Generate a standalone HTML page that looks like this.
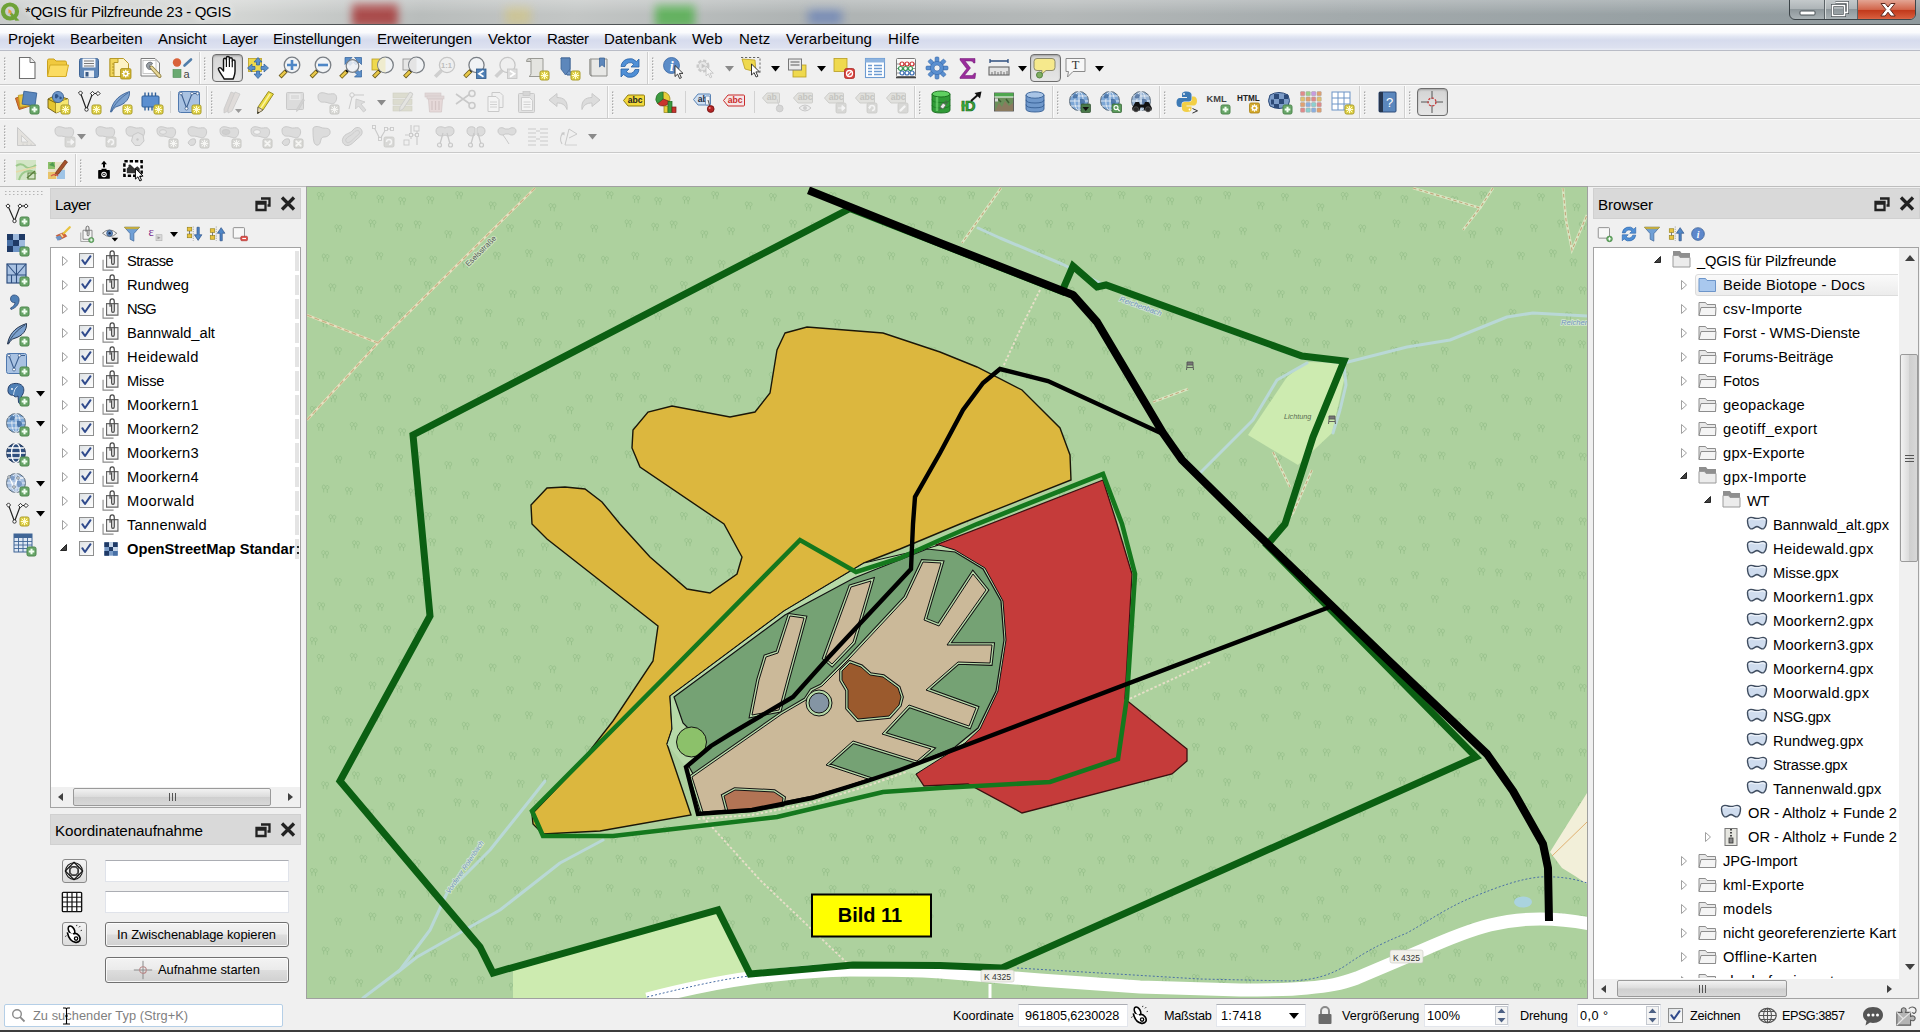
<!DOCTYPE html>
<html lang="de"><head><meta charset="utf-8"><title>*QGIS für Pilzfreunde 23 - QGIS</title>
<style>
html,body{margin:0;padding:0}
body{width:1920px;height:1032px;overflow:hidden;position:relative;background:#f0f0f0;font-family:'Liberation Sans',sans-serif}
svg{display:block}
</style></head><body>

<div id="title" style="position:absolute;left:0;top:0;width:1920px;height:24px;background:linear-gradient(100deg,#c9cccb 0%,#d4d6d4 12%,#b9bdbc 22%,#c3c6c5 30%,#aeb3b3 42%,#b4b8b8 55%,#a3aaac 70%,#98a1a4 85%,#8f999d 100%);overflow:hidden">
 <div style="position:absolute;left:352px;top:3px;width:46px;height:24px;background:#a53030;filter:blur(4px);opacity:.8"></div>
 <div style="position:absolute;left:505px;top:6px;width:26px;height:20px;background:#cfc58f;filter:blur(5px);opacity:.8"></div>
 <div style="position:absolute;left:655px;top:4px;width:40px;height:24px;background:#57b052;filter:blur(4px);opacity:.85"></div>
 <div style="position:absolute;left:808px;top:9px;width:34px;height:16px;background:#6f86b8;filter:blur(5px);opacity:.8"></div>
 <div style="position:absolute;left:0;top:0;width:1920px;height:24px;background:linear-gradient(180deg,rgba(255,255,255,.25),rgba(255,255,255,0) 60%)"></div>
 <svg width="22" height="22" viewBox="0 0 22 22" style="position:absolute;left:0px;top:1px">
  <circle cx="10" cy="10.5" r="7" fill="none" stroke="#6ea237" stroke-width="4.2"/>
  <path d="M11,11 L19.5,19.5 L15.5,19.8 L9.5,13z" fill="#6ea237"/>
  <path d="M8.5,8 l3.5,2.5 -1.6,.4 1.2,2 -1,.6 -1.2,-2 -1,1.2z" fill="#ee9a30"/>
 </svg>
 <div style="position:absolute;left:25px;top:2px;font:15px/20px 'Liberation Sans',sans-serif;color:#000;letter-spacing:-0.32px;text-shadow:0 0 6px rgba(255,255,255,.9),0 0 10px rgba(255,255,255,.7)">*QGIS für Pilzfreunde 23 - QGIS</div>
 <!-- window buttons -->
 <div style="position:absolute;left:1789px;top:-1px;width:127px;height:21px;border:1px solid #3c4448;border-radius:0 0 6px 6px;box-sizing:border-box;background:linear-gradient(180deg,#c4c9cb 0%,#aeb5b8 45%,#8e979b 50%,#a9b1b4 100%);overflow:hidden">
   <div style="position:absolute;left:34px;top:0;width:1px;height:21px;background:#5b6367"></div>
   <div style="position:absolute;left:35px;top:0;width:1px;height:21px;background:#d6dadb"></div>
   <div style="position:absolute;left:67px;top:0;width:1px;height:21px;background:#5b6367"></div>
   <div style="position:absolute;left:68px;top:0;width:58px;height:21px;background:linear-gradient(180deg,#e3a594 0%,#d2664c 45%,#c23a1c 50%,#d65a3a 85%,#e08a6a 100%)"></div>
   <svg width="127" height="21" viewBox="0 0 127 21" style="position:absolute;left:0;top:0">
    <rect x="10" y="11" width="15" height="4" rx="1" fill="#fff" stroke="#4b5357" stroke-width="1"/>
    <path d="M45.5,2.5 h12 v10 h-3 M42.5,5.5 h12 v10 h-12 z" fill="none" stroke="#4b5357" stroke-width="3"/>
    <path d="M45.5,2.5 h12 v10 h-3 M42.5,5.5 h12 v10 h-12 z" fill="none" stroke="#fff" stroke-width="1.6"/>
    <path d="M91,3.5 h4.2 l2.8,3.6 2.8,-3.6 h4.2 l-4.8,6 5,6.5 h-4.4 l-2.8,-3.8 -2.8,3.8 h-4.4 l5,-6.5z" fill="#fff" stroke="#5c2a20" stroke-width="1"/>
   </svg>
 </div>
</div>
<div style="position:absolute;left:0;top:24px;width:1920px;height:1px;background:#4f5456"></div>
<div id="menu" style="position:absolute;left:0;top:25px;width:1920px;height:25px;background:linear-gradient(180deg,#ffffff 0%,#fafbfd 30%,#e4e8f4 45%,#d6dbed 60%,#dde1f0 90%,#e9ecf5 100%);border-bottom:1px solid #b9bcc6;box-sizing:content-box"><span style="position:absolute;left:8px;top:4px;font:normal 15px/20px 'Liberation Sans',sans-serif;color:#000;white-space:nowrap;letter-spacing:-0.027px;">Projekt</span><span style="position:absolute;left:70px;top:4px;font:normal 15px/20px 'Liberation Sans',sans-serif;color:#000;white-space:nowrap;letter-spacing:-0.006px;">Bearbeiten</span><span style="position:absolute;left:158px;top:4px;font:normal 15px/20px 'Liberation Sans',sans-serif;color:#000;white-space:nowrap;letter-spacing:-0.099px;">Ansicht</span><span style="position:absolute;left:222px;top:4px;font:normal 15px/20px 'Liberation Sans',sans-serif;color:#000;white-space:nowrap;letter-spacing:-0.405px;">Layer</span><span style="position:absolute;left:273px;top:4px;font:normal 15px/20px 'Liberation Sans',sans-serif;color:#000;white-space:nowrap;letter-spacing:-0.160px;">Einstellungen</span><span style="position:absolute;left:377px;top:4px;font:normal 15px/20px 'Liberation Sans',sans-serif;color:#000;white-space:nowrap;letter-spacing:-0.133px;">Erweiterungen</span><span style="position:absolute;left:488px;top:4px;font:normal 15px/20px 'Liberation Sans',sans-serif;color:#000;white-space:nowrap;letter-spacing:0.162px;">Vektor</span><span style="position:absolute;left:547px;top:4px;font:normal 15px/20px 'Liberation Sans',sans-serif;color:#000;white-space:nowrap;letter-spacing:-0.447px;">Raster</span><span style="position:absolute;left:604px;top:4px;font:normal 15px/20px 'Liberation Sans',sans-serif;color:#000;white-space:nowrap;letter-spacing:-0.007px;">Datenbank</span><span style="position:absolute;left:692px;top:4px;font:normal 15px/20px 'Liberation Sans',sans-serif;color:#000;white-space:nowrap;letter-spacing:-0.025px;">Web</span><span style="position:absolute;left:739px;top:4px;font:normal 15px/20px 'Liberation Sans',sans-serif;color:#000;white-space:nowrap;letter-spacing:0.164px;">Netz</span><span style="position:absolute;left:786px;top:4px;font:normal 15px/20px 'Liberation Sans',sans-serif;color:#000;white-space:nowrap;letter-spacing:0.077px;">Verarbeitung</span><span style="position:absolute;left:888px;top:4px;font:normal 15px/20px 'Liberation Sans',sans-serif;color:#000;white-space:nowrap;letter-spacing:0.398px;">Hilfe</span></div><div style="position:absolute;left:0;top:84px;width:1920px;height:1px;background:#c9c9c9"></div><div style="position:absolute;left:0;top:85px;width:1920px;height:1px;background:#fafafa"></div><div style="position:absolute;left:0;top:118px;width:1920px;height:1px;background:#c9c9c9"></div><div style="position:absolute;left:0;top:119px;width:1920px;height:1px;background:#fafafa"></div><div style="position:absolute;left:0;top:152px;width:1920px;height:1px;background:#c9c9c9"></div><div style="position:absolute;left:0;top:153px;width:1920px;height:1px;background:#fafafa"></div><svg width="6" height="24" style="position:absolute;left:2px;top:57px"><rect x="2" y="0.5" width="1.5" height="1.5" fill="#a9a9a9"/><rect x="3" y="1.5" width="1.2" height="1.2" fill="#fdfdfd"/><rect x="2" y="3.5" width="1.5" height="1.5" fill="#a9a9a9"/><rect x="3" y="4.5" width="1.2" height="1.2" fill="#fdfdfd"/><rect x="2" y="6.5" width="1.5" height="1.5" fill="#a9a9a9"/><rect x="3" y="7.5" width="1.2" height="1.2" fill="#fdfdfd"/><rect x="2" y="9.5" width="1.5" height="1.5" fill="#a9a9a9"/><rect x="3" y="10.5" width="1.2" height="1.2" fill="#fdfdfd"/><rect x="2" y="12.5" width="1.5" height="1.5" fill="#a9a9a9"/><rect x="3" y="13.5" width="1.2" height="1.2" fill="#fdfdfd"/><rect x="2" y="15.5" width="1.5" height="1.5" fill="#a9a9a9"/><rect x="3" y="16.5" width="1.2" height="1.2" fill="#fdfdfd"/><rect x="2" y="18.5" width="1.5" height="1.5" fill="#a9a9a9"/><rect x="3" y="19.5" width="1.2" height="1.2" fill="#fdfdfd"/><rect x="2" y="21.5" width="1.5" height="1.5" fill="#a9a9a9"/><rect x="3" y="22.5" width="1.2" height="1.2" fill="#fdfdfd"/></svg><svg width="24" height="24" viewBox="0 0 24 24" style="position:absolute;left:15px;top:56px;overflow:visible;"><path d="M4.5,1.5 h10.5 l5,5 v16 h-15.5z" fill="#fff" stroke="#6f6f6f" stroke-width="1.1"/><path d="M15,1.5 v5 h5" fill="#eee" stroke="#6f6f6f" stroke-width="1"/></svg><svg width="24" height="24" viewBox="0 0 24 24" style="position:absolute;left:46px;top:56px;overflow:visible;"><path d="M1.5,4.5 q0,-1.5 1.5,-1.5 h5 l2,2 h9 q1.5,0 1.5,1.5 v13 h-19z" fill="#f0c93f" stroke="#c9a11e" stroke-width="1"/><path d="M4,9 h18.5 l-2.5,11.5 h-18.5z" fill="#fbdc62" stroke="#d3ab27" stroke-width="1"/></svg><svg width="24" height="24" viewBox="0 0 24 24" style="position:absolute;left:77px;top:56px;overflow:visible;"><rect x="2.5" y="2.5" width="19" height="19" rx="2" fill="#5f87b8" stroke="#3f6596" stroke-width="1"/><rect x="5.5" y="2.5" width="13" height="9" fill="#f4f6f9"/><path d="M7,5 h10 M7,7.5 h10 M7,10 h10" stroke="#777" stroke-width="1"/><rect x="7" y="14.5" width="10" height="7" fill="#e9eef5"/><rect x="8.5" y="16" width="3" height="4.5" fill="#3a5a85"/></svg><svg width="24" height="24" viewBox="0 0 24 24" style="position:absolute;left:108px;top:56px;overflow:visible;"><path d="M2,2.5 h13.5 l5,5 v13 h-18.5z" fill="#fdf3c4" stroke="#b79a2b" stroke-width="1"/><path d="M2,2.5 h8 v4 h-4 v14 h-4z" fill="#f1d65a" stroke="#b79a2b" stroke-width="1"/><path d="M4,8 h2 M4,11 h2 M4,14 h2 M4,17 h2" stroke="#a88b1c" stroke-width="0.8"/><rect x="12.5" y="12.5" width="10.5" height="10.5" rx="1.5" fill="#cfb42e" stroke="#a88f1a" stroke-width="0.8"/><circle cx="17.7" cy="17.7" r="2" fill="none" stroke="#fff" stroke-width="1.4"/><path d="M17.7,13.8 v1.6 M17.7,20 v1.6 M13.8,17.7 h1.6 M20,17.7 h1.6 M15,15 l1.1,1.1 M20.4,15 l-1.1,1.1 M15,20.4 l1.1,-1.1 M20.4,20.4 l-1.1,-1.1" stroke="#fff" stroke-width="1.2"/></svg><svg width="24" height="24" viewBox="0 0 24 24" style="position:absolute;left:139px;top:56px;overflow:visible;"><path d="M2,2.5 h14 l4.5,4.5 v13 h-18.5z" fill="#fafafa" stroke="#7c7c7c" stroke-width="1"/><rect x="4" y="4.5" width="13" height="13" fill="#fff" stroke="#bbb" stroke-width="0.8"/><path d="M12.5,11.5 L20.5,20" stroke="#8a7a3a" stroke-width="4" stroke-linecap="round"/><path d="M12.5,11.5 L20.5,20" stroke="#e7d79a" stroke-width="2.4" stroke-linecap="round"/><path d="M13.5,7.2 a3.6,3.6 0 1 0 -1.2,6 l-2,-2 0.5,-2 2,-0.6z" fill="#9aa0a6" stroke="#5f656b" stroke-width="0.8"/></svg><svg width="24" height="24" viewBox="0 0 24 24" style="position:absolute;left:170px;top:56px;overflow:visible;"><circle cx="7" cy="6.5" r="4.2" fill="#d9623a"/><rect x="3" y="13.5" width="8" height="8" fill="#6aaa72" stroke="#4c8a55" stroke-width="0.6"/><path d="M14.5,9.5 L21,3.5" stroke="#4f7daa" stroke-width="2.6" stroke-linecap="round"/><text x="13.5" y="21.5" font-family="Liberation Sans,sans-serif" font-size="11" fill="#444">a</text></svg><div style="position:absolute;left:199px;top:52px;width:1px;height:32px;background:#cfcfcf"></div><div style="position:absolute;left:200px;top:52px;width:1px;height:32px;background:#fbfbfb"></div><svg width="6" height="24" style="position:absolute;left:202px;top:57px"><rect x="2" y="0.5" width="1.5" height="1.5" fill="#a9a9a9"/><rect x="3" y="1.5" width="1.2" height="1.2" fill="#fdfdfd"/><rect x="2" y="3.5" width="1.5" height="1.5" fill="#a9a9a9"/><rect x="3" y="4.5" width="1.2" height="1.2" fill="#fdfdfd"/><rect x="2" y="6.5" width="1.5" height="1.5" fill="#a9a9a9"/><rect x="3" y="7.5" width="1.2" height="1.2" fill="#fdfdfd"/><rect x="2" y="9.5" width="1.5" height="1.5" fill="#a9a9a9"/><rect x="3" y="10.5" width="1.2" height="1.2" fill="#fdfdfd"/><rect x="2" y="12.5" width="1.5" height="1.5" fill="#a9a9a9"/><rect x="3" y="13.5" width="1.2" height="1.2" fill="#fdfdfd"/><rect x="2" y="15.5" width="1.5" height="1.5" fill="#a9a9a9"/><rect x="3" y="16.5" width="1.2" height="1.2" fill="#fdfdfd"/><rect x="2" y="18.5" width="1.5" height="1.5" fill="#a9a9a9"/><rect x="3" y="19.5" width="1.2" height="1.2" fill="#fdfdfd"/><rect x="2" y="21.5" width="1.5" height="1.5" fill="#a9a9a9"/><rect x="3" y="22.5" width="1.2" height="1.2" fill="#fdfdfd"/></svg><div style="position:absolute;left:212px;top:54px;width:31px;height:28px;box-sizing:border-box;border:1px solid #6e6e6e;border-radius:4px;background:linear-gradient(180deg,#d4d4d4,#e6e6e6);box-shadow:inset 0 1px 2px rgba(0,0,0,.25)"></div><svg width="24" height="24" viewBox="0 0 24 24" style="position:absolute;left:215px;top:56px;overflow:visible;"><g transform="translate(12 12) scale(1.2) translate(-10.5 -12.3)"><path d="M8.2,21.5 C6.5,18.5 4.3,16 3.4,13.6 C2.9,12.2 4.6,11.4 5.7,12.6 L7.6,14.8 V5.4 C7.6,3.7 10,3.7 10,5.4 V4 C10,2.2 12.5,2.2 12.5,4 V5 C12.5,3.4 14.9,3.4 14.9,5 V6.6 C14.9,5.2 17.2,5.2 17.2,6.8 V15 C17.2,18 16.2,19.5 15.6,21.5z" fill="#fff" stroke="#111" stroke-width="1.2" stroke-linejoin="round"/><path d="M10,5.4 v6 M12.5,5 v6.4 M14.9,6.6 v5" stroke="#111" stroke-width="1"/></g></svg><svg width="24" height="24" viewBox="0 0 24 24" style="position:absolute;left:246px;top:56px;overflow:visible;"><rect x="2.5" y="2.5" width="13" height="13" fill="#efd94e" stroke="#b99d21" stroke-width="0.8"/><g fill="#5b8fc9" stroke="#2f5f99" stroke-width="0.7"><path d="M12,1.500 l4,4.500 h-2.500 v3 h-3 v-3 h-2.500z"/><path d="M12,22.500 l4,-4.500 h-2.500 v-3 h-3 v3 h-2.500z"/><path d="M1.500,12 l4.500,-4 v2.500 h3 v3 h-3 v2.500z"/><path d="M22.500,12 l-4.500,-4 v2.500 h-3 v3 h3 v2.500z"/></g></svg><svg width="24" height="24" viewBox="0 0 24 24" style="position:absolute;left:277px;top:56px;overflow:visible;"><path d="M9.384,14.616 L3.0840000000000005,20.916" stroke="#6b5a1a" stroke-width="4.2" stroke-linecap="butt"/><path d="M8.584,15.416 L3.5840000000000005,20.416" stroke="#e9c94a" stroke-width="2.6" stroke-linecap="butt"/><circle cx="9.684000000000001" cy="14.315999999999999" r="1.5" fill="#111"/><circle cx="15" cy="9" r="7.8" fill="#f1f3f5" stroke="#7a7f85" stroke-width="1.3"/><path d="M15,4 v10 M10,9 h10" stroke="#4d86c6" stroke-width="2.6"/></svg><svg width="24" height="24" viewBox="0 0 24 24" style="position:absolute;left:308px;top:56px;overflow:visible;"><path d="M9.384,14.616 L3.0840000000000005,20.916" stroke="#6b5a1a" stroke-width="4.2" stroke-linecap="butt"/><path d="M8.584,15.416 L3.5840000000000005,20.416" stroke="#e9c94a" stroke-width="2.6" stroke-linecap="butt"/><circle cx="9.684000000000001" cy="14.315999999999999" r="1.5" fill="#111"/><circle cx="15" cy="9" r="7.8" fill="#f1f3f5" stroke="#7a7f85" stroke-width="1.3"/><path d="M10,9 h10" stroke="#4d86c6" stroke-width="2.6"/></svg><svg width="24" height="24" viewBox="0 0 24 24" style="position:absolute;left:339px;top:56px;overflow:visible;"><g fill="#5b8fc9" stroke="#2f5f99" stroke-width="0.7"><path d="M6,1.500 h7 l-2.500,2.500 3,3 -2.500,2.500 -3,-3 -2,2z"/><path d="M22.500,1.500 v7 l-2.500,-2.500 -3,3 -2.500,-2.500 3,-3 -2,-2z"/><path d="M22.500,21 h-7 l2.500,-2.500 -3,-3 2.500,-2.500 3,3 2,-2z"/></g><path d="M8,15 L1.700,21.300" stroke="#6b5a1a" stroke-width="4.2"/><path d="M7.200,15.800 L2.200,20.800" stroke="#e9c94a" stroke-width="2.600"/><circle cx="8.300" cy="14.700" r="1.500" fill="#111"/><circle cx="13.500" cy="10" r="6.300" fill="#eef1f4" fill-opacity="0.85" stroke="#7a7f85" stroke-width="1.200"/></svg><svg width="24" height="24" viewBox="0 0 24 24" style="position:absolute;left:370px;top:56px;overflow:visible;"><rect x="2" y="3" width="9" height="11" fill="#efd94e" stroke="#b99d21" stroke-width="0.8"/><path d="M9.884,14.616 L3.5840000000000005,20.916" stroke="#6b5a1a" stroke-width="4.2" stroke-linecap="butt"/><path d="M9.084,15.416 L4.0840000000000005,20.416" stroke="#e9c94a" stroke-width="2.6" stroke-linecap="butt"/><circle cx="10.184000000000001" cy="14.315999999999999" r="1.5" fill="#111"/><circle cx="15.5" cy="9" r="7.8" fill="#f1f3f5" stroke="#7a7f85" stroke-width="1.3"/><path d="M15.5,1.5 a7.5,7.5 0 0 0 0,15z" fill="#efeccf"/></svg><svg width="24" height="24" viewBox="0 0 24 24" style="position:absolute;left:401px;top:56px;overflow:visible;"><rect x="2" y="3" width="9" height="11" fill="#e6e6e6" stroke="#8d8d8d" stroke-width="0.8"/><path d="M9.884,14.616 L3.5840000000000005,20.916" stroke="#6b5a1a" stroke-width="4.2" stroke-linecap="butt"/><path d="M9.084,15.416 L4.0840000000000005,20.416" stroke="#e9c94a" stroke-width="2.6" stroke-linecap="butt"/><circle cx="10.184000000000001" cy="14.315999999999999" r="1.5" fill="#111"/><circle cx="15.5" cy="9" r="7.8" fill="#f1f3f5" stroke="#7a7f85" stroke-width="1.3"/><path d="M15.5,1.5 a7.5,7.5 0 0 0 0,15z" fill="#e4e4e4"/></svg><svg width="24" height="24" viewBox="0 0 24 24" style="position:absolute;left:432px;top:56px;overflow:visible;"><path d="M9.528,14.472 L3.2280000000000006,20.772" stroke="#cfcfcf" stroke-width="3.8" stroke-linecap="butt"/><circle cx="15" cy="9" r="7.6" fill="#efefef" stroke="#c6c6c6" stroke-width="1.3"/><text x="14.5" y="12" text-anchor="middle" font-family="Liberation Sans,sans-serif" font-size="7.5" font-weight="bold" fill="#bdbdbd">1:1</text></svg><svg width="24" height="24" viewBox="0 0 24 24" style="position:absolute;left:463px;top:56px;overflow:visible;"><path d="M8.028,14.472 L1.7280000000000006,20.772" stroke="#6b5a1a" stroke-width="4.2" stroke-linecap="butt"/><path d="M7.228000000000001,15.272 L2.2280000000000006,20.272" stroke="#e9c94a" stroke-width="2.6" stroke-linecap="butt"/><circle cx="8.328000000000001" cy="14.171999999999999" r="1.5" fill="#111"/><circle cx="13.5" cy="9" r="7.6" fill="#f1f3f5" stroke="#7a7f85" stroke-width="1.3"/><rect x="13.5" y="13" width="9.5" height="9.5" fill="#4f7fb5" stroke="#2e5887" stroke-width="0.8"/><path d="M20.5,14.8 l-4.5,3 4.5,3" fill="none" stroke="#fff" stroke-width="1.8"/></svg><svg width="24" height="24" viewBox="0 0 24 24" style="position:absolute;left:494px;top:56px;overflow:visible;"><path d="M8.028,14.472 L1.7280000000000006,20.772" stroke="#cfcfcf" stroke-width="3.8" stroke-linecap="butt"/><circle cx="13.5" cy="9" r="7.6" fill="#efefef" stroke="#c6c6c6" stroke-width="1.3"/><rect x="13.5" y="13" width="9.5" height="9.5" fill="#dcdcdc" stroke="#c4c4c4" stroke-width="0.8"/><path d="M16,14.8 l4.5,3 -4.5,3" fill="none" stroke="#fff" stroke-width="1.8"/></svg><svg width="24" height="24" viewBox="0 0 24 24" style="position:absolute;left:525px;top:56px;overflow:visible;"><path d="M4,2.5 h14 v15 q0,3 -3,3 h-11 q2,-1 2,-3 v-13 q0,-2 -2,-2z" fill="#e4e4e0" stroke="#9a9a94" stroke-width="1"/><path d="M4,2.5 q-2.5,0 -2.5,3 h4.5" fill="#d0d0cc" stroke="#9a9a94" stroke-width="1"/><rect x="15" y="15" width="9" height="9" rx="1.6" fill="#e0d247" stroke="#a99b2a" stroke-width="1"/><path d="M19.5,16.2 v6.6 M16.2,19.5 h6.6 M17.1,17.1 l4.8,4.8 M21.9,17.1 l-4.8,4.8" stroke="#fffcd2" stroke-width="1" stroke-linecap="round"/></svg><svg width="24" height="24" viewBox="0 0 24 24" style="position:absolute;left:556px;top:56px;overflow:visible;"><path d="M5,2 h9 v14 h6 v3 h-9z" fill="#6f96c6" stroke="#3f6596" stroke-width="1"/><path d="M5,2 h9 v11 l-4.5,6 -4.5,-6z" fill="#5d87bb" stroke="#3f6596" stroke-width="0.8"/><rect x="15" y="15" width="9" height="9" rx="1.6" fill="#e0d247" stroke="#a99b2a" stroke-width="1"/><path d="M19.5,16.2 v6.6 M16.2,19.5 h6.6 M17.1,17.1 l4.8,4.8 M21.9,17.1 l-4.8,4.8" stroke="#fffcd2" stroke-width="1" stroke-linecap="round"/></svg><svg width="24" height="24" viewBox="0 0 24 24" style="position:absolute;left:587px;top:56px;overflow:visible;"><path d="M3,3 h17 v17 h-15 q-2,0 -2,-2z" fill="#e8e8e6" stroke="#8d8d89" stroke-width="1"/><path d="M3,3 v15 q0,2 2,2 q-1,-1 -1,-2 v-15" fill="#cfcfcc" stroke="#8d8d89" stroke-width="0.8"/><path d="M12.5,2 h5 v9 l-2.5,-2.2 -2.5,2.2z" fill="#5d87bb" stroke="#3f6596" stroke-width="0.8"/></svg><svg width="24" height="24" viewBox="0 0 24 24" style="position:absolute;left:618px;top:56px;overflow:visible;"><path d="M3,10.5 A9,9 0 0 1 18.5,5.5 L21,3 V11 H13 L15.8,8.2 A5.2,5.2 0 0 0 7,10.5z" fill="#4f8fd6" stroke="#2a62a6" stroke-width="0.8"/><path d="M21,13.5 A9,9 0 0 1 5.5,18.5 L3,21 V13 H11 L8.2,15.8 A5.2,5.2 0 0 0 17,13.5z" fill="#4f8fd6" stroke="#2a62a6" stroke-width="0.8"/></svg><div style="position:absolute;left:647px;top:52px;width:1px;height:32px;background:#cfcfcf"></div><div style="position:absolute;left:648px;top:52px;width:1px;height:32px;background:#fbfbfb"></div><svg width="6" height="24" style="position:absolute;left:650px;top:57px"><rect x="2" y="0.5" width="1.5" height="1.5" fill="#a9a9a9"/><rect x="3" y="1.5" width="1.2" height="1.2" fill="#fdfdfd"/><rect x="2" y="3.5" width="1.5" height="1.5" fill="#a9a9a9"/><rect x="3" y="4.5" width="1.2" height="1.2" fill="#fdfdfd"/><rect x="2" y="6.5" width="1.5" height="1.5" fill="#a9a9a9"/><rect x="3" y="7.5" width="1.2" height="1.2" fill="#fdfdfd"/><rect x="2" y="9.5" width="1.5" height="1.5" fill="#a9a9a9"/><rect x="3" y="10.5" width="1.2" height="1.2" fill="#fdfdfd"/><rect x="2" y="12.5" width="1.5" height="1.5" fill="#a9a9a9"/><rect x="3" y="13.5" width="1.2" height="1.2" fill="#fdfdfd"/><rect x="2" y="15.5" width="1.5" height="1.5" fill="#a9a9a9"/><rect x="3" y="16.5" width="1.2" height="1.2" fill="#fdfdfd"/><rect x="2" y="18.5" width="1.5" height="1.5" fill="#a9a9a9"/><rect x="3" y="19.5" width="1.2" height="1.2" fill="#fdfdfd"/><rect x="2" y="21.5" width="1.5" height="1.5" fill="#a9a9a9"/><rect x="3" y="22.5" width="1.2" height="1.2" fill="#fdfdfd"/></svg><svg width="24" height="24" viewBox="0 0 24 24" style="position:absolute;left:662px;top:56px;overflow:visible;"><circle cx="9.5" cy="9.5" r="8" fill="#5b8cc8" stroke="#3a67a3" stroke-width="0.8"/><text x="9.7" y="14.5" text-anchor="middle" font-family="Liberation Serif,serif" font-style="italic" font-weight="bold" font-size="14" fill="#fff">i</text><path d="M13,9.5 l0,11 2.6,-2.4 2,4.4 1.8,-.8 -2,-4.3 3.6,0z" fill="#fff" stroke="#222" stroke-width="0.9" stroke-linejoin="round"/></svg><svg width="24" height="24" viewBox="0 0 24 24" style="position:absolute;left:693px;top:56px;overflow:visible;"><circle cx="10" cy="10" r="5" fill="none" stroke="#c9c9c9" stroke-width="3" stroke-dasharray="3 1.6"/><circle cx="10" cy="10" r="4.5" fill="#e8e8e8" stroke="#c6c6c6" stroke-width="0.8"/><path d="M8.6,7.6 l4,2.4 -4,2.4z" fill="#c4c4c4"/><path d="M13,10 l0,10 2.4,-2.2 1.8,4 1.6,-.7 -1.8,-3.9 3.3,0z" fill="#f4f4f4" stroke="#c4c4c4" stroke-width="0.9"/></svg><svg width="24" height="24" viewBox="0 0 24 24" style="position:absolute;left:740px;top:56px;overflow:visible;"><path d="M2,3 l13,1 1,12 -11,-3z" fill="#efd94e" stroke="#b99d21" stroke-width="0.8"/><path d="M1,1.5 h19 v17" fill="none" stroke="#666" stroke-width="1" stroke-dasharray="2.2 1.8"/><path d="M11.5,8 l0,11 2.6,-2.4 2,4.4 1.8,-.8 -2,-4.3 3.6,0z" fill="#fff" stroke="#222" stroke-width="0.9" stroke-linejoin="round"/></svg><svg width="24" height="24" viewBox="0 0 24 24" style="position:absolute;left:786px;top:56px;overflow:visible;"><rect x="7" y="9" width="13" height="12" fill="#efd94e" stroke="#b99d21" stroke-width="0.8"/><rect x="2.5" y="3" width="13" height="11" fill="#eaeaea" stroke="#777" stroke-width="1"/><path d="M4.5,6 h9 M4.5,9 h9" stroke="#8a8a8a" stroke-width="1.6"/></svg><svg width="24" height="24" viewBox="0 0 24 24" style="position:absolute;left:832px;top:56px;overflow:visible;"><rect x="2" y="2.5" width="13" height="13" fill="#efd94e" stroke="#b99d21" stroke-width="0.8"/><rect x="12.5" y="12.5" width="10" height="10" rx="2" fill="#d8413d" stroke="#a82825" stroke-width="0.8"/><circle cx="17.5" cy="17.5" r="3" fill="none" stroke="#fff" stroke-width="1.3"/><path d="M15.4,19.6 l4.2,-4.2" stroke="#fff" stroke-width="1.3"/></svg><svg width="24" height="24" viewBox="0 0 24 24" style="position:absolute;left:863px;top:56px;overflow:visible;"><rect x="2.5" y="2.5" width="19" height="19" fill="#fff" stroke="#6d9bd1" stroke-width="1.1"/><rect x="2.5" y="2.5" width="19" height="4" fill="#8db3df"/><path d="M5,9.5 h4 M11,9.5 h8 M5,12.5 h4 M11,12.5 h8 M5,15.5 h4 M11,15.5 h8 M5,18.5 h4 M11,18.5 h8" stroke="#6d9bd1" stroke-width="1.3"/></svg><svg width="24" height="24" viewBox="0 0 24 24" style="position:absolute;left:894px;top:56px;overflow:visible;"><rect x="2.5" y="2.5" width="19" height="18" rx="1" fill="#fafafa" stroke="#7a7a7a" stroke-width="1"/><path d="M2,21.500 h20" stroke="#444" stroke-width="1.600"/><path d="M3,8 h18 M3,12.5 h18 M3,17 h18" stroke="#777" stroke-width="0.8"/><g stroke-width="1.2" fill="#fff"><circle cx="8" cy="8" r="2" stroke="#c33"/><circle cx="13" cy="8" r="2" stroke="#c33"/><circle cx="18" cy="8" r="2" stroke="#c33"/><circle cx="6.5" cy="12.5" r="2" stroke="#3a9a55"/><circle cx="11.5" cy="12.5" r="2" stroke="#3a9a55"/><circle cx="16.5" cy="12.5" r="2" stroke="#3a9a55"/><circle cx="8" cy="17" r="2" stroke="#3c6fb5"/><circle cx="13" cy="17" r="2" stroke="#3c6fb5"/><circle cx="18" cy="17" r="2" stroke="#3c6fb5"/></g></svg><svg width="24" height="24" viewBox="0 0 24 24" style="position:absolute;left:925px;top:56px;overflow:visible;"><g transform="translate(12 12)"><g fill="#5a8fd0" stroke="#3567a8" stroke-width="0.6"><rect x="-1.9" y="-11" width="3.8" height="6" rx="1" transform="rotate(0)"/><rect x="-1.9" y="-11" width="3.8" height="6" rx="1" transform="rotate(45)"/><rect x="-1.9" y="-11" width="3.8" height="6" rx="1" transform="rotate(90)"/><rect x="-1.9" y="-11" width="3.8" height="6" rx="1" transform="rotate(135)"/><rect x="-1.9" y="-11" width="3.8" height="6" rx="1" transform="rotate(180)"/><rect x="-1.9" y="-11" width="3.8" height="6" rx="1" transform="rotate(225)"/><rect x="-1.9" y="-11" width="3.8" height="6" rx="1" transform="rotate(270)"/><rect x="-1.9" y="-11" width="3.8" height="6" rx="1" transform="rotate(315)"/></g><circle r="6.6" fill="#5a8fd0" stroke="#3567a8" stroke-width="0.6"/><circle r="3" fill="#f0f0f0" stroke="#3567a8" stroke-width="0.6"/></g></svg><svg width="24" height="24" viewBox="0 0 24 24" style="position:absolute;left:956px;top:56px;overflow:visible;"><path d="M4,2.5 h15 v4.5 h-1.5 q-0.3,-2 -2.5,-2 h-6 l5.5,7 -6,7.5 h7 q2.2,0 2.7,-2.3 h1.5 l-0.7,5.3 h-15 v-1.2 l6.7,-8.6 -6.7,-8.7z" fill="#992c9b" stroke="#6d1470" stroke-width="0.5"/></svg><svg width="24" height="24" viewBox="0 0 24 24" style="position:absolute;left:987px;top:56px;overflow:visible;"><path d="M3,3 v4 M21,3 v4 M3,5 h18" stroke="#2f4f7f" stroke-width="1.3" fill="none"/><rect x="2" y="11" width="20" height="8" fill="#e3e3e3" stroke="#666" stroke-width="1.1"/><path d="M5,19 v-3 M8,19 v-4 M11,19 v-3 M14,19 v-4 M17,19 v-3 M20,19 v-4" stroke="#666" stroke-width="0.9"/></svg><svg width="9" height="6" style="position:absolute;left:724.5px;top:65.5px"><path d="M0,0 h9 l-4.5,5.5z" fill="#8a8a8a"/></svg><svg width="9" height="6" style="position:absolute;left:770.5px;top:65.5px"><path d="M0,0 h9 l-4.5,5.5z" fill="#000"/></svg><svg width="9" height="6" style="position:absolute;left:816.5px;top:65.5px"><path d="M0,0 h9 l-4.5,5.5z" fill="#000"/></svg><svg width="9" height="6" style="position:absolute;left:1017.5px;top:65.5px"><path d="M0,0 h9 l-4.5,5.5z" fill="#000"/></svg><div style="position:absolute;left:1030px;top:54px;width:31px;height:28px;box-sizing:border-box;border:1px solid #6e6e6e;border-radius:4px;background:linear-gradient(180deg,#d4d4d4,#e6e6e6);box-shadow:inset 0 1px 2px rgba(0,0,0,.25)"></div><svg width="24" height="24" viewBox="0 0 24 24" style="position:absolute;left:1033px;top:56px;overflow:visible;"><path d="M4,2.5 h15 q3,0 3,3 v6 q0,3 -3,3 h-6 l-4.5,4 0.5,-4 h-5 q-3,0 -3,-3 v-6 q0,-3 3,-3z" fill="#f6e98c" stroke="#8c8a6a" stroke-width="1"/><circle cx="6.5" cy="19" r="3" fill="#7fae62" stroke="#4f7f3a" stroke-width="0.9"/></svg><svg width="24" height="24" viewBox="0 0 24 24" style="position:absolute;left:1064px;top:56px;overflow:visible;"><path d="M2,2.5 h19 v13 h-12 l-5.5,5.5 1,-5.5 h-2.5z" fill="#f7f7f7" stroke="#8a8a8a" stroke-width="1"/><text x="11.5" y="13" text-anchor="middle" font-family="Liberation Serif,serif" font-size="12.5" fill="#333">T</text></svg><svg width="9" height="6" style="position:absolute;left:1094.5px;top:65.5px"><path d="M0,0 h9 l-4.5,5.5z" fill="#000"/></svg><svg width="6" height="24" style="position:absolute;left:2px;top:91px"><rect x="2" y="0.5" width="1.5" height="1.5" fill="#a9a9a9"/><rect x="3" y="1.5" width="1.2" height="1.2" fill="#fdfdfd"/><rect x="2" y="3.5" width="1.5" height="1.5" fill="#a9a9a9"/><rect x="3" y="4.5" width="1.2" height="1.2" fill="#fdfdfd"/><rect x="2" y="6.5" width="1.5" height="1.5" fill="#a9a9a9"/><rect x="3" y="7.5" width="1.2" height="1.2" fill="#fdfdfd"/><rect x="2" y="9.5" width="1.5" height="1.5" fill="#a9a9a9"/><rect x="3" y="10.5" width="1.2" height="1.2" fill="#fdfdfd"/><rect x="2" y="12.5" width="1.5" height="1.5" fill="#a9a9a9"/><rect x="3" y="13.5" width="1.2" height="1.2" fill="#fdfdfd"/><rect x="2" y="15.5" width="1.5" height="1.5" fill="#a9a9a9"/><rect x="3" y="16.5" width="1.2" height="1.2" fill="#fdfdfd"/><rect x="2" y="18.5" width="1.5" height="1.5" fill="#a9a9a9"/><rect x="3" y="19.5" width="1.2" height="1.2" fill="#fdfdfd"/><rect x="2" y="21.5" width="1.5" height="1.5" fill="#a9a9a9"/><rect x="3" y="22.5" width="1.2" height="1.2" fill="#fdfdfd"/></svg><svg width="24" height="24" viewBox="0 0 24 24" style="position:absolute;left:15px;top:90px;overflow:visible;"><rect x="2" y="6" width="12" height="12" transform="rotate(-18 8 12)" fill="#d9772e" stroke="#a9561a" stroke-width="0.8"/><rect x="4" y="4.5" width="12" height="12" transform="rotate(-8 10 10)" fill="#e8c33f" stroke="#b89b1d" stroke-width="0.8"/><rect x="8" y="2" width="13" height="13" transform="rotate(8 14 8)" fill="#5b87bd" stroke="#345f93" stroke-width="0.8"/><rect x="15" y="15" width="9" height="9" rx="1.6" fill="#69a669" stroke="#4d864d" stroke-width="1"/><path d="M19.5,16.7 v5.6 M16.7,19.5 h5.6" stroke="#f2fff2" stroke-width="2"/></svg><svg width="24" height="24" viewBox="0 0 24 24" style="position:absolute;left:46px;top:90px;overflow:visible;"><path d="M2,9 l8,-4 12,4 v9 l-12,5 -8,-5z" fill="#e3c531" stroke="#6b5a12" stroke-width="0.9"/><path d="M2,9 l8,4 12,-4 M10,13 v10" stroke="#6b5a12" stroke-width="0.9" fill="none"/><path d="M10,13 l12,-4 v9 l-12,5z" fill="#f6e670"/><circle cx="12" cy="7" r="5.6" fill="#6b95c9" stroke="#34598c" stroke-width="0.8"/><path d="M9,4.5 q2,-1 3,0.5 q1.5,1.5 -0.5,2.5 q-1,1.5 -2.5,0.5z M13.5,6.5 q2,-0.5 2.5,1.5 q-1,2 -2.5,1z" fill="#2f5488"/><rect x="15" y="15" width="9" height="9" rx="1.6" fill="#e0d247" stroke="#a99b2a" stroke-width="1"/><path d="M19.5,16.2 v6.6 M16.2,19.5 h6.6 M17.1,17.1 l4.8,4.8 M21.9,17.1 l-4.8,4.8" stroke="#fffcd2" stroke-width="1" stroke-linecap="round"/></svg><svg width="24" height="24" viewBox="0 0 24 24" style="position:absolute;left:77px;top:90px;overflow:visible;"><path d="M3.5,3 L9.5,19.5 L15.5,3.5 L21,3.5" fill="none" stroke="#222" stroke-width="1.2"/><rect x="2" y="1.5" width="3" height="3" transform="rotate(45 3.5 3)" fill="#fff" stroke="#222" stroke-width="0.9"/><rect x="14" y="2" width="3" height="3" transform="rotate(45 15.5 3.5)" fill="#fff" stroke="#222" stroke-width="0.9"/><rect x="19.5" y="2" width="3" height="3" transform="rotate(45 21 3.5)" fill="#fff" stroke="#222" stroke-width="0.9"/><circle cx="9.5" cy="19.5" r="1.7" fill="#fff" stroke="#222" stroke-width="0.9"/><rect x="15" y="15" width="9" height="9" rx="1.6" fill="#e0d247" stroke="#a99b2a" stroke-width="1"/><path d="M19.5,16.2 v6.6 M16.2,19.5 h6.6 M17.1,17.1 l4.8,4.8 M21.9,17.1 l-4.8,4.8" stroke="#fffcd2" stroke-width="1" stroke-linecap="round"/></svg><svg width="24" height="24" viewBox="0 0 24 24" style="position:absolute;left:108px;top:90px;overflow:visible;"><path d="M2.5,22 C4,14 8,6 21.5,1.5 C22,8 18,14 9,16.5 C7,17 5,19 3.5,22z" fill="#7da2cf" stroke="#3c6296" stroke-width="0.9"/><path d="M3,21.5 C7,14 12,8 20,3" fill="none" stroke="#3c6296" stroke-width="0.8"/><rect x="15" y="15" width="9" height="9" rx="1.6" fill="#e0d247" stroke="#a99b2a" stroke-width="1"/><path d="M19.5,16.2 v6.6 M16.2,19.5 h6.6 M17.1,17.1 l4.8,4.8 M21.9,17.1 l-4.8,4.8" stroke="#fffcd2" stroke-width="1" stroke-linecap="round"/></svg><svg width="24" height="24" viewBox="0 0 24 24" style="position:absolute;left:139px;top:90px;overflow:visible;"><rect x="3" y="6" width="17" height="11" rx="1" fill="#5b8fd0" stroke="#2f5f99" stroke-width="1"/><path d="M6,6 v-3.5 M9.5,6 v-3.5 M13,6 v-3.5 M16.5,6 v-3.5 M6,17 v3.5 M9.5,17 v3.5 M13,17 v3.5" stroke="#2f5f99" stroke-width="1.4"/><rect x="15" y="15" width="9" height="9" rx="1.6" fill="#e0d247" stroke="#a99b2a" stroke-width="1"/><path d="M19.5,16.2 v6.6 M16.2,19.5 h6.6 M17.1,17.1 l4.8,4.8 M21.9,17.1 l-4.8,4.8" stroke="#fffcd2" stroke-width="1" stroke-linecap="round"/></svg><div style="position:absolute;left:170px;top:91px;width:1px;height:22px;background:#d2d2d2"></div><svg width="24" height="24" viewBox="0 0 24 24" style="position:absolute;left:177px;top:90px;overflow:visible;"><rect x="1.5" y="1.5" width="21" height="21" rx="2" fill="#a9c2e2" stroke="#4f78ae" stroke-width="1"/><path d="M4,3 L9.5,18 L15,3.5 L21,3.5" fill="none" stroke="#3d5f8f" stroke-width="1.1"/><circle cx="4" cy="3.5" r="1.4" fill="#fff" stroke="#3d5f8f" stroke-width="0.8"/><circle cx="15" cy="3.5" r="1.4" fill="#fff" stroke="#3d5f8f" stroke-width="0.8"/><circle cx="20.5" cy="3.5" r="1.4" fill="#fff" stroke="#3d5f8f" stroke-width="0.8"/><circle cx="9.5" cy="18.5" r="1.5" fill="#fff" stroke="#3d5f8f" stroke-width="0.8"/><rect x="15" y="15" width="9" height="9" rx="1.6" fill="#e0d247" stroke="#a99b2a" stroke-width="1"/><path d="M19.5,16.2 v6.6 M16.2,19.5 h6.6 M17.1,17.1 l4.8,4.8 M21.9,17.1 l-4.8,4.8" stroke="#fffcd2" stroke-width="1" stroke-linecap="round"/></svg><div style="position:absolute;left:206px;top:86px;width:1px;height:32px;background:#cfcfcf"></div><div style="position:absolute;left:207px;top:86px;width:1px;height:32px;background:#fbfbfb"></div><svg width="6" height="24" style="position:absolute;left:209px;top:91px"><rect x="2" y="0.5" width="1.5" height="1.5" fill="#a9a9a9"/><rect x="3" y="1.5" width="1.2" height="1.2" fill="#fdfdfd"/><rect x="2" y="3.5" width="1.5" height="1.5" fill="#a9a9a9"/><rect x="3" y="4.5" width="1.2" height="1.2" fill="#fdfdfd"/><rect x="2" y="6.5" width="1.5" height="1.5" fill="#a9a9a9"/><rect x="3" y="7.5" width="1.2" height="1.2" fill="#fdfdfd"/><rect x="2" y="9.5" width="1.5" height="1.5" fill="#a9a9a9"/><rect x="3" y="10.5" width="1.2" height="1.2" fill="#fdfdfd"/><rect x="2" y="12.5" width="1.5" height="1.5" fill="#a9a9a9"/><rect x="3" y="13.5" width="1.2" height="1.2" fill="#fdfdfd"/><rect x="2" y="15.5" width="1.5" height="1.5" fill="#a9a9a9"/><rect x="3" y="16.5" width="1.2" height="1.2" fill="#fdfdfd"/><rect x="2" y="18.5" width="1.5" height="1.5" fill="#a9a9a9"/><rect x="3" y="19.5" width="1.2" height="1.2" fill="#fdfdfd"/><rect x="2" y="21.5" width="1.5" height="1.5" fill="#a9a9a9"/><rect x="3" y="22.5" width="1.2" height="1.2" fill="#fdfdfd"/></svg><svg width="24" height="24" viewBox="0 0 24 24" style="position:absolute;left:220px;top:90px;overflow:visible;"><path d="M11,2 l5,2 -8,17 -4,2 0,-4z" fill="#dad6d4" stroke="#c9c9c9" stroke-width="0.8"/><path d="M15,2 l5,2 -8,17 -4,2 0,-4z" fill="#e0dcda" stroke="#c9c9c9" stroke-width="0.8"/><path d="M15,19 h7 l-3.5,4z" fill="#9a9a9a"/></svg><svg width="24" height="24" viewBox="0 0 24 24" style="position:absolute;left:253px;top:90px;overflow:visible;"><path d="M15.5,1.5 l5,2.5 -10.5,16 -5.5,3.5 0.5,-6.5z" fill="#eada3e" stroke="#8f8420" stroke-width="0.9"/><path d="M17,4 l-10,15.5" stroke="#fbf3a0" stroke-width="1.4"/><path d="M5,17 l5,3 -5.5,3.5z" fill="#e9d7b5" stroke="#555" stroke-width="0.7"/><path d="M4.6,21.5 l1.8,1 -1.9,1.2z" fill="#222"/></svg><svg width="24" height="24" viewBox="0 0 24 24" style="position:absolute;left:284px;top:90px;overflow:visible;"><rect x="2.5" y="2.5" width="17" height="17" rx="1" fill="#dcdcdc" stroke="#c9c9c9" stroke-width="1"/><rect x="5.5" y="4" width="11" height="6" fill="#eaeaea"/><path d="M7,6 h8 M7,8 h8" stroke="#c9c9c9" stroke-width="0.8"/><path d="M20.5,10 l-6,10 -2,1.5 0.3,-2.5 6,-10z" fill="#d2d2d2" stroke="#c9c9c9" stroke-width="0.7"/></svg><svg width="24" height="24" viewBox="0 0 24 24" style="position:absolute;left:315px;top:90px;overflow:visible;"><path d="M3,6 C3,2.5 8,2 11,3.5 C14,5 17,3 19.5,4 C22.5,5.5 22,10 20,12.5 C18,14.5 15,13.5 12,12.5 C9,11.5 6,13 4.5,11 C3.2,9.5 3,8 3,6z" fill="#dcdcdc" stroke="#c9c9c9" stroke-width="1"/><rect x="15" y="15" width="9" height="9" rx="1.6" fill="#d9d9d6" stroke="#c6c6c3" stroke-width="1"/><path d="M19.5,16.2 v6.6 M16.2,19.5 h6.6 M17.1,17.1 l4.8,4.8 M21.9,17.1 l-4.8,4.8" stroke="#f6f6f4" stroke-width="1" stroke-linecap="round"/></svg><svg width="24" height="24" viewBox="0 0 24 24" style="position:absolute;left:346px;top:90px;overflow:visible;"><circle cx="6" cy="5" r="2.2" fill="#f2f2f2" stroke="#c9c9c9" stroke-width="1"/><path d="M6,7 L3,19 M8,5 h10" stroke="#c9c9c9" stroke-width="1"/><path d="M10,9 l9,3 -4,2 5,6 -2.5,2 -5,-6 -3,3z" fill="#dcdcdc" stroke="#c9c9c9" stroke-width="0.8"/></svg><svg width="24" height="24" viewBox="0 0 24 24" style="position:absolute;left:391px;top:90px;overflow:visible;"><rect x="2" y="3" width="19" height="5" fill="#dcdccf" stroke="#cfcfc4" stroke-width="0.6"/><rect x="2" y="9.5" width="19" height="5" fill="#dcdccf" stroke="#cfcfc4" stroke-width="0.6"/><rect x="2" y="16" width="19" height="5" fill="#dcdccf" stroke="#cfcfc4" stroke-width="0.6"/><path d="M19,2 l3,2 -10,15 -3.5,2 0.5,-4z" fill="#e4e4e0" stroke="#c9c9c9" stroke-width="0.8"/></svg><svg width="24" height="24" viewBox="0 0 24 24" style="position:absolute;left:422px;top:90px;overflow:visible;"><rect x="3" y="3" width="16" height="4" fill="#e0d6d6" stroke="#d3c8c8" stroke-width="0.6"/><rect x="5" y="6" width="17" height="3" fill="#e0d6d6" stroke="#d3c8c8" stroke-width="0.6"/><path d="M6.5,9 h14 l-1,13 h-12z" fill="#e6d9d9" stroke="#d3c8c8" stroke-width="0.8"/><path d="M10,11 v9 M13.5,11 v9 M17,11 v9" stroke="#d3c4c4" stroke-width="1.2"/></svg><svg width="24" height="24" viewBox="0 0 24 24" style="position:absolute;left:453px;top:90px;overflow:visible;"><path d="M3,4 L17,14 M3,14 L17,4" stroke="#c9c9c9" stroke-width="1.6"/><circle cx="19" cy="15.5" r="3" fill="none" stroke="#c9c9c9" stroke-width="1.6"/><circle cx="19" cy="5" r="3" fill="none" stroke="#c9c9c9" stroke-width="1.6" transform="translate(0 -1.5)"/></svg><svg width="24" height="24" viewBox="0 0 24 24" style="position:absolute;left:484px;top:90px;overflow:visible;"><path d="M8,2.5 h8 l3,3 v12 h-11z" fill="#f0f0f0" stroke="#c9c9c9" stroke-width="1"/><path d="M4,6.5 h8 l3,3 v12 h-11z" fill="#f4f4f4" stroke="#c9c9c9" stroke-width="1"/><path d="M6,12 h7 M6,14.5 h7 M6,17 h7" stroke="#c9c9c9" stroke-width="0.8"/></svg><svg width="24" height="24" viewBox="0 0 24 24" style="position:absolute;left:515px;top:90px;overflow:visible;"><rect x="3.5" y="3.5" width="16" height="19" rx="1" fill="#e2e2e2" stroke="#c9c9c9" stroke-width="1"/><rect x="8" y="1.5" width="7" height="4" fill="#d6d6d6" stroke="#c9c9c9" stroke-width="0.8"/><path d="M6.5,7.5 h8 l3,3 v10 h-11z" fill="#f4f4f4" stroke="#c9c9c9" stroke-width="0.9"/><path d="M8.5,12 h7 M8.5,14.5 h7 M8.5,17 h7" stroke="#c9c9c9" stroke-width="0.8"/></svg><svg width="24" height="24" viewBox="0 0 24 24" style="position:absolute;left:547px;top:90px;overflow:visible;"><path d="M2,10 L10,3.5 V7.5 C17,7.5 21,11 20,19.5 C18,14.5 15,13 10,13 V16.5z" fill="#dcdcdc" stroke="#c9c9c9" stroke-width="1"/></svg><svg width="24" height="24" viewBox="0 0 24 24" style="position:absolute;left:578px;top:90px;overflow:visible;"><path d="M22,10 L14,3.5 V7.5 C7,7.5 3,11 4,19.5 C6,14.5 9,13 14,13 V16.5z" fill="#dcdcdc" stroke="#c9c9c9" stroke-width="1"/></svg><svg width="9" height="6" style="position:absolute;left:376.5px;top:99.5px"><path d="M0,0 h9 l-4.5,5.5z" fill="#8a8a8a"/></svg><div style="position:absolute;left:607px;top:86px;width:1px;height:32px;background:#cfcfcf"></div><div style="position:absolute;left:608px;top:86px;width:1px;height:32px;background:#fbfbfb"></div><svg width="6" height="24" style="position:absolute;left:610px;top:91px"><rect x="2" y="0.5" width="1.5" height="1.5" fill="#a9a9a9"/><rect x="3" y="1.5" width="1.2" height="1.2" fill="#fdfdfd"/><rect x="2" y="3.5" width="1.5" height="1.5" fill="#a9a9a9"/><rect x="3" y="4.5" width="1.2" height="1.2" fill="#fdfdfd"/><rect x="2" y="6.5" width="1.5" height="1.5" fill="#a9a9a9"/><rect x="3" y="7.5" width="1.2" height="1.2" fill="#fdfdfd"/><rect x="2" y="9.5" width="1.5" height="1.5" fill="#a9a9a9"/><rect x="3" y="10.5" width="1.2" height="1.2" fill="#fdfdfd"/><rect x="2" y="12.5" width="1.5" height="1.5" fill="#a9a9a9"/><rect x="3" y="13.5" width="1.2" height="1.2" fill="#fdfdfd"/><rect x="2" y="15.5" width="1.5" height="1.5" fill="#a9a9a9"/><rect x="3" y="16.5" width="1.2" height="1.2" fill="#fdfdfd"/><rect x="2" y="18.5" width="1.5" height="1.5" fill="#a9a9a9"/><rect x="3" y="19.5" width="1.2" height="1.2" fill="#fdfdfd"/><rect x="2" y="21.5" width="1.5" height="1.5" fill="#a9a9a9"/><rect x="3" y="22.5" width="1.2" height="1.2" fill="#fdfdfd"/></svg><svg width="24" height="24" viewBox="0 0 24 24" style="position:absolute;left:622px;top:90px;overflow:visible;"><path d="M1.5,10.5 l4.5,-5.5 h15.5 q1,0 1,1 v9 q0,1 -1,1 h-15.5z" fill="#f2d93b" stroke="#8f7d14" stroke-width="1"/><text x="5.7" y="13.4" font-family="Liberation Sans,sans-serif" font-weight="bold" font-size="8.6" fill="#222">abc</text></svg><svg width="24" height="24" viewBox="0 0 24 24" style="position:absolute;left:654px;top:90px;overflow:visible;"><path d="M9,9 L9,2 A7,7 0 0 1 15.5,11.5z" fill="#e8cf3a" stroke="#8f7d14" stroke-width="0.7"/><path d="M9,9 L15.5,11.5 A7,7 0 0 1 3.5,13.5z" fill="#c8352d" stroke="#7a1d18" stroke-width="0.7"/><path d="M9,9 L3.5,13.5 A7,7 0 0 1 9,2z" fill="#3c9a3f" stroke="#1f6a22" stroke-width="0.7"/><rect x="10" y="16" width="4" height="6.5" fill="#e8cf3a" stroke="#8f7d14" stroke-width="0.7"/><rect x="14" y="11.5" width="4" height="11" fill="#3c9a3f" stroke="#1f6a22" stroke-width="0.7"/><rect x="18" y="17" width="4" height="5.5" fill="#c8352d" stroke="#7a1d18" stroke-width="0.7"/></svg><div style="position:absolute;left:685px;top:91px;width:1px;height:22px;background:#d2d2d2"></div><svg width="24" height="24" viewBox="0 0 24 24" style="position:absolute;left:692px;top:90px;overflow:visible;"><path d="M1.5,9.5 l4.5,-5.5 h11.5 q1,0 1,1 v9 q0,1 -1,1 h-11.5z" fill="#cfe0f3" stroke="#5b84b5" stroke-width="1"/><text x="5.7" y="12.4" font-family="Liberation Sans,sans-serif" font-weight="bold" font-size="8.6" fill="#1d2d44">ab</text><rect x="13.5" y="6" width="4.5" height="9" rx="1" fill="#f4f4f4" stroke="#5b84b5" stroke-width="0.8"/><path d="M16,10 L18,17" stroke="#555" stroke-width="1"/><circle cx="18.7" cy="19" r="3.4" fill="#b42525" stroke="#6d0f0f" stroke-width="0.8"/><circle cx="17.7" cy="18" r="1" fill="#e88"/></svg><svg width="24" height="24" viewBox="0 0 24 24" style="position:absolute;left:722px;top:90px;overflow:visible;"><path d="M1.5,10.5 l4.5,-5.5 h15.5 q1,0 1,1 v9 q0,1 -1,1 h-15.5z" fill="#f5e6e6" stroke="#c92b2b" stroke-width="1"/><text x="5.7" y="13.4" font-family="Liberation Sans,sans-serif" font-weight="bold" font-size="8.6" fill="#c92b2b">abc</text></svg><div style="position:absolute;left:754px;top:91px;width:1px;height:22px;background:#d2d2d2"></div><svg width="24" height="24" viewBox="0 0 24 24" style="position:absolute;left:761px;top:90px;overflow:visible;"><path d="M1.5,8.0 l4.5,-5.0 h11.5 q1,0 1,1 v8 q0,1 -1,1 h-11.5z" fill="#e1e1de" stroke="#cdcdca" stroke-width="1"/><text x="5.7" y="10.4" font-family="Liberation Sans,sans-serif" font-weight="bold" font-size="8.6" fill="#c4c4c0">ab</text><path d="M16,9 L18,16" stroke="#cfcfcf" stroke-width="1"/><circle cx="18.7" cy="18.5" r="3.4" fill="#d6d6d6" stroke="#c7c7c7" stroke-width="0.8"/></svg><svg width="24" height="24" viewBox="0 0 24 24" style="position:absolute;left:792px;top:90px;overflow:visible;"><path d="M1.5,8.0 l4.5,-5.0 h13.5 q1,0 1,1 v8 q0,1 -1,1 h-13.5z" fill="#e1e1de" stroke="#cdcdca" stroke-width="1"/><text x="5.7" y="10.4" font-family="Liberation Sans,sans-serif" font-weight="bold" font-size="8.6" fill="#c4c4c0">abc</text><path d="M7,18 q6,-6 12,0 q-6,6 -12,0z" fill="#ededed" stroke="#c8c8c8" stroke-width="1"/><circle cx="13" cy="18" r="2" fill="#cfcfcf"/></svg><svg width="24" height="24" viewBox="0 0 24 24" style="position:absolute;left:823px;top:90px;overflow:visible;"><path d="M1.5,8.0 l4.5,-5.0 h13.5 q1,0 1,1 v8 q0,1 -1,1 h-13.5z" fill="#e1e1de" stroke="#cdcdca" stroke-width="1"/><text x="5.7" y="10.4" font-family="Liberation Sans,sans-serif" font-weight="bold" font-size="8.6" fill="#c4c4c0">abc</text><rect x="13" y="13" width="10" height="10" rx="1.5" fill="#d8d8d6" stroke="#c9c9c7" stroke-width="0.8"/><path d="M15,18 h4 v-2.5 l3.2,2.5 -3.2,2.5 v-2.5" fill="#f4f4f4" stroke="#f4f4f4" stroke-width="1"/></svg><svg width="24" height="24" viewBox="0 0 24 24" style="position:absolute;left:854px;top:90px;overflow:visible;"><path d="M1.5,8.0 l4.5,-5.0 h13.5 q1,0 1,1 v8 q0,1 -1,1 h-13.5z" fill="#e1e1de" stroke="#cdcdca" stroke-width="1"/><text x="5.7" y="10.4" font-family="Liberation Sans,sans-serif" font-weight="bold" font-size="8.6" fill="#c4c4c0">abc</text><rect x="13" y="13" width="10" height="10" rx="1.5" fill="#d8d8d6" stroke="#c9c9c7" stroke-width="0.8"/><path d="M15.5,18 a2.5,2.5 0 1 1 2.5,2.5" fill="none" stroke="#f4f4f4" stroke-width="1.5"/><path d="M14,17 l1.5,2.2 1.8,-2z" fill="#f4f4f4"/></svg><svg width="24" height="24" viewBox="0 0 24 24" style="position:absolute;left:885px;top:90px;overflow:visible;"><path d="M1.5,8.0 l4.5,-5.0 h13.5 q1,0 1,1 v8 q0,1 -1,1 h-13.5z" fill="#e1e1de" stroke="#cdcdca" stroke-width="1"/><text x="5.7" y="10.4" font-family="Liberation Sans,sans-serif" font-weight="bold" font-size="8.6" fill="#c4c4c0">abc</text><rect x="13" y="13" width="10" height="10" rx="1.5" fill="#d8d8d6" stroke="#c9c9c7" stroke-width="0.8"/><path d="M15.5,20.5 l4,-4" stroke="#f4f4f4" stroke-width="2.4" stroke-linecap="round"/></svg><div style="position:absolute;left:914px;top:86px;width:1px;height:32px;background:#cfcfcf"></div><div style="position:absolute;left:915px;top:86px;width:1px;height:32px;background:#fbfbfb"></div><svg width="6" height="24" style="position:absolute;left:917px;top:91px"><rect x="2" y="0.5" width="1.5" height="1.5" fill="#a9a9a9"/><rect x="3" y="1.5" width="1.2" height="1.2" fill="#fdfdfd"/><rect x="2" y="3.5" width="1.5" height="1.5" fill="#a9a9a9"/><rect x="3" y="4.5" width="1.2" height="1.2" fill="#fdfdfd"/><rect x="2" y="6.5" width="1.5" height="1.5" fill="#a9a9a9"/><rect x="3" y="7.5" width="1.2" height="1.2" fill="#fdfdfd"/><rect x="2" y="9.5" width="1.5" height="1.5" fill="#a9a9a9"/><rect x="3" y="10.5" width="1.2" height="1.2" fill="#fdfdfd"/><rect x="2" y="12.5" width="1.5" height="1.5" fill="#a9a9a9"/><rect x="3" y="13.5" width="1.2" height="1.2" fill="#fdfdfd"/><rect x="2" y="15.5" width="1.5" height="1.5" fill="#a9a9a9"/><rect x="3" y="16.5" width="1.2" height="1.2" fill="#fdfdfd"/><rect x="2" y="18.5" width="1.5" height="1.5" fill="#a9a9a9"/><rect x="3" y="19.5" width="1.2" height="1.2" fill="#fdfdfd"/><rect x="2" y="21.5" width="1.5" height="1.5" fill="#a9a9a9"/><rect x="3" y="22.5" width="1.2" height="1.2" fill="#fdfdfd"/></svg><svg width="24" height="24" viewBox="0 0 24 24" style="position:absolute;left:929px;top:90px;overflow:visible;"><path d="M3,4 v16 q0,3 9,3 q9,0 9,-3 v-16z" fill="#2f9a36" stroke="#176b1d" stroke-width="0.9"/><ellipse cx="12" cy="4" rx="9" ry="3" fill="#5fd061" stroke="#176b1d" stroke-width="0.9"/><path d="M3,9.5 q0,3 9,3 q9,0 9,-3 M3,15 q0,3 9,3 q9,0 9,-3" fill="none" stroke="#1c7a22" stroke-width="0.8"/><path d="M8,7 v14" stroke="#7fe07f" stroke-width="2.5" opacity=".6"/><path d="M11,17 l3,-4 3,2 -3,4z" fill="#e9e9e9" stroke="#555" stroke-width="0.7"/><path d="M15.5,13 l2,-2.5 M17,14.2 l2,-2.5 M12,18.5 l-2,2" stroke="#555" stroke-width="1"/></svg><svg width="24" height="24" viewBox="0 0 24 24" style="position:absolute;left:960px;top:90px;overflow:visible;"><text x="1" y="21" font-family="Liberation Sans,sans-serif" font-weight="bold" font-size="14.5" fill="#3aa53a" stroke="#1b6e1f" stroke-width="0.7">ID</text><path d="M1.5,15.5 h6" stroke="#3aa53a" stroke-width="2.2"/><path d="M11,11 L20,3" stroke="#111" stroke-width="2"/><path d="M21.5,1.5 l-1.5,7 -5.5,-5.5z" fill="#111"/></svg><svg width="24" height="24" viewBox="0 0 24 24" style="position:absolute;left:992px;top:90px;overflow:visible;"><rect x="2.5" y="3" width="19" height="18" fill="#6b8f5a" stroke="#555" stroke-width="0.9"/><rect x="2.5" y="3" width="19" height="4" fill="#4ea64e"/><path d="M2.5,7 h19" stroke="#fff" stroke-width="1"/><path d="M3,21 l4,-8 3,4 3,-6 4,5 4,-3 v8z" fill="#8a7a5f"/><path d="M6,9 l3,3 M14,9 l3,4" stroke="#3f5f35" stroke-width="1.5"/><rect x="3" y="8.5" width="3" height="3" fill="#d9d9d9"/></svg><svg width="24" height="24" viewBox="0 0 24 24" style="position:absolute;left:1023px;top:90px;overflow:visible;"><path d="M3,5 v14 q0,3 9,3 q9,0 9,-3 v-14z" fill="#6f98cb" stroke="#355f94" stroke-width="0.9"/><ellipse cx="12" cy="5" rx="9" ry="3.2" fill="#a8c4e6" stroke="#355f94" stroke-width="0.9"/><path d="M3,9.8 q0,3.2 9,3.2 q9,0 9,-3.2 M3,14.6 q0,3.2 9,3.2 q9,0 9,-3.2" fill="none" stroke="#355f94" stroke-width="0.9"/></svg><div style="position:absolute;left:1052px;top:86px;width:1px;height:32px;background:#cfcfcf"></div><div style="position:absolute;left:1053px;top:86px;width:1px;height:32px;background:#fbfbfb"></div><svg width="6" height="24" style="position:absolute;left:1055px;top:91px"><rect x="2" y="0.5" width="1.5" height="1.5" fill="#a9a9a9"/><rect x="3" y="1.5" width="1.2" height="1.2" fill="#fdfdfd"/><rect x="2" y="3.5" width="1.5" height="1.5" fill="#a9a9a9"/><rect x="3" y="4.5" width="1.2" height="1.2" fill="#fdfdfd"/><rect x="2" y="6.5" width="1.5" height="1.5" fill="#a9a9a9"/><rect x="3" y="7.5" width="1.2" height="1.2" fill="#fdfdfd"/><rect x="2" y="9.5" width="1.5" height="1.5" fill="#a9a9a9"/><rect x="3" y="10.5" width="1.2" height="1.2" fill="#fdfdfd"/><rect x="2" y="12.5" width="1.5" height="1.5" fill="#a9a9a9"/><rect x="3" y="13.5" width="1.2" height="1.2" fill="#fdfdfd"/><rect x="2" y="15.5" width="1.5" height="1.5" fill="#a9a9a9"/><rect x="3" y="16.5" width="1.2" height="1.2" fill="#fdfdfd"/><rect x="2" y="18.5" width="1.5" height="1.5" fill="#a9a9a9"/><rect x="3" y="19.5" width="1.2" height="1.2" fill="#fdfdfd"/><rect x="2" y="21.5" width="1.5" height="1.5" fill="#a9a9a9"/><rect x="3" y="22.5" width="1.2" height="1.2" fill="#fdfdfd"/></svg><svg width="24" height="24" viewBox="0 0 24 24" style="position:absolute;left:1068px;top:90px;overflow:visible;"><circle cx="11" cy="11" r="9.5" fill="#7da7d6" stroke="#4a5a6a" stroke-width="0.9"/><ellipse cx="11" cy="11" rx="4.2" ry="9.5" fill="none" stroke="#e8eef5" stroke-width="0.9"/><path d="M1.5,11 h19 M3,6 h16 M3,16 h16 M11,1.5 v19" stroke="#e8eef5" stroke-width="0.9" fill="none"/><path d="M6,4.5 q3,-1.5 4,1 q-0.5,2.5 -3,3 q-2,0.5 -2.5,-2z M12,9 q4,-1 5,2 q0,3 -3,4.5 q-2,-1 -2,-3.5z" fill="#3d6aa0" opacity=".85"/><rect x="13" y="14" width="9.5" height="8.5" rx="1" fill="#4a7a4a" stroke="#2c4c2c" stroke-width="0.7"/><path d="M14.5,17 h6.5 l-3.2,4z" fill="#111"/></svg><svg width="24" height="24" viewBox="0 0 24 24" style="position:absolute;left:1099px;top:90px;overflow:visible;"><circle cx="11" cy="11" r="9.5" fill="#7da7d6" stroke="#4a5a6a" stroke-width="0.9"/><ellipse cx="11" cy="11" rx="4.2" ry="9.5" fill="none" stroke="#e8eef5" stroke-width="0.9"/><path d="M1.5,11 h19 M3,6 h16 M3,16 h16 M11,1.5 v19" stroke="#e8eef5" stroke-width="0.9" fill="none"/><path d="M6,4.5 q3,-1.5 4,1 q-0.5,2.5 -3,3 q-2,0.5 -2.5,-2z M12,9 q4,-1 5,2 q0,3 -3,4.5 q-2,-1 -2,-3.5z" fill="#3d6aa0" opacity=".85"/><rect x="13" y="14" width="9.5" height="8.5" rx="1" fill="#5a9a5a" stroke="#2c5c2c" stroke-width="0.7"/><circle cx="17" cy="17.6" r="2" fill="none" stroke="#fff" stroke-width="1.1"/><path d="M18.5,19 l2.2,2.2" stroke="#fff" stroke-width="1.2"/></svg><svg width="24" height="24" viewBox="0 0 24 24" style="position:absolute;left:1130px;top:90px;overflow:visible;"><circle cx="11" cy="11" r="9.5" fill="#9ab6d6" stroke="#4a5a6a" stroke-width="0.9"/><ellipse cx="11" cy="11" rx="4.2" ry="9.5" fill="none" stroke="#e8eef5" stroke-width="0.9"/><path d="M1.5,11 h19 M3,6 h16 M3,16 h16 M11,1.5 v19" stroke="#e8eef5" stroke-width="0.9" fill="none"/><path d="M6,4.5 q3,-1.5 4,1 q-0.5,2.5 -3,3 q-2,0.5 -2.5,-2z M12,9 q4,-1 5,2 q0,3 -3,4.5 q-2,-1 -2,-3.5z" fill="#4d6f9c" opacity=".85"/><path d="M4,14.5 q-2.5,3 -1.5,6 h7 l1,-3 h3 l1,3 h7 q1,-3 -1.5,-6 l-1.5,-2.5 h-3.5 l-1,2.5 h-4 l-1,-2.5 h-3.5z" fill="#111"/><circle cx="6" cy="19.3" r="2.6" fill="#2a2a2a" stroke="#666" stroke-width="0.6"/><circle cx="18" cy="19.3" r="2.6" fill="#2a2a2a" stroke="#666" stroke-width="0.6"/></svg><div style="position:absolute;left:1159px;top:86px;width:1px;height:32px;background:#cfcfcf"></div><div style="position:absolute;left:1160px;top:86px;width:1px;height:32px;background:#fbfbfb"></div><svg width="6" height="24" style="position:absolute;left:1162px;top:91px"><rect x="2" y="0.5" width="1.5" height="1.5" fill="#a9a9a9"/><rect x="3" y="1.5" width="1.2" height="1.2" fill="#fdfdfd"/><rect x="2" y="3.5" width="1.5" height="1.5" fill="#a9a9a9"/><rect x="3" y="4.5" width="1.2" height="1.2" fill="#fdfdfd"/><rect x="2" y="6.5" width="1.5" height="1.5" fill="#a9a9a9"/><rect x="3" y="7.5" width="1.2" height="1.2" fill="#fdfdfd"/><rect x="2" y="9.5" width="1.5" height="1.5" fill="#a9a9a9"/><rect x="3" y="10.5" width="1.2" height="1.2" fill="#fdfdfd"/><rect x="2" y="12.5" width="1.5" height="1.5" fill="#a9a9a9"/><rect x="3" y="13.5" width="1.2" height="1.2" fill="#fdfdfd"/><rect x="2" y="15.5" width="1.5" height="1.5" fill="#a9a9a9"/><rect x="3" y="16.5" width="1.2" height="1.2" fill="#fdfdfd"/><rect x="2" y="18.5" width="1.5" height="1.5" fill="#a9a9a9"/><rect x="3" y="19.5" width="1.2" height="1.2" fill="#fdfdfd"/><rect x="2" y="21.5" width="1.5" height="1.5" fill="#a9a9a9"/><rect x="3" y="22.5" width="1.2" height="1.2" fill="#fdfdfd"/></svg><svg width="24" height="24" viewBox="0 0 24 24" style="position:absolute;left:1175px;top:90px;overflow:visible;"><path d="M11.5,1.5 c-4,0 -4.5,1.8 -4.5,3.2 v2.3 h5 v1 h-7.2 c-2,0 -3.3,1.6 -3.3,4.5 c0,3 1.3,4.5 3.3,4.5 h1.7 v-2.5 c0,-1.8 1.5,-3 3,-3 h4.500 c1.500,0 2.500,-1.200 2.500,-2.500 v-4.300 c0,-1.700 -1.500,-3.200 -5,-3.200z" fill="#3d7ab5"/><circle cx="9" cy="4" r="0.9" fill="#fff"/><path d="M12,22 c4,0 4.500,-1.800 4.500,-3.200 v-2.300 h-5 v-1 h7.200 c2,0 3.300,-1.600 3.300,-4.500 c0,-3 -1.300,-4.500 -3.300,-4.500 h-1.700 v2.500 c0,1.800 -1.500,3 -3,3 h-4.500 c-1.500,0 -2.500,1.200 -2.500,2.500 v4.300 c0,1.700 1.500,3.200 5,3.200z" fill="#f2cf45"/><circle cx="14.500" cy="19.500" r="0.900" fill="#fff"/><path d="M17.500,18.500 l5,2.300 -5,2.300" fill="none" stroke="#333" stroke-width="1"/></svg><svg width="24" height="24" viewBox="0 0 24 24" style="position:absolute;left:1206px;top:90px;overflow:visible;"><text x="0.5" y="11.5" font-family="Liberation Sans,sans-serif" font-weight="bold" font-size="9.3" fill="#444">KML</text><rect x="15" y="15" width="9" height="9" rx="1.6" fill="#69a669" stroke="#4d864d" stroke-width="1"/><path d="M19.5,16.7 v5.6 M16.7,19.5 h5.6" stroke="#f2fff2" stroke-width="2"/></svg><svg width="24" height="24" viewBox="0 0 24 24" style="position:absolute;left:1237px;top:90px;overflow:visible;"><text x="0" y="10.5" font-family="Liberation Sans,sans-serif" font-weight="bold" font-size="8.2" fill="#222">HTML</text><rect x="12.5" y="13" width="10" height="10" rx="1.5" fill="#d4a92c" stroke="#a67f12" stroke-width="0.8"/><circle cx="17.5" cy="18" r="2" fill="none" stroke="#fff" stroke-width="1.3"/><path d="M17.5,14.3 v1.5 M17.5,20.2 v1.500 M13.800,18 h1.500 M19.700,18 h1.500 M15,15.500 l1,1 M20,15.500 l-1,1 M15,20.500 l1,-1 M20,20.500 l-1,-1" stroke="#fff" stroke-width="1.100"/></svg><svg width="24" height="24" viewBox="0 0 24 24" style="position:absolute;left:1268px;top:90px;overflow:visible;"><path d="M2,5 q9,-5 18,0 q3,6 0,11 q-9,5 -18,0 q-3,-5 0,-11z" fill="#7c9cc8" stroke="#2c4a78" stroke-width="1"/><path d="M6,4 h5 v5 h-5z M11,9 h5 v5 h-5z M3,9.500 h3 v5 h-3z M16,4.500 h4 v4.500 h-4z M6,14 h5 v4 h-5z" fill="#2c4a78"/><rect x="15" y="15" width="9" height="9" rx="1.6" fill="#69a669" stroke="#4d864d" stroke-width="1"/><path d="M19.5,16.7 v5.6 M16.7,19.5 h5.6" stroke="#f2fff2" stroke-width="2"/></svg><svg width="24" height="24" viewBox="0 0 24 24" style="position:absolute;left:1299px;top:90px;overflow:visible;"><rect x="1.5" y="1.5" width="4.3" height="4.3" rx="0.7" fill="#e08a8a" stroke="#999" stroke-width="0.4"/><rect x="7.0" y="1.5" width="4.3" height="4.3" rx="0.7" fill="#9ad08a" stroke="#999" stroke-width="0.4"/><rect x="12.5" y="1.5" width="4.3" height="4.3" rx="0.7" fill="#c79ae0" stroke="#999" stroke-width="0.4"/><rect x="18.0" y="1.5" width="4.3" height="4.3" rx="0.7" fill="#e0a070" stroke="#999" stroke-width="0.4"/><rect x="1.5" y="7.0" width="4.3" height="4.3" rx="0.7" fill="#e0c070" stroke="#999" stroke-width="0.4"/><rect x="7.0" y="7.0" width="4.3" height="4.3" rx="0.7" fill="#e0a070" stroke="#999" stroke-width="0.4"/><rect x="12.5" y="7.0" width="4.3" height="4.3" rx="0.7" fill="#e08a8a" stroke="#999" stroke-width="0.4"/><rect x="18.0" y="7.0" width="4.3" height="4.3" rx="0.7" fill="#e0c070" stroke="#999" stroke-width="0.4"/><rect x="1.5" y="12.5" width="4.3" height="4.3" rx="0.7" fill="#e0a070" stroke="#999" stroke-width="0.4"/><rect x="7.0" y="12.5" width="4.3" height="4.3" rx="0.7" fill="#8ab0e0" stroke="#999" stroke-width="0.4"/><rect x="12.5" y="12.5" width="4.3" height="4.3" rx="0.7" fill="#8ad0d0" stroke="#999" stroke-width="0.4"/><rect x="18.0" y="12.5" width="4.3" height="4.3" rx="0.7" fill="#e08a8a" stroke="#999" stroke-width="0.4"/><rect x="1.5" y="18.0" width="4.3" height="4.3" rx="0.7" fill="#e08a8a" stroke="#999" stroke-width="0.4"/><rect x="7.0" y="18.0" width="4.3" height="4.3" rx="0.7" fill="#8ad0d0" stroke="#999" stroke-width="0.4"/><rect x="12.5" y="18.0" width="4.3" height="4.3" rx="0.7" fill="#8ab0e0" stroke="#999" stroke-width="0.4"/><rect x="18.0" y="18.0" width="4.3" height="4.3" rx="0.7" fill="#e0a070" stroke="#999" stroke-width="0.4"/></svg><svg width="24" height="24" viewBox="0 0 24 24" style="position:absolute;left:1330px;top:90px;overflow:visible;"><rect x="2" y="2" width="18" height="18" fill="#fff" stroke="#6d94c6" stroke-width="1"/><path d="M8,2 v18 M14,2 v18 M2,8 h18 M2,14 h18" stroke="#6d94c6" stroke-width="1"/><rect x="15" y="15" width="9" height="9" rx="1.6" fill="#e0d247" stroke="#a99b2a" stroke-width="1"/><path d="M19.5,16.2 v6.6 M16.2,19.5 h6.6 M17.1,17.1 l4.8,4.8 M21.9,17.1 l-4.8,4.8" stroke="#fffcd2" stroke-width="1" stroke-linecap="round"/></svg><div style="position:absolute;left:1359px;top:86px;width:1px;height:32px;background:#cfcfcf"></div><div style="position:absolute;left:1360px;top:86px;width:1px;height:32px;background:#fbfbfb"></div><svg width="6" height="24" style="position:absolute;left:1362px;top:91px"><rect x="2" y="0.5" width="1.5" height="1.5" fill="#a9a9a9"/><rect x="3" y="1.5" width="1.2" height="1.2" fill="#fdfdfd"/><rect x="2" y="3.5" width="1.5" height="1.5" fill="#a9a9a9"/><rect x="3" y="4.5" width="1.2" height="1.2" fill="#fdfdfd"/><rect x="2" y="6.5" width="1.5" height="1.5" fill="#a9a9a9"/><rect x="3" y="7.5" width="1.2" height="1.2" fill="#fdfdfd"/><rect x="2" y="9.5" width="1.5" height="1.5" fill="#a9a9a9"/><rect x="3" y="10.5" width="1.2" height="1.2" fill="#fdfdfd"/><rect x="2" y="12.5" width="1.5" height="1.5" fill="#a9a9a9"/><rect x="3" y="13.5" width="1.2" height="1.2" fill="#fdfdfd"/><rect x="2" y="15.5" width="1.5" height="1.5" fill="#a9a9a9"/><rect x="3" y="16.5" width="1.2" height="1.2" fill="#fdfdfd"/><rect x="2" y="18.5" width="1.5" height="1.5" fill="#a9a9a9"/><rect x="3" y="19.5" width="1.2" height="1.2" fill="#fdfdfd"/><rect x="2" y="21.5" width="1.5" height="1.5" fill="#a9a9a9"/><rect x="3" y="22.5" width="1.2" height="1.2" fill="#fdfdfd"/></svg><svg width="24" height="24" viewBox="0 0 24 24" style="position:absolute;left:1375px;top:90px;overflow:visible;"><rect x="4" y="2" width="17" height="20" rx="1" fill="#5b87bd" stroke="#2c4a78" stroke-width="1"/><rect x="4" y="2" width="4" height="20" fill="#26364f"/><text x="14.500" y="17" text-anchor="middle" font-family="Liberation Sans,sans-serif" font-size="13" fill="#fff">?</text></svg><div style="position:absolute;left:1404px;top:86px;width:1px;height:32px;background:#cfcfcf"></div><div style="position:absolute;left:1405px;top:86px;width:1px;height:32px;background:#fbfbfb"></div><svg width="6" height="24" style="position:absolute;left:1407px;top:91px"><rect x="2" y="0.5" width="1.5" height="1.5" fill="#a9a9a9"/><rect x="3" y="1.5" width="1.2" height="1.2" fill="#fdfdfd"/><rect x="2" y="3.5" width="1.5" height="1.5" fill="#a9a9a9"/><rect x="3" y="4.5" width="1.2" height="1.2" fill="#fdfdfd"/><rect x="2" y="6.5" width="1.5" height="1.5" fill="#a9a9a9"/><rect x="3" y="7.5" width="1.2" height="1.2" fill="#fdfdfd"/><rect x="2" y="9.5" width="1.5" height="1.5" fill="#a9a9a9"/><rect x="3" y="10.5" width="1.2" height="1.2" fill="#fdfdfd"/><rect x="2" y="12.5" width="1.5" height="1.5" fill="#a9a9a9"/><rect x="3" y="13.5" width="1.2" height="1.2" fill="#fdfdfd"/><rect x="2" y="15.5" width="1.5" height="1.5" fill="#a9a9a9"/><rect x="3" y="16.5" width="1.2" height="1.2" fill="#fdfdfd"/><rect x="2" y="18.5" width="1.5" height="1.5" fill="#a9a9a9"/><rect x="3" y="19.5" width="1.2" height="1.2" fill="#fdfdfd"/><rect x="2" y="21.5" width="1.5" height="1.5" fill="#a9a9a9"/><rect x="3" y="22.5" width="1.2" height="1.2" fill="#fdfdfd"/></svg><div style="position:absolute;left:1417px;top:88px;width:31px;height:28px;box-sizing:border-box;border:1px solid #6e6e6e;border-radius:4px;background:linear-gradient(180deg,#d4d4d4,#e6e6e6);box-shadow:inset 0 1px 2px rgba(0,0,0,.25)"></div><svg width="24" height="24" viewBox="0 0 24 24" style="position:absolute;left:1420px;top:90px;overflow:visible;"><path d="M12,1 v8 M12,15 v8 M1,12 h8 M15,12 h8" stroke="#555" stroke-width="1"/><circle cx="12" cy="12" r="4" fill="none" stroke="#c33" stroke-width="1.200" stroke-dasharray="2.200 1.400"/></svg><svg width="6" height="24" style="position:absolute;left:2px;top:125px"><rect x="2" y="0.5" width="1.5" height="1.5" fill="#a9a9a9"/><rect x="3" y="1.5" width="1.2" height="1.2" fill="#fdfdfd"/><rect x="2" y="3.5" width="1.5" height="1.5" fill="#a9a9a9"/><rect x="3" y="4.5" width="1.2" height="1.2" fill="#fdfdfd"/><rect x="2" y="6.5" width="1.5" height="1.5" fill="#a9a9a9"/><rect x="3" y="7.5" width="1.2" height="1.2" fill="#fdfdfd"/><rect x="2" y="9.5" width="1.5" height="1.5" fill="#a9a9a9"/><rect x="3" y="10.5" width="1.2" height="1.2" fill="#fdfdfd"/><rect x="2" y="12.5" width="1.5" height="1.5" fill="#a9a9a9"/><rect x="3" y="13.5" width="1.2" height="1.2" fill="#fdfdfd"/><rect x="2" y="15.5" width="1.5" height="1.5" fill="#a9a9a9"/><rect x="3" y="16.5" width="1.2" height="1.2" fill="#fdfdfd"/><rect x="2" y="18.5" width="1.5" height="1.5" fill="#a9a9a9"/><rect x="3" y="19.5" width="1.2" height="1.2" fill="#fdfdfd"/><rect x="2" y="21.5" width="1.5" height="1.5" fill="#a9a9a9"/><rect x="3" y="22.5" width="1.2" height="1.2" fill="#fdfdfd"/></svg><svg width="24" height="24" viewBox="0 0 24 24" style="position:absolute;left:15px;top:124px;overflow:visible;"><path d="M2.5,21.500 V3.500 L21,21.500z" fill="#e3e1dd" stroke="#c9c9c9" stroke-width="1"/><path d="M6.500,18 V11.500 L13,18z" fill="#f0f0f0" stroke="#c9c9c9" stroke-width="0.8"/><path d="M16,21.500 v-2 M12,21.500 v-2 M8,21.500 v-2" stroke="#c9c9c9" stroke-width="0.8"/></svg><svg width="24" height="24" viewBox="0 0 24 24" style="position:absolute;left:52px;top:124px;overflow:visible;"><path d="M3,6 C3,2.5 8,2 11,3.5 C14,5 17,3 19.5,4 C22.5,5.5 22,10 20,12.5 C18,14.5 15,13.5 12,12.5 C9,11.5 6,13 4.5,11 C3.2,9.5 3,8 3,6z" fill="#dcdcdc" stroke="#c9c9c9" stroke-width="1"/><rect x="13" y="13" width="10" height="10" rx="1.500" fill="#d8d8d6" stroke="#c9c9c7" stroke-width="0.8"/><path d="M15,18 h4 v-2.500 l3.200,2.500 -3.200,2.500 v-2.500" fill="#f4f4f4" stroke="#f4f4f4" stroke-width="1"/></svg><svg width="24" height="24" viewBox="0 0 24 24" style="position:absolute;left:93px;top:124px;overflow:visible;"><path d="M3,6 C3,2.5 8,2 11,3.5 C14,5 17,3 19.5,4 C22.5,5.5 22,10 20,12.5 C18,14.5 15,13.5 12,12.5 C9,11.5 6,13 4.5,11 C3.2,9.5 3,8 3,6z" fill="#dcdcdc" stroke="#c9c9c9" stroke-width="1"/><rect x="13" y="13" width="10" height="10" rx="1.500" fill="#d8d8d6" stroke="#c9c9c7" stroke-width="0.8"/><path d="M15.500,18 a2.500,2.500 0 1 1 2.500,2.500" fill="none" stroke="#f4f4f4" stroke-width="1.500"/><path d="M14,17 l1.500,2.200 1.800,-2z" fill="#f4f4f4"/></svg><svg width="24" height="24" viewBox="0 0 24 24" style="position:absolute;left:123px;top:124px;overflow:visible;"><path d="M3,6 C3,2.5 8,2 11,3.5 C14,5 17,3 19.5,4 C22.5,5.5 22,10 20,12.5 C18,14.5 15,13.5 12,12.5 C9,11.5 6,13 4.5,11 C3.2,9.5 3,8 3,6z" fill="#dcdcdc" stroke="#c9c9c9" stroke-width="1"/><path d="M10,11 l5,-2.500 5,2.500 1,6 -4,4.500 h-5 l-3.500,-4.500z" fill="#e2e2e2" stroke="#c9c9c9" stroke-width="1"/><circle cx="14.500" cy="15.500" r="1.200" fill="#c9c9c9"/></svg><svg width="24" height="24" viewBox="0 0 24 24" style="position:absolute;left:154px;top:124px;overflow:visible;"><path d="M3,6 C3,2.5 8,2 11,3.5 C14,5 17,3 19.5,4 C22.5,5.5 22,10 20,12.5 C18,14.5 15,13.5 12,12.5 C9,11.5 6,13 4.5,11 C3.2,9.5 3,8 3,6z" fill="#dcdcdc" stroke="#c9c9c9" stroke-width="1"/><ellipse cx="9" cy="8" rx="3.500" ry="2.300" fill="#e6e6e6" stroke="#c9c9c9" stroke-width="0.9"/><rect x="15" y="15" width="9" height="9" rx="1.6" fill="#d9d9d6" stroke="#c6c6c3" stroke-width="1"/><path d="M19.5,16.2 v6.6 M16.2,19.5 h6.6 M17.1,17.1 l4.8,4.8 M21.9,17.1 l-4.8,4.8" stroke="#f6f6f4" stroke-width="1" stroke-linecap="round"/></svg><svg width="24" height="24" viewBox="0 0 24 24" style="position:absolute;left:185px;top:124px;overflow:visible;"><path d="M3,6 C3,2.5 8,2 11,3.5 C14,5 17,3 19.5,4 C22.5,5.5 22,10 20,12.5 C18,14.5 15,13.5 12,12.5 C9,11.5 6,13 4.5,11 C3.2,9.5 3,8 3,6z" fill="#dcdcdc" stroke="#c9c9c9" stroke-width="1"/><path d="M3,19 q2,-5 7,-4 q2,3 -1,6 q-4,2 -6,-2z" fill="#dcdcdc" stroke="#c9c9c9" stroke-width="1"/><rect x="15" y="15" width="9" height="9" rx="1.6" fill="#d9d9d6" stroke="#c6c6c3" stroke-width="1"/><path d="M19.5,16.2 v6.6 M16.2,19.5 h6.6 M17.1,17.1 l4.8,4.8 M21.9,17.1 l-4.8,4.8" stroke="#f6f6f4" stroke-width="1" stroke-linecap="round"/></svg><svg width="24" height="24" viewBox="0 0 24 24" style="position:absolute;left:217px;top:124px;overflow:visible;"><path d="M3,6 C3,2.5 8,2 11,3.5 C14,5 17,3 19.5,4 C22.5,5.5 22,10 20,12.5 C18,14.5 15,13.5 12,12.5 C9,11.5 6,13 4.5,11 C3.2,9.5 3,8 3,6z" fill="#dcdcdc" stroke="#c9c9c9" stroke-width="1"/><ellipse cx="9" cy="8" rx="4" ry="2.500" fill="#d0d0d0" stroke="#c9c9c9" stroke-width="0.9"/><rect x="15" y="15" width="9" height="9" rx="1.6" fill="#d9d9d6" stroke="#c6c6c3" stroke-width="1"/><path d="M19.5,16.2 v6.6 M16.2,19.5 h6.6 M17.1,17.1 l4.8,4.8 M21.9,17.1 l-4.8,4.8" stroke="#f6f6f4" stroke-width="1" stroke-linecap="round"/></svg><svg width="24" height="24" viewBox="0 0 24 24" style="position:absolute;left:248px;top:124px;overflow:visible;"><path d="M3,6 C3,2.5 8,2 11,3.5 C14,5 17,3 19.5,4 C22.5,5.5 22,10 20,12.5 C18,14.5 15,13.5 12,12.5 C9,11.5 6,13 4.5,11 C3.2,9.5 3,8 3,6z" fill="#dcdcdc" stroke="#c9c9c9" stroke-width="1"/><ellipse cx="9" cy="8" rx="3.500" ry="2.300" fill="#f2f2f2" stroke="#c9c9c9" stroke-width="0.9"/><rect x="15" y="15" width="9" height="9" rx="1.6" fill="#d9d9d6" stroke="#c6c6c3" stroke-width="1"/><path d="M17.3,17.3 l4.4,4.4 M21.7,17.3 l-4.4,4.4" stroke="#f6f6f4" stroke-width="1.8" stroke-linecap="round"/></svg><svg width="24" height="24" viewBox="0 0 24 24" style="position:absolute;left:279px;top:124px;overflow:visible;"><path d="M3,6 C3,2.5 8,2 11,3.5 C14,5 17,3 19.5,4 C22.5,5.5 22,10 20,12.5 C18,14.5 15,13.5 12,12.5 C9,11.5 6,13 4.5,11 C3.2,9.5 3,8 3,6z" fill="#dcdcdc" stroke="#c9c9c9" stroke-width="1"/><path d="M3,19 q2,-5 7,-4 q2,3 -1,6 q-4,2 -6,-2z" fill="#dcdcdc" stroke="#c9c9c9" stroke-width="1"/><rect x="15" y="15" width="9" height="9" rx="1.6" fill="#d9d9d6" stroke="#c6c6c3" stroke-width="1"/><path d="M17.3,17.3 l4.4,4.4 M21.7,17.3 l-4.4,4.4" stroke="#f6f6f4" stroke-width="1.8" stroke-linecap="round"/></svg><svg width="24" height="24" viewBox="0 0 24 24" style="position:absolute;left:309px;top:124px;overflow:visible;"><path d="M4,5 C4,2 9,2 12,3.500 C16,5 20,3 21,7 C22,11 18,13 15,13 C12,13 12,16 11,19 C10,22 6,22 5,18 C4,14 4,9 4,5z" fill="#dcdcdc" stroke="#c9c9c9" stroke-width="1"/></svg><svg width="24" height="24" viewBox="0 0 24 24" style="position:absolute;left:340px;top:124px;overflow:visible;"><path d="M3,14 C5,9 10,10 13,6 C16,2 21,3 22,7 C23,11 19,13 16,16 C13,19 9,23 5,21 C2,19 2,16 3,14z" fill="#dcdcdc" stroke="#c9c9c9" stroke-width="1"/><path d="M6,15 C8,12 11,12 14,8.500 C16,6 19,6 19.500,8 C20,10 17,11.500 14.500,14 C12,16.500 9,19.500 7,18.500 C5.500,17.800 5.500,16 6,15z" fill="none" stroke="#c9c9c9" stroke-width="0.8"/></svg><svg width="24" height="24" viewBox="0 0 24 24" style="position:absolute;left:371px;top:124px;overflow:visible;"><path d="M3,3 L9,15 L15,5 L21,5" fill="none" stroke="#c9c9c9" stroke-width="1.100"/><rect x="1.500" y="1.500" width="3" height="3" fill="#f2f2f2" stroke="#c9c9c9" stroke-width="0.9"/><rect x="13.500" y="3.500" width="3" height="3" fill="#f2f2f2" stroke="#c9c9c9" stroke-width="0.9"/><rect x="19.500" y="3.500" width="3" height="3" fill="#f2f2f2" stroke="#c9c9c9" stroke-width="0.9"/><rect x="7.500" y="13.500" width="3" height="3" fill="#f2f2f2" stroke="#c9c9c9" stroke-width="0.9"/><rect x="13" y="13" width="10" height="10" rx="1.500" fill="#d8d8d6" stroke="#c9c9c7" stroke-width="0.8"/><path d="M15.500,18 a2.500,2.500 0 1 1 2.500,2.500" fill="none" stroke="#f4f4f4" stroke-width="1.500"/></svg><svg width="24" height="24" viewBox="0 0 24 24" style="position:absolute;left:402px;top:124px;overflow:visible;"><path d="M9,1 v14 M3,11 h14 M15,7 v14" stroke="#c9c9c9" stroke-width="1.100"/><rect x="12" y="2" width="5" height="5" fill="#f0f0f0" stroke="#c9c9c9" stroke-width="0.9"/><rect x="7.500" y="9.500" width="3" height="3" fill="#f0f0f0" stroke="#c9c9c9" stroke-width="0.9"/><rect x="13.500" y="9.500" width="3" height="3" fill="#f0f0f0" stroke="#c9c9c9" stroke-width="0.9"/><rect x="2" y="16" width="5" height="5" fill="#f0f0f0" stroke="#c9c9c9" stroke-width="0.9"/></svg><svg width="24" height="24" viewBox="0 0 24 24" style="position:absolute;left:433px;top:124px;overflow:visible;"><path d="M3,7 C3,2 9,2 12,4 C15,2 21,2 21,7 C21,12 15,13 12,11 C9,13 3,12 3,7z" fill="#dcdcdc" stroke="#c9c9c9" stroke-width="1"/><path d="M10,9 L7,20 M14,9 L17,20" stroke="#c9c9c9" stroke-width="1.300"/><circle cx="6.500" cy="21" r="2" fill="none" stroke="#c9c9c9" stroke-width="1.200"/><circle cx="17.500" cy="21" r="2" fill="none" stroke="#c9c9c9" stroke-width="1.200"/></svg><svg width="24" height="24" viewBox="0 0 24 24" style="position:absolute;left:464px;top:124px;overflow:visible;"><path d="M3,7 C3,2 9,2 11,4 V11 C9,13 3,12 3,7z M21,7 C21,2 15,2 13,4 V11 C15,13 21,12 21,7z" fill="#dcdcdc" stroke="#c9c9c9" stroke-width="1"/><path d="M10,9 L7,20 M14,9 L17,20" stroke="#c9c9c9" stroke-width="1.300"/><circle cx="6.500" cy="21" r="2" fill="none" stroke="#c9c9c9" stroke-width="1.200"/><circle cx="17.500" cy="21" r="2" fill="none" stroke="#c9c9c9" stroke-width="1.200"/></svg><svg width="24" height="24" viewBox="0 0 24 24" style="position:absolute;left:495px;top:124px;overflow:visible;"><path d="M3,7 C3,3 8,3 10,5 H14 C16,3 21,3 21,7 C21,11 16,12 14,10 H10 C8,12 3,11 3,7z" fill="#dcdcdc" stroke="#c9c9c9" stroke-width="1"/><path d="M8,11 q3,4 6,9" stroke="#c9c9c9" stroke-width="1" fill="none"/></svg><svg width="24" height="24" viewBox="0 0 24 24" style="position:absolute;left:526px;top:124px;overflow:visible;"><path d="M2,5 h8 M2,9 h8 M2,13 h8 M2,17 h8 M2,21 h8 M14,5 h8 M14,9 h8 M14,13 h8 M14,17 h8 M14,21 h8 M10,7 h4 M10,15 h4" stroke="#c9c9c9" stroke-width="1.100"/></svg><svg width="24" height="24" viewBox="0 0 24 24" style="position:absolute;left:557px;top:124px;overflow:visible;"><path d="M8,21 l4,-16 8,5 -8,4" fill="#f0f0f0" stroke="#c9c9c9" stroke-width="1"/><path d="M5,20 a9,9 0 0 1 1,-11" fill="none" stroke="#c9c9c9" stroke-width="1.200"/><path d="M4,9 l3.500,-1 0,3.500z" fill="#c9c9c9"/><path d="M8,21 h12" stroke="#c9c9c9" stroke-width="0.8"/></svg><svg width="9" height="6" style="position:absolute;left:76.5px;top:133.5px"><path d="M0,0 h9 l-4.5,5.5z" fill="#8a8a8a"/></svg><svg width="9" height="6" style="position:absolute;left:587.5px;top:133.5px"><path d="M0,0 h9 l-4.5,5.5z" fill="#8a8a8a"/></svg><svg width="6" height="24" style="position:absolute;left:2px;top:159px"><rect x="2" y="0.5" width="1.5" height="1.5" fill="#a9a9a9"/><rect x="3" y="1.5" width="1.2" height="1.2" fill="#fdfdfd"/><rect x="2" y="3.5" width="1.5" height="1.5" fill="#a9a9a9"/><rect x="3" y="4.5" width="1.2" height="1.2" fill="#fdfdfd"/><rect x="2" y="6.5" width="1.5" height="1.5" fill="#a9a9a9"/><rect x="3" y="7.5" width="1.2" height="1.2" fill="#fdfdfd"/><rect x="2" y="9.5" width="1.5" height="1.5" fill="#a9a9a9"/><rect x="3" y="10.5" width="1.2" height="1.2" fill="#fdfdfd"/><rect x="2" y="12.5" width="1.5" height="1.5" fill="#a9a9a9"/><rect x="3" y="13.5" width="1.2" height="1.2" fill="#fdfdfd"/><rect x="2" y="15.5" width="1.5" height="1.5" fill="#a9a9a9"/><rect x="3" y="16.5" width="1.2" height="1.2" fill="#fdfdfd"/><rect x="2" y="18.5" width="1.5" height="1.5" fill="#a9a9a9"/><rect x="3" y="19.5" width="1.2" height="1.2" fill="#fdfdfd"/><rect x="2" y="21.5" width="1.5" height="1.5" fill="#a9a9a9"/><rect x="3" y="22.5" width="1.2" height="1.2" fill="#fdfdfd"/></svg><svg width="24" height="24" viewBox="0 0 24 24" style="position:absolute;left:14px;top:158px;overflow:visible;"><rect x="2" y="2" width="20" height="20" fill="#cfe3c1" opacity=".9"/><path d="M2,8 q5,-4 10,1 q4,3 10,-2 M5,22 q2,-8 9,-9 q5,-1 8,3" stroke="#9cc98c" stroke-width="2" fill="none"/><path d="M2,14 l20,-5" stroke="#e6d9a8" stroke-width="1.500"/><path d="M13,20 l8,-7" stroke="#5a7f3c" stroke-width="1.500"/><rect x="14" y="15" width="7" height="6" fill="none" stroke="#5a7f3c" stroke-width="1"/></svg><svg width="24" height="24" viewBox="0 0 24 24" style="position:absolute;left:45px;top:158px;overflow:visible;"><rect x="3" y="4" width="17" height="17" fill="#e8e2c6"/><path d="M3,4 h7 v7 h-7z" fill="#8cc06a"/><path d="M12,12 h8 v9 h-8z" fill="#9fc4e6"/><path d="M3,14 h8 v7 h-8z" fill="#e9c46a"/><path d="M4,7 l4,-3 2,5z" fill="#4f9a4f"/><path d="M20,2 l2.500,2 -9,12 -3.500,1.500 1,-3.500z" fill="#a5522b" stroke="#6b2f12" stroke-width="0.7"/><path d="M6,18 q4,-3 7,0" stroke="#d6604d" stroke-width="1.500" fill="none"/></svg><div style="position:absolute;left:75px;top:154px;width:1px;height:32px;background:#cfcfcf"></div><div style="position:absolute;left:76px;top:154px;width:1px;height:32px;background:#fbfbfb"></div><svg width="6" height="24" style="position:absolute;left:78px;top:159px"><rect x="2" y="0.5" width="1.5" height="1.5" fill="#a9a9a9"/><rect x="3" y="1.5" width="1.2" height="1.2" fill="#fdfdfd"/><rect x="2" y="3.5" width="1.5" height="1.5" fill="#a9a9a9"/><rect x="3" y="4.5" width="1.2" height="1.2" fill="#fdfdfd"/><rect x="2" y="6.5" width="1.5" height="1.5" fill="#a9a9a9"/><rect x="3" y="7.5" width="1.2" height="1.2" fill="#fdfdfd"/><rect x="2" y="9.5" width="1.5" height="1.5" fill="#a9a9a9"/><rect x="3" y="10.5" width="1.2" height="1.2" fill="#fdfdfd"/><rect x="2" y="12.5" width="1.5" height="1.5" fill="#a9a9a9"/><rect x="3" y="13.5" width="1.2" height="1.2" fill="#fdfdfd"/><rect x="2" y="15.5" width="1.5" height="1.5" fill="#a9a9a9"/><rect x="3" y="16.5" width="1.2" height="1.2" fill="#fdfdfd"/><rect x="2" y="18.5" width="1.5" height="1.5" fill="#a9a9a9"/><rect x="3" y="19.5" width="1.2" height="1.2" fill="#fdfdfd"/><rect x="2" y="21.5" width="1.5" height="1.5" fill="#a9a9a9"/><rect x="3" y="22.5" width="1.2" height="1.2" fill="#fdfdfd"/></svg><svg width="20" height="20" viewBox="0 0 24 24" style="position:absolute;left:94px;top:160px;overflow:visible;"><path d="M12,1 l3.500,4 h-2.300 v4 h-2.400 v-4 h-2.300z" fill="#000"/><rect x="5" y="12" width="14" height="10.500" rx="1" fill="#000"/><rect x="9" y="10.500" width="6" height="2" fill="#000"/><circle cx="12" cy="17.300" r="3.300" fill="#fff"/><circle cx="12" cy="17.300" r="2" fill="#000"/><circle cx="12" cy="17.300" r="1" fill="#fff"/></svg><svg width="23" height="23" viewBox="0 0 24 24" style="position:absolute;left:122px;top:158px;overflow:visible;"><rect x="2.500" y="3.500" width="18" height="15" fill="#fff" stroke="#000" stroke-width="2.600" stroke-dasharray="3.500 2"/><path d="M5,16 v-5 l4,-4 4,4 3,-2.500 2.500,2.500 v5z" fill="#333"/><circle cx="8" cy="8" r="1.300" fill="#333"/><path d="M14,11 l0,11 2.600,-2.400 2,4.400 1.800,-.8 -2,-4.300 3.600,0z" fill="#fff" stroke="#000" stroke-width="1" stroke-linejoin="round"/></svg><div style="position:absolute;left:0;top:186px;width:1920px;height:1px;background:#bdbdbd"></div><svg width="40" height="6" style="position:absolute;left:5px;top:190px"><path d="M0,1.5 h38 M0,4.5 h38" stroke="#b5b5b5" stroke-width="1" stroke-dasharray="1.5 2.5"/></svg><svg width="24" height="24" viewBox="0 0 24 24" style="position:absolute;left:5px;top:202px;overflow:visible;"><path d="M3,4 L9.500,19 L15,4 L21,4" fill="none" stroke="#222" stroke-width="1.200"/><rect x="1.500" y="2.500" width="3" height="3" transform="rotate(45 3 4)" fill="#fff" stroke="#222" stroke-width="0.9"/><rect x="13.500" y="2.500" width="3" height="3" transform="rotate(45 15 4)" fill="#fff" stroke="#222" stroke-width="0.9"/><rect x="19.500" y="2.500" width="3" height="3" transform="rotate(45 21 4)" fill="#fff" stroke="#222" stroke-width="0.9"/><circle cx="9.500" cy="19" r="1.700" fill="#fff" stroke="#222" stroke-width="0.9"/><rect x="15" y="15" width="9" height="9" rx="1.6" fill="#69a669" stroke="#4d864d" stroke-width="1"/><path d="M19.5,16.7 v5.6 M16.7,19.5 h5.6" stroke="#f2fff2" stroke-width="2"/></svg><svg width="24" height="24" viewBox="0 0 24 24" style="position:absolute;left:5px;top:232px;overflow:visible;"><rect x="2" y="2" width="18" height="18" fill="#6d94c6"/><path d="M2,2 h6 v6 h-6z M14,2 h6 v6 h-6z M8,8 h6 v6 h-6z M2,14 h6 v6 h-6z" fill="#1f3a66"/><path d="M8,2 h6 v6 h-6z M14,8 h6 v6 h-6z" fill="#9db9dc"/><path d="M2,8 h6 v6 h-6z" fill="#4870a6"/><rect x="15" y="15" width="9" height="9" rx="1.6" fill="#69a669" stroke="#4d864d" stroke-width="1"/><path d="M19.5,16.7 v5.6 M16.7,19.5 h5.6" stroke="#f2fff2" stroke-width="2"/></svg><svg width="24" height="24" viewBox="0 0 24 24" style="position:absolute;left:5px;top:262px;overflow:visible;"><rect x="2" y="2" width="19" height="19" fill="#a9c2e2" stroke="#2f4f7f" stroke-width="1.200"/><path d="M2,13 h19 M11.500,2 v19 M2,2 l9.500,11 M11.500,13 l9.500,-11 M6.500,13 v8" stroke="#2f4f7f" stroke-width="1.100" fill="none"/><rect x="15" y="15" width="9" height="9" rx="1.6" fill="#69a669" stroke="#4d864d" stroke-width="1"/><path d="M19.5,16.7 v5.6 M16.7,19.5 h5.6" stroke="#f2fff2" stroke-width="2"/></svg><svg width="24" height="24" viewBox="0 0 24 24" style="position:absolute;left:5px;top:292px;overflow:visible;"><path d="M9,3 c4,0 5.500,3 5,6 c-0.500,4 -3.500,7 -8,8.500 l-0.500,-1.500 c3,-1.500 4.500,-3.500 4.500,-5.500 c-2.500,0.500 -4.500,-1 -4.500,-3.500 c0,-2.500 1.500,-4 3.500,-4z" fill="#4f7fb5" stroke="#2c4a78" stroke-width="0.8"/><rect x="15" y="15" width="9" height="9" rx="1.6" fill="#69a669" stroke="#4d864d" stroke-width="1"/><path d="M19.5,16.7 v5.6 M16.7,19.5 h5.6" stroke="#f2fff2" stroke-width="2"/></svg><svg width="24" height="24" viewBox="0 0 24 24" style="position:absolute;left:5px;top:322px;overflow:visible;"><path d="M2.500,22 C4,14 8,6 21.500,1.500 C22,8 18,14 9,16.500 C7,17 5,19 3.500,22z" fill="#7da2cf" stroke="#26364f" stroke-width="1"/><path d="M3,21.500 C7,14 12,8 20,3" fill="none" stroke="#26364f" stroke-width="0.8"/><rect x="15" y="15" width="9" height="9" rx="1.6" fill="#69a669" stroke="#4d864d" stroke-width="1"/><path d="M19.5,16.7 v5.6 M16.7,19.5 h5.6" stroke="#f2fff2" stroke-width="2"/></svg><svg width="24" height="24" viewBox="0 0 24 24" style="position:absolute;left:5px;top:352px;overflow:visible;"><rect x="1.500" y="1.500" width="20" height="20" rx="2" fill="#a9c2e2" stroke="#4f78ae" stroke-width="1"/><path d="M4,3.500 L9,17 L14.500,3.500 L20,3.500" fill="none" stroke="#3d5f8f" stroke-width="1.100"/><circle cx="4" cy="3.500" r="1.400" fill="#fff" stroke="#3d5f8f" stroke-width="0.8"/><circle cx="14.500" cy="3.500" r="1.400" fill="#fff" stroke="#3d5f8f" stroke-width="0.8"/><circle cx="9" cy="17.500" r="1.500" fill="#fff" stroke="#3d5f8f" stroke-width="0.8"/><rect x="15" y="15" width="9" height="9" rx="1.6" fill="#69a669" stroke="#4d864d" stroke-width="1"/><path d="M19.5,16.7 v5.6 M16.7,19.5 h5.6" stroke="#f2fff2" stroke-width="2"/></svg><svg width="24" height="24" viewBox="0 0 24 24" style="position:absolute;left:5px;top:382px;overflow:visible;"><path d="M5,3 C9,0.500 15,1 17.500,4 C20,7 18.500,12 16.500,14 L16.500,20 C16.500,22 13.500,22 13.500,20 L13,14 C11,15.500 9,15 8.500,13 C5,14 2.500,11 3,7.500 C3.200,5.500 3.800,4 5,3z" fill="#4f7fb5" stroke="#26406b" stroke-width="1"/><path d="M8.500,13 C9,9 10,6 12.500,4.500" fill="none" stroke="#cfe0f3" stroke-width="1"/><circle cx="7" cy="7" r="0.900" fill="#fff"/><rect x="15" y="15" width="9" height="9" rx="1.6" fill="#69a669" stroke="#4d864d" stroke-width="1"/><path d="M19.5,16.7 v5.6 M16.7,19.5 h5.6" stroke="#f2fff2" stroke-width="2"/></svg><svg width="24" height="24" viewBox="0 0 24 24" style="position:absolute;left:5px;top:412px;overflow:visible;"><circle cx="11" cy="11" r="9.5" fill="#7da7d6" stroke="#4a5a6a" stroke-width="0.9"/><ellipse cx="11" cy="11" rx="4.2" ry="9.5" fill="none" stroke="#e8eef5" stroke-width="0.9"/><path d="M1.5,11 h19 M3,6 h16 M3,16 h16 M11,1.5 v19" stroke="#e8eef5" stroke-width="0.9" fill="none"/><path d="M6,4.5 q3,-1.5 4,1 q-0.5,2.5 -3,3 q-2,0.5 -2.5,-2z M12,9 q4,-1 5,2 q0,3 -3,4.5 q-2,-1 -2,-3.5z" fill="#3d6aa0" opacity=".85"/><rect x="15" y="15" width="9" height="9" rx="1.6" fill="#69a669" stroke="#4d864d" stroke-width="1"/><path d="M19.5,16.7 v5.6 M16.7,19.5 h5.6" stroke="#f2fff2" stroke-width="2"/></svg><svg width="24" height="24" viewBox="0 0 24 24" style="position:absolute;left:5px;top:442px;overflow:visible;"><circle cx="11" cy="11" r="9.500" fill="#2f4f7f" stroke="#1c2f4f" stroke-width="0.9"/><ellipse cx="11" cy="11" rx="4.500" ry="9.500" fill="none" stroke="#fff" stroke-width="1.300"/><path d="M1.500,11 h19 M3,6 h16 M3,16 h16" stroke="#fff" stroke-width="1.300" fill="none"/><rect x="15" y="15" width="9" height="9" rx="1.6" fill="#69a669" stroke="#4d864d" stroke-width="1"/><path d="M19.5,16.7 v5.6 M16.7,19.5 h5.6" stroke="#f2fff2" stroke-width="2"/></svg><svg width="24" height="24" viewBox="0 0 24 24" style="position:absolute;left:5px;top:472px;overflow:visible;"><circle cx="11" cy="11" r="9.5" fill="#a8c0e0" stroke="#4a5a6a" stroke-width="0.9"/><ellipse cx="11" cy="11" rx="4.2" ry="9.5" fill="none" stroke="#e8eef5" stroke-width="0.9"/><path d="M1.5,11 h19 M3,6 h16 M3,16 h16 M11,1.5 v19" stroke="#e8eef5" stroke-width="0.9" fill="none"/><path d="M6,4.5 q3,-1.5 4,1 q-0.5,2.5 -3,3 q-2,0.5 -2.5,-2z M12,9 q4,-1 5,2 q0,3 -3,4.5 q-2,-1 -2,-3.5z" fill="#6d8fbd" opacity=".85"/><path d="M4,5 L9,15 L13,6 L18,6" fill="none" stroke="#fff" stroke-width="1.100"/><circle cx="4" cy="5" r="1.300" fill="#fff" stroke="#345" stroke-width="0.600"/><circle cx="13" cy="6" r="1.300" fill="#fff" stroke="#345" stroke-width="0.600"/><circle cx="9" cy="15" r="1.300" fill="#fff" stroke="#345" stroke-width="0.600"/><rect x="15" y="15" width="9" height="9" rx="1.6" fill="#69a669" stroke="#4d864d" stroke-width="1"/><path d="M19.5,16.7 v5.6 M16.7,19.5 h5.6" stroke="#f2fff2" stroke-width="2"/></svg><svg width="24" height="24" viewBox="0 0 24 24" style="position:absolute;left:5px;top:502px;overflow:visible;"><path d="M3.5,3 L9.5,19.5 L15.5,3.5 L21,3.5" fill="none" stroke="#222" stroke-width="1.2"/><rect x="2" y="1.5" width="3" height="3" transform="rotate(45 3.5 3)" fill="#fff" stroke="#222" stroke-width="0.9"/><rect x="14" y="2" width="3" height="3" transform="rotate(45 15.5 3.5)" fill="#fff" stroke="#222" stroke-width="0.9"/><rect x="19.5" y="2" width="3" height="3" transform="rotate(45 21 3.5)" fill="#fff" stroke="#222" stroke-width="0.9"/><circle cx="9.5" cy="19.5" r="1.7" fill="#fff" stroke="#222" stroke-width="0.9"/><rect x="15" y="15" width="9" height="9" rx="1.6" fill="#e0d247" stroke="#a99b2a" stroke-width="1"/><path d="M19.5,16.2 v6.6 M16.2,19.5 h6.6 M17.1,17.1 l4.8,4.8 M21.9,17.1 l-4.8,4.8" stroke="#fffcd2" stroke-width="1" stroke-linecap="round"/></svg><svg width="24" height="24" viewBox="0 0 24 24" style="position:absolute;left:12px;top:532px;overflow:visible;"><rect x="2" y="2" width="18" height="18" fill="#dfe8f4" stroke="#3f6596" stroke-width="1"/><rect x="2" y="2" width="18" height="4" fill="#3f6596"/><path d="M6.500,2 v18 M11,2 v18 M15.500,2 v18 M2,9.500 h18 M2,13 h18 M2,16.500 h18" stroke="#3f6596" stroke-width="0.9"/><rect x="15" y="15" width="9" height="9" rx="1.6" fill="#69a669" stroke="#4d864d" stroke-width="1"/><path d="M19.5,16.7 v5.6 M16.7,19.5 h5.6" stroke="#f2fff2" stroke-width="2"/></svg><svg width="9" height="6" style="position:absolute;left:36px;top:391px"><path d="M0,0 h9 l-4.5,5.5z" fill="#000"/></svg><svg width="9" height="6" style="position:absolute;left:36px;top:421px"><path d="M0,0 h9 l-4.5,5.5z" fill="#000"/></svg><svg width="9" height="6" style="position:absolute;left:36px;top:481px"><path d="M0,0 h9 l-4.5,5.5z" fill="#000"/></svg><svg width="9" height="6" style="position:absolute;left:36px;top:511px"><path d="M0,0 h9 l-4.5,5.5z" fill="#000"/></svg><div style="position:absolute;left:50px;top:188px;width:251px;height:31px;background:#d9d9d9;border:1px solid #d0d0d0;box-sizing:border-box"></div><span style="position:absolute;left:55px;top:195px;font:normal 15.2px/20px 'Liberation Sans',sans-serif;color:#000;white-space:nowrap;letter-spacing:-0.505px;">Layer</span><svg width="48" height="31" viewBox="0 0 48 31" style="position:absolute;left:253px;top:188px"><path d="M8,10.5 h8.5 v7 h-2 M3.5,14.0 h9 v8 h-9 z M3.5,15.7 h9" fill="none" stroke="#222" stroke-width="2.3"/><path d="M29,9.5 l12,12 M41,9.5 l-12,12" stroke="#222" stroke-width="3.3" fill="none"/></svg><svg width="18" height="18" viewBox="0 0 24 24" style="position:absolute;left:54px;top:225px;overflow:visible;"><path d="M3,14 l10,-4 4,5 -10,5z" fill="#d9623a" stroke="#9a3a1a" stroke-width="0.700"/><path d="M2,16 l6,-2 3,4 -6,3z" fill="#6f96c6"/><path d="M13,11 L21,3" stroke="#e8c33f" stroke-width="3" stroke-linecap="round"/><path d="M9,12 l3,4" stroke="#f0e0a0" stroke-width="2"/></svg><svg width="18" height="18" viewBox="0 0 24 24" style="position:absolute;left:77px;top:225px;overflow:visible;"><path d="M8,7 h12 v12 h-12z" fill="#f4f4f4" stroke="#777" stroke-width="1.100"/><path d="M5,10 v12 h12" fill="none" stroke="#999" stroke-width="1.100"/><path d="M12,9 v-5 q0,-2.500 2,-2.500 q2,0 2,2.500 v9 q0,1.500 -1.200,1.500 q-1.200,0 -1.200,-1.500 v-6" fill="none" stroke="#555" stroke-width="1.100"/><circle cx="19" cy="20" r="3.500" fill="#6ab06a" stroke="#3c7a3a" stroke-width="0.700"/><path d="M19,18 v4 M17,20 h4" stroke="#fff" stroke-width="1.200"/></svg><svg width="18" height="18" viewBox="0 0 24 24" style="position:absolute;left:101px;top:225px;overflow:visible;"><path d="M2,11 q9,-9 19,0 q-9,9 -19,0z" fill="#f4f4f4" stroke="#777" stroke-width="1.200"/><circle cx="11.500" cy="11" r="4" fill="#5d87bb" stroke="#2c4a78" stroke-width="0.800"/><circle cx="11.500" cy="11" r="1.600" fill="#1c2f4f"/><path d="M14,17 h9 l-4.500,5z" fill="#000"/></svg><svg width="18" height="18" viewBox="0 0 24 24" style="position:absolute;left:123px;top:225px;overflow:visible;"><path d="M2,3 h20 l-7.500,8.500 v10 l-5,-2.500 v-7.500z" fill="#6f9fd6" stroke="#3f6596" stroke-width="0.900"/><path d="M2,3 h20 l-1.800,2 h-16.400z" fill="#e8c33f" stroke="#b89b1d" stroke-width="0.800"/></svg><svg width="18" height="18" viewBox="0 0 24 24" style="position:absolute;left:147px;top:225px;overflow:visible;"><text x="2" y="15" font-family="Liberation Serif,serif" font-size="17" fill="#7b2d8e">ε</text><rect x="12" y="13" width="8" height="8" fill="#d9d9d9" stroke="#aaa" stroke-width="0.700"/><path d="M14,15 l4,2 -4,2z" fill="#999"/></svg><svg width="18" height="18" viewBox="0 0 24 24" style="position:absolute;left:185px;top:225px;overflow:visible;"><rect x="3" y="3" width="6" height="5" fill="#e8c33f" stroke="#8f7d14" stroke-width="0.800"/><rect x="3" y="12" width="6" height="5" fill="#e8c33f" stroke="#8f7d14" stroke-width="0.800"/><path d="M6,8 v4" stroke="#555" stroke-width="1"/><path d="M16,3 v10 h-3.500 l5,7.500 5,-7.500 h-3.500 v-10z" fill="#4f86c6" stroke="#2a4f86" stroke-width="0.900"/><path d="M11,2 v19" stroke="#777" stroke-width="0.800" stroke-dasharray="1.500 1.500"/></svg><svg width="18" height="18" viewBox="0 0 24 24" style="position:absolute;left:208px;top:225px;overflow:visible;"><rect x="3" y="5" width="6" height="5" fill="#e8c33f" stroke="#8f7d14" stroke-width="0.800"/><rect x="3" y="14" width="6" height="5" fill="#e8c33f" stroke="#8f7d14" stroke-width="0.800"/><path d="M6,10 v4" stroke="#555" stroke-width="1"/><path d="M16,21 v-10 h-3.500 l5,-7.500 5,7.500 h-3.500 v10z" fill="#4f86c6" stroke="#2a4f86" stroke-width="0.900"/><path d="M11,2 v19" stroke="#777" stroke-width="0.800" stroke-dasharray="1.500 1.500"/></svg><svg width="18" height="18" viewBox="0 0 24 24" style="position:absolute;left:231px;top:225px;overflow:visible;"><rect x="3" y="3.500" width="15" height="14" rx="1" fill="#f7f7f7" stroke="#888" stroke-width="1.200"/><rect x="13" y="15" width="9" height="6" rx="1.500" fill="#e0524d" stroke="#a82825" stroke-width="0.800"/><path d="M15,18 h5" stroke="#fff" stroke-width="1.500"/></svg><svg width="8" height="5" style="position:absolute;left:170px;top:232px"><path d="M0,0 h8 l-4,5z" fill="#000"/></svg><div style="position:absolute;left:50px;top:247px;width:251px;height:561px;background:#fff;border:1px solid #a3a3a3;box-sizing:border-box"></div><svg width="10" height="12" viewBox="0 0 10 12" style="position:absolute;left:60px;top:254.5px"><path d="M2.5,1.5 L7.5,6 L2.5,10.5z" fill="#fff" stroke="#a0a0a0" stroke-width="1"/></svg><div style="position:absolute;left:79px;top:252.5px;width:15px;height:15px;box-sizing:border-box;border:1px solid #8e8f8f;background:linear-gradient(135deg,#dfe3e6,#fdfdfd)"></div><svg width="15" height="15" viewBox="0 0 15 15" style="position:absolute;left:79px;top:252.5px"><path d="M3.3,7.2 L6,11 L11.5,3.2" fill="none" stroke="#2f4a8c" stroke-width="2" stroke-linecap="round" stroke-linejoin="round"/></svg><svg width="21" height="21" viewBox="0 0 24 24" style="position:absolute;left:100px;top:249.5px;overflow:visible;"><path d="M7.5,6.5 h13 v13 h-13z" fill="#f4f4f4" stroke="#666" stroke-width="1.300"/><path d="M3.500,11 v12 h12" fill="none" stroke="#8c8c8c" stroke-width="1.300"/><path d="M11.500,10 v-6 q0,-3 2.400,-3 q2.400,0 2.400,3 v10.500 q0,1.800 -1.500,1.800 q-1.500,0 -1.500,-1.800 v-7.500" fill="none" stroke="#4a4a4a" stroke-width="1.400"/></svg><span style="position:absolute;left:127px;top:251.0px;font:normal 14.7px/20px 'Liberation Sans',sans-serif;color:#000;white-space:nowrap;letter-spacing:-0.519px;">Strasse</span><svg width="10" height="12" viewBox="0 0 10 12" style="position:absolute;left:60px;top:278.5px"><path d="M2.5,1.5 L7.5,6 L2.5,10.5z" fill="#fff" stroke="#a0a0a0" stroke-width="1"/></svg><div style="position:absolute;left:79px;top:276.5px;width:15px;height:15px;box-sizing:border-box;border:1px solid #8e8f8f;background:linear-gradient(135deg,#dfe3e6,#fdfdfd)"></div><svg width="15" height="15" viewBox="0 0 15 15" style="position:absolute;left:79px;top:276.5px"><path d="M3.3,7.2 L6,11 L11.5,3.2" fill="none" stroke="#2f4a8c" stroke-width="2" stroke-linecap="round" stroke-linejoin="round"/></svg><svg width="21" height="21" viewBox="0 0 24 24" style="position:absolute;left:100px;top:273.5px;overflow:visible;"><path d="M7.5,6.5 h13 v13 h-13z" fill="#f4f4f4" stroke="#666" stroke-width="1.300"/><path d="M3.500,11 v12 h12" fill="none" stroke="#8c8c8c" stroke-width="1.300"/><path d="M11.500,10 v-6 q0,-3 2.400,-3 q2.400,0 2.400,3 v10.500 q0,1.800 -1.500,1.800 q-1.500,0 -1.500,-1.800 v-7.500" fill="none" stroke="#4a4a4a" stroke-width="1.400"/></svg><span style="position:absolute;left:127px;top:275.0px;font:normal 14.7px/20px 'Liberation Sans',sans-serif;color:#000;white-space:nowrap;letter-spacing:-0.016px;">Rundweg</span><svg width="10" height="12" viewBox="0 0 10 12" style="position:absolute;left:60px;top:302.5px"><path d="M2.5,1.5 L7.5,6 L2.5,10.5z" fill="#fff" stroke="#a0a0a0" stroke-width="1"/></svg><div style="position:absolute;left:79px;top:300.5px;width:15px;height:15px;box-sizing:border-box;border:1px solid #8e8f8f;background:linear-gradient(135deg,#dfe3e6,#fdfdfd)"></div><svg width="15" height="15" viewBox="0 0 15 15" style="position:absolute;left:79px;top:300.5px"><path d="M3.3,7.2 L6,11 L11.5,3.2" fill="none" stroke="#2f4a8c" stroke-width="2" stroke-linecap="round" stroke-linejoin="round"/></svg><svg width="21" height="21" viewBox="0 0 24 24" style="position:absolute;left:100px;top:297.5px;overflow:visible;"><path d="M7.5,6.5 h13 v13 h-13z" fill="#f4f4f4" stroke="#666" stroke-width="1.300"/><path d="M3.500,11 v12 h12" fill="none" stroke="#8c8c8c" stroke-width="1.300"/><path d="M11.500,10 v-6 q0,-3 2.400,-3 q2.400,0 2.400,3 v10.500 q0,1.800 -1.500,1.800 q-1.500,0 -1.500,-1.800 v-7.500" fill="none" stroke="#4a4a4a" stroke-width="1.400"/></svg><span style="position:absolute;left:127px;top:299.0px;font:normal 14.7px/20px 'Liberation Sans',sans-serif;color:#000;white-space:nowrap;letter-spacing:-1.052px;">NSG</span><svg width="10" height="12" viewBox="0 0 10 12" style="position:absolute;left:60px;top:326.5px"><path d="M2.5,1.5 L7.5,6 L2.5,10.5z" fill="#fff" stroke="#a0a0a0" stroke-width="1"/></svg><div style="position:absolute;left:79px;top:324.5px;width:15px;height:15px;box-sizing:border-box;border:1px solid #8e8f8f;background:linear-gradient(135deg,#dfe3e6,#fdfdfd)"></div><svg width="15" height="15" viewBox="0 0 15 15" style="position:absolute;left:79px;top:324.5px"><path d="M3.3,7.2 L6,11 L11.5,3.2" fill="none" stroke="#2f4a8c" stroke-width="2" stroke-linecap="round" stroke-linejoin="round"/></svg><svg width="21" height="21" viewBox="0 0 24 24" style="position:absolute;left:100px;top:321.5px;overflow:visible;"><path d="M7.5,6.5 h13 v13 h-13z" fill="#f4f4f4" stroke="#666" stroke-width="1.300"/><path d="M3.500,11 v12 h12" fill="none" stroke="#8c8c8c" stroke-width="1.300"/><path d="M11.500,10 v-6 q0,-3 2.400,-3 q2.400,0 2.400,3 v10.500 q0,1.800 -1.500,1.800 q-1.500,0 -1.500,-1.800 v-7.500" fill="none" stroke="#4a4a4a" stroke-width="1.400"/></svg><span style="position:absolute;left:127px;top:323.0px;font:normal 14.7px/20px 'Liberation Sans',sans-serif;color:#000;white-space:nowrap;letter-spacing:-0.022px;">Bannwald_alt</span><svg width="10" height="12" viewBox="0 0 10 12" style="position:absolute;left:60px;top:350.5px"><path d="M2.5,1.5 L7.5,6 L2.5,10.5z" fill="#fff" stroke="#a0a0a0" stroke-width="1"/></svg><div style="position:absolute;left:79px;top:348.5px;width:15px;height:15px;box-sizing:border-box;border:1px solid #8e8f8f;background:linear-gradient(135deg,#dfe3e6,#fdfdfd)"></div><svg width="15" height="15" viewBox="0 0 15 15" style="position:absolute;left:79px;top:348.5px"><path d="M3.3,7.2 L6,11 L11.5,3.2" fill="none" stroke="#2f4a8c" stroke-width="2" stroke-linecap="round" stroke-linejoin="round"/></svg><svg width="21" height="21" viewBox="0 0 24 24" style="position:absolute;left:100px;top:345.5px;overflow:visible;"><path d="M7.5,6.5 h13 v13 h-13z" fill="#f4f4f4" stroke="#666" stroke-width="1.300"/><path d="M3.500,11 v12 h12" fill="none" stroke="#8c8c8c" stroke-width="1.300"/><path d="M11.500,10 v-6 q0,-3 2.400,-3 q2.400,0 2.400,3 v10.500 q0,1.800 -1.500,1.800 q-1.500,0 -1.500,-1.800 v-7.500" fill="none" stroke="#4a4a4a" stroke-width="1.400"/></svg><span style="position:absolute;left:127px;top:347.0px;font:normal 14.7px/20px 'Liberation Sans',sans-serif;color:#000;white-space:nowrap;letter-spacing:0.351px;">Heidewald</span><svg width="10" height="12" viewBox="0 0 10 12" style="position:absolute;left:60px;top:374.5px"><path d="M2.5,1.5 L7.5,6 L2.5,10.5z" fill="#fff" stroke="#a0a0a0" stroke-width="1"/></svg><div style="position:absolute;left:79px;top:372.5px;width:15px;height:15px;box-sizing:border-box;border:1px solid #8e8f8f;background:linear-gradient(135deg,#dfe3e6,#fdfdfd)"></div><svg width="15" height="15" viewBox="0 0 15 15" style="position:absolute;left:79px;top:372.5px"><path d="M3.3,7.2 L6,11 L11.5,3.2" fill="none" stroke="#2f4a8c" stroke-width="2" stroke-linecap="round" stroke-linejoin="round"/></svg><svg width="21" height="21" viewBox="0 0 24 24" style="position:absolute;left:100px;top:369.5px;overflow:visible;"><path d="M7.5,6.5 h13 v13 h-13z" fill="#f4f4f4" stroke="#666" stroke-width="1.300"/><path d="M3.500,11 v12 h12" fill="none" stroke="#8c8c8c" stroke-width="1.300"/><path d="M11.500,10 v-6 q0,-3 2.400,-3 q2.400,0 2.400,3 v10.500 q0,1.800 -1.500,1.800 q-1.500,0 -1.500,-1.800 v-7.500" fill="none" stroke="#4a4a4a" stroke-width="1.400"/></svg><span style="position:absolute;left:127px;top:371.0px;font:normal 14.7px/20px 'Liberation Sans',sans-serif;color:#000;white-space:nowrap;letter-spacing:-0.238px;">Misse</span><svg width="10" height="12" viewBox="0 0 10 12" style="position:absolute;left:60px;top:398.5px"><path d="M2.5,1.5 L7.5,6 L2.5,10.5z" fill="#fff" stroke="#a0a0a0" stroke-width="1"/></svg><div style="position:absolute;left:79px;top:396.5px;width:15px;height:15px;box-sizing:border-box;border:1px solid #8e8f8f;background:linear-gradient(135deg,#dfe3e6,#fdfdfd)"></div><svg width="15" height="15" viewBox="0 0 15 15" style="position:absolute;left:79px;top:396.5px"><path d="M3.3,7.2 L6,11 L11.5,3.2" fill="none" stroke="#2f4a8c" stroke-width="2" stroke-linecap="round" stroke-linejoin="round"/></svg><svg width="21" height="21" viewBox="0 0 24 24" style="position:absolute;left:100px;top:393.5px;overflow:visible;"><path d="M7.5,6.5 h13 v13 h-13z" fill="#f4f4f4" stroke="#666" stroke-width="1.300"/><path d="M3.500,11 v12 h12" fill="none" stroke="#8c8c8c" stroke-width="1.300"/><path d="M11.500,10 v-6 q0,-3 2.400,-3 q2.400,0 2.400,3 v10.500 q0,1.800 -1.500,1.800 q-1.500,0 -1.500,-1.800 v-7.500" fill="none" stroke="#4a4a4a" stroke-width="1.400"/></svg><span style="position:absolute;left:127px;top:395.0px;font:normal 14.7px/20px 'Liberation Sans',sans-serif;color:#000;white-space:nowrap;letter-spacing:0.170px;">Moorkern1</span><svg width="10" height="12" viewBox="0 0 10 12" style="position:absolute;left:60px;top:422.5px"><path d="M2.5,1.5 L7.5,6 L2.5,10.5z" fill="#fff" stroke="#a0a0a0" stroke-width="1"/></svg><div style="position:absolute;left:79px;top:420.5px;width:15px;height:15px;box-sizing:border-box;border:1px solid #8e8f8f;background:linear-gradient(135deg,#dfe3e6,#fdfdfd)"></div><svg width="15" height="15" viewBox="0 0 15 15" style="position:absolute;left:79px;top:420.5px"><path d="M3.3,7.2 L6,11 L11.5,3.2" fill="none" stroke="#2f4a8c" stroke-width="2" stroke-linecap="round" stroke-linejoin="round"/></svg><svg width="21" height="21" viewBox="0 0 24 24" style="position:absolute;left:100px;top:417.5px;overflow:visible;"><path d="M7.5,6.5 h13 v13 h-13z" fill="#f4f4f4" stroke="#666" stroke-width="1.300"/><path d="M3.500,11 v12 h12" fill="none" stroke="#8c8c8c" stroke-width="1.300"/><path d="M11.500,10 v-6 q0,-3 2.400,-3 q2.400,0 2.400,3 v10.500 q0,1.800 -1.500,1.800 q-1.500,0 -1.500,-1.800 v-7.500" fill="none" stroke="#4a4a4a" stroke-width="1.400"/></svg><span style="position:absolute;left:127px;top:419.0px;font:normal 14.7px/20px 'Liberation Sans',sans-serif;color:#000;white-space:nowrap;letter-spacing:0.170px;">Moorkern2</span><svg width="10" height="12" viewBox="0 0 10 12" style="position:absolute;left:60px;top:446.5px"><path d="M2.5,1.5 L7.5,6 L2.5,10.5z" fill="#fff" stroke="#a0a0a0" stroke-width="1"/></svg><div style="position:absolute;left:79px;top:444.5px;width:15px;height:15px;box-sizing:border-box;border:1px solid #8e8f8f;background:linear-gradient(135deg,#dfe3e6,#fdfdfd)"></div><svg width="15" height="15" viewBox="0 0 15 15" style="position:absolute;left:79px;top:444.5px"><path d="M3.3,7.2 L6,11 L11.5,3.2" fill="none" stroke="#2f4a8c" stroke-width="2" stroke-linecap="round" stroke-linejoin="round"/></svg><svg width="21" height="21" viewBox="0 0 24 24" style="position:absolute;left:100px;top:441.5px;overflow:visible;"><path d="M7.5,6.5 h13 v13 h-13z" fill="#f4f4f4" stroke="#666" stroke-width="1.300"/><path d="M3.500,11 v12 h12" fill="none" stroke="#8c8c8c" stroke-width="1.300"/><path d="M11.500,10 v-6 q0,-3 2.400,-3 q2.400,0 2.400,3 v10.500 q0,1.800 -1.500,1.800 q-1.500,0 -1.500,-1.800 v-7.500" fill="none" stroke="#4a4a4a" stroke-width="1.400"/></svg><span style="position:absolute;left:127px;top:443.0px;font:normal 14.7px/20px 'Liberation Sans',sans-serif;color:#000;white-space:nowrap;letter-spacing:0.170px;">Moorkern3</span><svg width="10" height="12" viewBox="0 0 10 12" style="position:absolute;left:60px;top:470.5px"><path d="M2.5,1.5 L7.5,6 L2.5,10.5z" fill="#fff" stroke="#a0a0a0" stroke-width="1"/></svg><div style="position:absolute;left:79px;top:468.5px;width:15px;height:15px;box-sizing:border-box;border:1px solid #8e8f8f;background:linear-gradient(135deg,#dfe3e6,#fdfdfd)"></div><svg width="15" height="15" viewBox="0 0 15 15" style="position:absolute;left:79px;top:468.5px"><path d="M3.3,7.2 L6,11 L11.5,3.2" fill="none" stroke="#2f4a8c" stroke-width="2" stroke-linecap="round" stroke-linejoin="round"/></svg><svg width="21" height="21" viewBox="0 0 24 24" style="position:absolute;left:100px;top:465.5px;overflow:visible;"><path d="M7.5,6.5 h13 v13 h-13z" fill="#f4f4f4" stroke="#666" stroke-width="1.300"/><path d="M3.500,11 v12 h12" fill="none" stroke="#8c8c8c" stroke-width="1.300"/><path d="M11.500,10 v-6 q0,-3 2.400,-3 q2.400,0 2.400,3 v10.500 q0,1.800 -1.500,1.800 q-1.500,0 -1.500,-1.800 v-7.500" fill="none" stroke="#4a4a4a" stroke-width="1.400"/></svg><span style="position:absolute;left:127px;top:467.0px;font:normal 14.7px/20px 'Liberation Sans',sans-serif;color:#000;white-space:nowrap;letter-spacing:0.170px;">Moorkern4</span><svg width="10" height="12" viewBox="0 0 10 12" style="position:absolute;left:60px;top:494.5px"><path d="M2.5,1.5 L7.5,6 L2.5,10.5z" fill="#fff" stroke="#a0a0a0" stroke-width="1"/></svg><div style="position:absolute;left:79px;top:492.5px;width:15px;height:15px;box-sizing:border-box;border:1px solid #8e8f8f;background:linear-gradient(135deg,#dfe3e6,#fdfdfd)"></div><svg width="15" height="15" viewBox="0 0 15 15" style="position:absolute;left:79px;top:492.5px"><path d="M3.3,7.2 L6,11 L11.5,3.2" fill="none" stroke="#2f4a8c" stroke-width="2" stroke-linecap="round" stroke-linejoin="round"/></svg><svg width="21" height="21" viewBox="0 0 24 24" style="position:absolute;left:100px;top:489.5px;overflow:visible;"><path d="M7.5,6.5 h13 v13 h-13z" fill="#f4f4f4" stroke="#666" stroke-width="1.300"/><path d="M3.500,11 v12 h12" fill="none" stroke="#8c8c8c" stroke-width="1.300"/><path d="M11.500,10 v-6 q0,-3 2.400,-3 q2.400,0 2.400,3 v10.500 q0,1.800 -1.500,1.800 q-1.500,0 -1.500,-1.800 v-7.500" fill="none" stroke="#4a4a4a" stroke-width="1.400"/></svg><span style="position:absolute;left:127px;top:491.0px;font:normal 14.7px/20px 'Liberation Sans',sans-serif;color:#000;white-space:nowrap;letter-spacing:0.497px;">Moorwald</span><svg width="10" height="12" viewBox="0 0 10 12" style="position:absolute;left:60px;top:518.5px"><path d="M2.5,1.5 L7.5,6 L2.5,10.5z" fill="#fff" stroke="#a0a0a0" stroke-width="1"/></svg><div style="position:absolute;left:79px;top:516.5px;width:15px;height:15px;box-sizing:border-box;border:1px solid #8e8f8f;background:linear-gradient(135deg,#dfe3e6,#fdfdfd)"></div><svg width="15" height="15" viewBox="0 0 15 15" style="position:absolute;left:79px;top:516.5px"><path d="M3.3,7.2 L6,11 L11.5,3.2" fill="none" stroke="#2f4a8c" stroke-width="2" stroke-linecap="round" stroke-linejoin="round"/></svg><svg width="21" height="21" viewBox="0 0 24 24" style="position:absolute;left:100px;top:513.5px;overflow:visible;"><path d="M7.5,6.5 h13 v13 h-13z" fill="#f4f4f4" stroke="#666" stroke-width="1.300"/><path d="M3.500,11 v12 h12" fill="none" stroke="#8c8c8c" stroke-width="1.300"/><path d="M11.500,10 v-6 q0,-3 2.400,-3 q2.400,0 2.400,3 v10.500 q0,1.800 -1.500,1.800 q-1.500,0 -1.500,-1.800 v-7.500" fill="none" stroke="#4a4a4a" stroke-width="1.400"/></svg><span style="position:absolute;left:127px;top:515.0px;font:normal 14.7px/20px 'Liberation Sans',sans-serif;color:#000;white-space:nowrap;letter-spacing:0.144px;">Tannenwald</span><svg width="10" height="10" viewBox="0 0 10 10" style="position:absolute;left:58px;top:541.5px"><path d="M8.5,2.5 L8.5,8.500 L2.500,8.500z" fill="#404040" stroke="#262626" stroke-width="1"/></svg><div style="position:absolute;left:79px;top:540.5px;width:15px;height:15px;box-sizing:border-box;border:1px solid #8e8f8f;background:linear-gradient(135deg,#dfe3e6,#fdfdfd)"></div><svg width="15" height="15" viewBox="0 0 15 15" style="position:absolute;left:79px;top:540.5px"><path d="M3.3,7.2 L6,11 L11.5,3.2" fill="none" stroke="#2f4a8c" stroke-width="2" stroke-linecap="round" stroke-linejoin="round"/></svg><svg width="16" height="16" viewBox="0 0 24 24" style="position:absolute;left:103px;top:540.5px;overflow:visible;"><rect x="2" y="2" width="20" height="20" fill="#7a9cc8"/><path d="M2,2 h7 v7 h-7z M15,2 h7 v7 h-7z M9,9 h6 v6 h-6z M2,15 h7 v7 h-7z" fill="#1f3a66"/><path d="M9,2 h6 v7 h-6z M15,9 h7 v6 h-7z" fill="#c6d6ea"/><path d="M15,15 h7 v7 h-7z" fill="#4870a6"/></svg><span style="position:absolute;left:127px;top:539.0px;font:bold 14.7px/20px 'Liberation Sans',sans-serif;color:#000;white-space:nowrap;letter-spacing:0.002px;">OpenStreetMap Standar</span><div style="position:absolute;left:294.5px;top:250.5px;width:4px;height:20px;background:#e4e4e4"></div><div style="position:absolute;left:294.5px;top:274.5px;width:4px;height:20px;background:#e4e4e4"></div><div style="position:absolute;left:294.5px;top:298.5px;width:4px;height:20px;background:#e4e4e4"></div><div style="position:absolute;left:294.5px;top:322.5px;width:4px;height:20px;background:#e4e4e4"></div><div style="position:absolute;left:294.5px;top:346.5px;width:4px;height:20px;background:#e4e4e4"></div><div style="position:absolute;left:294.5px;top:370.5px;width:4px;height:20px;background:#e4e4e4"></div><div style="position:absolute;left:294.5px;top:394.5px;width:4px;height:20px;background:#e4e4e4"></div><div style="position:absolute;left:294.5px;top:418.5px;width:4px;height:20px;background:#e4e4e4"></div><div style="position:absolute;left:294.5px;top:442.5px;width:4px;height:20px;background:#e4e4e4"></div><div style="position:absolute;left:294.5px;top:466.5px;width:4px;height:20px;background:#e4e4e4"></div><div style="position:absolute;left:294.5px;top:490.5px;width:4px;height:20px;background:#e4e4e4"></div><div style="position:absolute;left:294.5px;top:514.5px;width:4px;height:20px;background:#e4e4e4"></div><div style="position:absolute;left:294.5px;top:538.5px;width:4px;height:20px;background:#e4e4e4"></div><svg width="4" height="12" style="position:absolute;left:296px;top:544px"><circle cx="2" cy="3" r="1.1" fill="#000"/><circle cx="2" cy="9" r="1.1" fill="#000"/></svg><div style="position:absolute;left:51px;top:787px;width:249px;height:20px;background:#f0f0f0"></div><div style="position:absolute;left:73px;top:788px;width:198px;height:18px;box-sizing:border-box;border:1px solid #9a9a9a;border-radius:2px;background:linear-gradient(180deg,#f2f2f2 0%,#dcdcdc 48%,#cfcfcf 52%,#d8d8d8 100%)"></div><svg width="10" height="10" style="position:absolute;left:168.0px;top:793.0px"><path d="M1.5,0 v8 M4.5,0 v8 M7.5,0 v8" stroke="#555" stroke-width="1"/></svg><svg width="8" height="10" style="position:absolute;left:57px;top:792.0px"><path d="M6,1 L1,5 L6,9z" fill="#404040"/></svg><svg width="8" height="10" style="position:absolute;left:287px;top:792.0px"><path d="M1,1 L6,5 L1,9z" fill="#404040"/></svg><div style="position:absolute;left:50px;top:814px;width:251px;height:31px;background:#d9d9d9;border:1px solid #d0d0d0;box-sizing:border-box"></div><span style="position:absolute;left:55px;top:821px;font:normal 15.2px/20px 'Liberation Sans',sans-serif;color:#000;white-space:nowrap;letter-spacing:-0.083px;">Koordinatenaufnahme</span><svg width="48" height="31" viewBox="0 0 48 31" style="position:absolute;left:253px;top:814px"><path d="M8,10.5 h8.5 v7 h-2 M3.5,14.0 h9 v8 h-9 z M3.5,15.7 h9" fill="none" stroke="#222" stroke-width="2.3"/><path d="M29,9.5 l12,12 M41,9.5 l-12,12" stroke="#222" stroke-width="3.3" fill="none"/></svg><div style="position:absolute;left:62px;top:859px;width:25px;height:24px;box-sizing:border-box;border:1px solid #8a8a8a;border-radius:3px;background:linear-gradient(180deg,#f4f4f4,#dcdcdc)"></div><svg width="20" height="20" viewBox="0 0 24 24" style="position:absolute;left:64px;top:861px;overflow:visible;"><circle cx="12" cy="12" r="10" fill="none" stroke="#111" stroke-width="1.300"/><path d="M12,1.500 l10.500,10.500 -10.500,10.500 -10.500,-10.500z" fill="none" stroke="#111" stroke-width="1.300"/><circle cx="12" cy="12" r="5" fill="none" stroke="#111" stroke-width="1.200"/><rect x="7" y="7" width="10" height="10" fill="none" stroke="#111" stroke-width="1"/></svg><div style="position:absolute;left:105px;top:860px;width:184px;height:22px;box-sizing:border-box;border:1px solid #e0e3ea;border-top-color:#abadb3;background:#fff"></div><svg width="22" height="22" viewBox="0 0 24 24" style="position:absolute;left:61px;top:891px;overflow:visible;"><rect x="1.500" y="1.500" width="21" height="21" rx="1" fill="#fff" stroke="#111" stroke-width="1.500"/><path d="M6.800,1.500 v21 M12,1.500 v21 M17.200,1.500 v21 M1.500,6.800 h21 M1.500,12 h21 M1.500,17.200 h21" stroke="#111" stroke-width="1.300"/></svg><div style="position:absolute;left:105px;top:891px;width:184px;height:22px;box-sizing:border-box;border:1px solid #e0e3ea;border-top-color:#abadb3;background:#fff"></div><div style="position:absolute;left:62px;top:922px;width:25px;height:24px;box-sizing:border-box;border:1px solid #8a8a8a;border-radius:3px;background:linear-gradient(180deg,#f4f4f4,#dcdcdc)"></div><svg width="20" height="20" viewBox="0 0 24 24" style="position:absolute;left:64px;top:924px;overflow:visible;"><ellipse cx="9" cy="7.500" rx="3.300" ry="5.500" transform="rotate(-28 9 7.500)" fill="#fff" stroke="#000" stroke-width="2"/><path d="M4,10 C5,15 8,21 14,22 C19,22.500 21,18 18,14 C16,11.500 13,11 11,12" fill="#fff" stroke="#000" stroke-width="2"/><circle cx="14.500" cy="17.500" r="2" fill="#fff" stroke="#000" stroke-width="1.600"/><path d="M3,14 l-1.500,1 M18,4 l1.500,-1.500 M20,8 l1.500,-0.500 M15,2.500 l0.500,-1.500" stroke="#000" stroke-width="1"/></svg><div style="position:absolute;left:105px;top:922px;width:184px;height:25px;box-sizing:border-box;border:1px solid #707070;border-radius:3px;background:linear-gradient(180deg,#f3f3f3 0%,#ebebeb 48%,#dddddd 52%,#d0d0d0 100%);box-shadow:inset 0 0 0 1px rgba(255,255,255,.8)"></div><span style="position:absolute;left:117px;top:924.5px;font:normal 12.9px/20px 'Liberation Sans',sans-serif;color:#000;white-space:nowrap;letter-spacing:-0.061px;">In Zwischenablage kopieren</span><div style="position:absolute;left:105px;top:957px;width:184px;height:26px;box-sizing:border-box;border:1px solid #707070;border-radius:3px;background:linear-gradient(180deg,#f3f3f3 0%,#ebebeb 48%,#dddddd 52%,#d0d0d0 100%);box-shadow:inset 0 0 0 1px rgba(255,255,255,.8)"></div><svg width="20" height="20" viewBox="0 0 24 24" style="position:absolute;left:133px;top:960px;overflow:visible;"><path d="M12,1 v22 M1,12 h22" stroke="#8a8a8a" stroke-width="1.200"/><circle cx="12" cy="12" r="4" fill="none" stroke="#b98a8a" stroke-width="1.300"/></svg><span style="position:absolute;left:158px;top:960px;font:normal 12.9px/20px 'Liberation Sans',sans-serif;color:#000;white-space:nowrap;letter-spacing:0.006px;">Aufnahme starten</span><div style="position:absolute;left:306px;top:186px;width:1282px;height:813px;box-sizing:border-box;border:1px solid #a0a0a0;background:#fff"></div><svg id="map" width="1280" height="811" viewBox="307 187 1280 811" style="position:absolute;left:307px;top:187px">
<defs><pattern id="trees" width="256" height="231" patternUnits="userSpaceOnUse" patternTransform="translate(307 187)"><path d="M11.8,9.5 a1.6,2.1 0 1 1 0.1,0 M11.8,9.5 v2.8 M15.4,10.0 a1.6,2.1 0 1 1 0.1,0 M15.4,10.0 v2.8 M44.8,8.5 a1.6,2.1 0 1 1 0.1,0 M44.8,8.5 v2.8 M48.4,9.0 a1.6,2.1 0 1 1 0.1,0 M48.4,9.0 v2.8 M71.6,12.6 a1.6,2.1 0 1 1 0.1,0 M71.6,12.6 v2.8 M75.19999999999999,13.1 a1.6,2.1 0 1 1 0.1,0 M75.19999999999999,13.1 v2.8 M93.4,14.5 a1.6,2.1 0 1 1 0.1,0 M93.4,14.5 v2.8 M97.0,15.0 a1.6,2.1 0 1 1 0.1,0 M97.0,15.0 v2.8 M121.5,13.5 a1.6,2.1 0 1 1 0.1,0 M121.5,13.5 v2.8 M125.1,14.0 a1.6,2.1 0 1 1 0.1,0 M125.1,14.0 v2.8 M150.4,8.7 a1.6,2.1 0 1 1 0.1,0 M150.4,8.7 v2.8 M154.0,9.2 a1.6,2.1 0 1 1 0.1,0 M154.0,9.2 v2.8 M183.8,19.0 a1.6,2.1 0 1 1 0.1,0 M183.8,19.0 v2.8 M187.4,19.5 a1.6,2.1 0 1 1 0.1,0 M187.4,19.5 v2.8 M208.1,10.6 a1.6,2.1 0 1 1 0.1,0 M208.1,10.6 v2.8 M211.7,11.1 a1.6,2.1 0 1 1 0.1,0 M211.7,11.1 v2.8 M243.6,20.7 a1.6,2.1 0 1 1 0.1,0 M243.6,20.7 v2.8 M247.2,21.2 a1.6,2.1 0 1 1 0.1,0 M247.2,21.2 v2.8 M29.5,41.9 a1.6,2.1 0 1 1 0.1,0 M29.5,41.9 v2.8 M33.1,42.4 a1.6,2.1 0 1 1 0.1,0 M33.1,42.4 v2.8 M63.6,37.0 a1.6,2.1 0 1 1 0.1,0 M63.6,37.0 v2.8 M67.2,37.5 a1.6,2.1 0 1 1 0.1,0 M67.2,37.5 v2.8 M90.4,40.4 a1.6,2.1 0 1 1 0.1,0 M90.4,40.4 v2.8 M94.0,40.9 a1.6,2.1 0 1 1 0.1,0 M94.0,40.9 v2.8 M108.8,38.0 a1.6,2.1 0 1 1 0.1,0 M108.8,38.0 v2.8 M112.39999999999999,38.5 a1.6,2.1 0 1 1 0.1,0 M112.39999999999999,38.5 v2.8 M139.5,47.7 a1.6,2.1 0 1 1 0.1,0 M139.5,47.7 v2.8 M143.1,48.2 a1.6,2.1 0 1 1 0.1,0 M143.1,48.2 v2.8 M166.2,44.5 a1.6,2.1 0 1 1 0.1,0 M166.2,44.5 v2.8 M169.79999999999998,45.0 a1.6,2.1 0 1 1 0.1,0 M169.79999999999998,45.0 v2.8 M201.1,41.5 a1.6,2.1 0 1 1 0.1,0 M201.1,41.5 v2.8 M204.7,42.0 a1.6,2.1 0 1 1 0.1,0 M204.7,42.0 v2.8 M228.2,37.2 a1.6,2.1 0 1 1 0.1,0 M228.2,37.2 v2.8 M231.79999999999998,37.7 a1.6,2.1 0 1 1 0.1,0 M231.79999999999998,37.7 v2.8 M249.8,39.2 a1.6,2.1 0 1 1 0.1,0 M249.8,39.2 v2.8 M253.4,39.7 a1.6,2.1 0 1 1 0.1,0 M253.4,39.7 v2.8 M16.7,71.2 a1.6,2.1 0 1 1 0.1,0 M16.7,71.2 v2.8 M20.3,71.7 a1.6,2.1 0 1 1 0.1,0 M20.3,71.7 v2.8 M40.1,73.4 a1.6,2.1 0 1 1 0.1,0 M40.1,73.4 v2.8 M43.7,73.9 a1.6,2.1 0 1 1 0.1,0 M43.7,73.9 v2.8 M70.5,69.4 a1.6,2.1 0 1 1 0.1,0 M70.5,69.4 v2.8 M74.1,69.9 a1.6,2.1 0 1 1 0.1,0 M74.1,69.9 v2.8 M103.7,75.0 a1.6,2.1 0 1 1 0.1,0 M103.7,75.0 v2.8 M107.3,75.5 a1.6,2.1 0 1 1 0.1,0 M107.3,75.5 v2.8 M124.4,73.2 a1.6,2.1 0 1 1 0.1,0 M124.4,73.2 v2.8 M128.0,73.7 a1.6,2.1 0 1 1 0.1,0 M128.0,73.7 v2.8 M156.8,77.4 a1.6,2.1 0 1 1 0.1,0 M156.8,77.4 v2.8 M160.4,77.9 a1.6,2.1 0 1 1 0.1,0 M160.4,77.9 v2.8 M188.1,69.2 a1.6,2.1 0 1 1 0.1,0 M188.1,69.2 v2.8 M191.7,69.7 a1.6,2.1 0 1 1 0.1,0 M191.7,69.7 v2.8 M220.1,66.8 a1.6,2.1 0 1 1 0.1,0 M220.1,66.8 v2.8 M223.7,67.3 a1.6,2.1 0 1 1 0.1,0 M223.7,67.3 v2.8 M240.6,75.8 a1.6,2.1 0 1 1 0.1,0 M240.6,75.8 v2.8 M244.2,76.3 a1.6,2.1 0 1 1 0.1,0 M244.2,76.3 v2.8 M23.6,100.9 a1.6,2.1 0 1 1 0.1,0 M23.6,100.9 v2.8 M27.200000000000003,101.4 a1.6,2.1 0 1 1 0.1,0 M27.200000000000003,101.4 v2.8 M50.4,103.4 a1.6,2.1 0 1 1 0.1,0 M50.4,103.4 v2.8 M54.0,103.9 a1.6,2.1 0 1 1 0.1,0 M54.0,103.9 v2.8 M89.0,102.1 a1.6,2.1 0 1 1 0.1,0 M89.0,102.1 v2.8 M92.6,102.6 a1.6,2.1 0 1 1 0.1,0 M92.6,102.6 v2.8 M119.0,98.5 a1.6,2.1 0 1 1 0.1,0 M119.0,98.5 v2.8 M122.6,99.0 a1.6,2.1 0 1 1 0.1,0 M122.6,99.0 v2.8 M145.0,102.4 a1.6,2.1 0 1 1 0.1,0 M145.0,102.4 v2.8 M148.6,102.9 a1.6,2.1 0 1 1 0.1,0 M148.6,102.9 v2.8 M171.8,100.4 a1.6,2.1 0 1 1 0.1,0 M171.8,100.4 v2.8 M175.4,100.9 a1.6,2.1 0 1 1 0.1,0 M175.4,100.9 v2.8 M203.9,107.3 a1.6,2.1 0 1 1 0.1,0 M203.9,107.3 v2.8 M207.5,107.8 a1.6,2.1 0 1 1 0.1,0 M207.5,107.8 v2.8 M227.2,103.4 a1.6,2.1 0 1 1 0.1,0 M227.2,103.4 v2.8 M230.79999999999998,103.9 a1.6,2.1 0 1 1 0.1,0 M230.79999999999998,103.9 v2.8 M249.8,103.9 a1.6,2.1 0 1 1 0.1,0 M249.8,103.9 v2.8 M253.4,104.4 a1.6,2.1 0 1 1 0.1,0 M253.4,104.4 v2.8 M16.3,136.8 a1.6,2.1 0 1 1 0.1,0 M16.3,136.8 v2.8 M19.900000000000002,137.3 a1.6,2.1 0 1 1 0.1,0 M19.900000000000002,137.3 v2.8 M47.2,126.9 a1.6,2.1 0 1 1 0.1,0 M47.2,126.9 v2.8 M50.800000000000004,127.4 a1.6,2.1 0 1 1 0.1,0 M50.800000000000004,127.4 v2.8 M69.5,132.3 a1.6,2.1 0 1 1 0.1,0 M69.5,132.3 v2.8 M73.1,132.8 a1.6,2.1 0 1 1 0.1,0 M73.1,132.8 v2.8 M92.9,129.4 a1.6,2.1 0 1 1 0.1,0 M92.9,129.4 v2.8 M96.5,129.9 a1.6,2.1 0 1 1 0.1,0 M96.5,129.9 v2.8 M123.4,124.6 a1.6,2.1 0 1 1 0.1,0 M123.4,124.6 v2.8 M127.0,125.1 a1.6,2.1 0 1 1 0.1,0 M127.0,125.1 v2.8 M150.3,133.7 a1.6,2.1 0 1 1 0.1,0 M150.3,133.7 v2.8 M153.9,134.2 a1.6,2.1 0 1 1 0.1,0 M153.9,134.2 v2.8 M179.7,126.4 a1.6,2.1 0 1 1 0.1,0 M179.7,126.4 v2.8 M183.29999999999998,126.9 a1.6,2.1 0 1 1 0.1,0 M183.29999999999998,126.9 v2.8 M211.8,135.1 a1.6,2.1 0 1 1 0.1,0 M211.8,135.1 v2.8 M215.4,135.6 a1.6,2.1 0 1 1 0.1,0 M215.4,135.6 v2.8 M235.9,129.2 a1.6,2.1 0 1 1 0.1,0 M235.9,129.2 v2.8 M239.5,129.7 a1.6,2.1 0 1 1 0.1,0 M239.5,129.7 v2.8 M29.1,164.2 a1.6,2.1 0 1 1 0.1,0 M29.1,164.2 v2.8 M32.7,164.7 a1.6,2.1 0 1 1 0.1,0 M32.7,164.7 v2.8 M61.4,163.9 a1.6,2.1 0 1 1 0.1,0 M61.4,163.9 v2.8 M65.0,164.4 a1.6,2.1 0 1 1 0.1,0 M65.0,164.4 v2.8 M82.2,157.6 a1.6,2.1 0 1 1 0.1,0 M82.2,157.6 v2.8 M85.8,158.1 a1.6,2.1 0 1 1 0.1,0 M85.8,158.1 v2.8 M111.8,164.2 a1.6,2.1 0 1 1 0.1,0 M111.8,164.2 v2.8 M115.39999999999999,164.7 a1.6,2.1 0 1 1 0.1,0 M115.39999999999999,164.7 v2.8 M148.6,153.9 a1.6,2.1 0 1 1 0.1,0 M148.6,153.9 v2.8 M152.2,154.4 a1.6,2.1 0 1 1 0.1,0 M152.2,154.4 v2.8 M166.1,155.1 a1.6,2.1 0 1 1 0.1,0 M166.1,155.1 v2.8 M169.7,155.6 a1.6,2.1 0 1 1 0.1,0 M169.7,155.6 v2.8 M195.4,158.6 a1.6,2.1 0 1 1 0.1,0 M195.4,158.6 v2.8 M199.0,159.1 a1.6,2.1 0 1 1 0.1,0 M199.0,159.1 v2.8 M228.8,155.5 a1.6,2.1 0 1 1 0.1,0 M228.8,155.5 v2.8 M232.4,156.0 a1.6,2.1 0 1 1 0.1,0 M232.4,156.0 v2.8 M249.1,157.7 a1.6,2.1 0 1 1 0.1,0 M249.1,157.7 v2.8 M252.7,158.2 a1.6,2.1 0 1 1 0.1,0 M252.7,158.2 v2.8 M12.4,188.6 a1.6,2.1 0 1 1 0.1,0 M12.4,188.6 v2.8 M16.0,189.1 a1.6,2.1 0 1 1 0.1,0 M16.0,189.1 v2.8 M49.0,190.4 a1.6,2.1 0 1 1 0.1,0 M49.0,190.4 v2.8 M52.6,190.9 a1.6,2.1 0 1 1 0.1,0 M52.6,190.9 v2.8 M71.3,189.3 a1.6,2.1 0 1 1 0.1,0 M71.3,189.3 v2.8 M74.89999999999999,189.8 a1.6,2.1 0 1 1 0.1,0 M74.89999999999999,189.8 v2.8 M102.0,181.4 a1.6,2.1 0 1 1 0.1,0 M102.0,181.4 v2.8 M105.6,181.9 a1.6,2.1 0 1 1 0.1,0 M105.6,181.9 v2.8 M133.6,191.6 a1.6,2.1 0 1 1 0.1,0 M133.6,191.6 v2.8 M137.2,192.1 a1.6,2.1 0 1 1 0.1,0 M137.2,192.1 v2.8 M161.7,191.9 a1.6,2.1 0 1 1 0.1,0 M161.7,191.9 v2.8 M165.29999999999998,192.4 a1.6,2.1 0 1 1 0.1,0 M165.29999999999998,192.4 v2.8 M183.4,186.3 a1.6,2.1 0 1 1 0.1,0 M183.4,186.3 v2.8 M187.0,186.8 a1.6,2.1 0 1 1 0.1,0 M187.0,186.8 v2.8 M207.8,189.6 a1.6,2.1 0 1 1 0.1,0 M207.8,189.6 v2.8 M211.4,190.1 a1.6,2.1 0 1 1 0.1,0 M211.4,190.1 v2.8 M235.6,181.6 a1.6,2.1 0 1 1 0.1,0 M235.6,181.6 v2.8 M239.2,182.1 a1.6,2.1 0 1 1 0.1,0 M239.2,182.1 v2.8 M24.4,211.8 a1.6,2.1 0 1 1 0.1,0 M24.4,211.8 v2.8 M28.0,212.3 a1.6,2.1 0 1 1 0.1,0 M28.0,212.3 v2.8 M54.6,210.3 a1.6,2.1 0 1 1 0.1,0 M54.6,210.3 v2.8 M58.2,210.8 a1.6,2.1 0 1 1 0.1,0 M58.2,210.8 v2.8 M78.3,211.7 a1.6,2.1 0 1 1 0.1,0 M78.3,211.7 v2.8 M81.89999999999999,212.2 a1.6,2.1 0 1 1 0.1,0 M81.89999999999999,212.2 v2.8 M108.2,214.7 a1.6,2.1 0 1 1 0.1,0 M108.2,214.7 v2.8 M111.8,215.2 a1.6,2.1 0 1 1 0.1,0 M111.8,215.2 v2.8 M135.6,221.8 a1.6,2.1 0 1 1 0.1,0 M135.6,221.8 v2.8 M139.2,222.3 a1.6,2.1 0 1 1 0.1,0 M139.2,222.3 v2.8 M172.3,211.6 a1.6,2.1 0 1 1 0.1,0 M172.3,211.6 v2.8 M175.9,212.1 a1.6,2.1 0 1 1 0.1,0 M175.9,212.1 v2.8 M195.6,214.4 a1.6,2.1 0 1 1 0.1,0 M195.6,214.4 v2.8 M199.2,214.9 a1.6,2.1 0 1 1 0.1,0 M199.2,214.9 v2.8 M225.7,211.3 a1.6,2.1 0 1 1 0.1,0 M225.7,211.3 v2.8 M229.29999999999998,211.8 a1.6,2.1 0 1 1 0.1,0 M229.29999999999998,211.8 v2.8 M4.9,223.5 a1.6,2.1 0 1 1 0.1,0 M4.9,223.5 v2.8 M8.5,224.0 a1.6,2.1 0 1 1 0.1,0 M8.5,224.0 v2.8" fill="none" stroke="#96c08a" stroke-width="0.9" stroke-linecap="round"/></pattern></defs>
<rect x="307" y="187" width="1280" height="811" fill="#add19e"/>
<rect x="307" y="187" width="1280" height="811" fill="url(#trees)"/>
<polygon points="1307,362 1342,363 1344,380 1332,433 1298,465 1248,435 1287,377" fill="#cdebb0"/>
<polygon points="513,966 718,912 748,975 700,985 647,998 513,998" fill="#cdebb0"/>
<polygon points="1587,793 1550,852 1562,868 1575,876 1587,884" fill="#f2efd9"/>
<path d="M1552,856 L1587,822" stroke="#e0b070" stroke-width="1" fill="none"/>
<ellipse cx="1523" cy="902" rx="9" ry="5.5" fill="#aad3df"/>
<path d="M978,228 L1000,238 L1062,264 L1110,288 L1302,358 L1344,363 L1407,347 L1450,340 L1507,317 L1533,313 L1587,316" stroke="#b9d8d6" stroke-width="3" fill="none" stroke-linecap="round" stroke-linejoin="round"/>
<path d="M1307,363 L1277,380 L1253,420 L1200,473" stroke="#b9d8d6" stroke-width="3" fill="none" stroke-linecap="round" stroke-linejoin="round"/>
<path d="M1344,365 L1346,385 L1340,410 L1333,433" stroke="#b9d8d6" stroke-width="3" fill="none" stroke-linecap="round" stroke-linejoin="round"/>
<path d="M545,781 L530,800 L490,850 L447,893 L430,930 L400,970 L363,998" stroke="#b9d8d6" stroke-width="3" fill="none" stroke-linecap="round" stroke-linejoin="round"/>
<path d="M603,840 L560,863 L500,910 L417,957 L398,972" stroke="#b9d8d6" stroke-width="3" fill="none" stroke-linecap="round" stroke-linejoin="round"/>
<path d="M647,999 C690,988 720,982 750,978 C790,973 820,970 850,970 C890,970 910,970 940,972 L1040,980 L1140,987 L1240,990 C1270,990 1290,990 1307,988 C1330,986 1340,984 1357,978 L1423,950 C1450,938 1470,930 1490,925 C1510,920 1525,919 1540,919 C1560,919 1575,921 1590,924" stroke="#fff" stroke-width="13" fill="none"/>
<path d="M990,984 L990,998" stroke="#fff" stroke-width="3" fill="none"/>
<path d="M1017,968 L1100,973 L1200,979 L1290,981 C1315,980 1330,975 1345,966 C1370,948 1390,940 1407,933 C1430,920 1450,906 1473,897 C1500,886 1520,879 1540,877 C1560,876 1575,879 1587,883" stroke="#4a6fa5" stroke-width="1" stroke-dasharray="2 2" fill="none"/>
<path d="M647,997 C700,984 730,978 750,976" stroke="#4a6fa5" stroke-width="1" stroke-dasharray="2 2" fill="none"/>
<path d="M535,188 L378,343 L307,420" stroke="#e8e0c0" stroke-width="2.4" fill="none"/><path d="M535,188 L378,343 L307,420" stroke="#c7b286" stroke-width="1.3" stroke-dasharray="5 3" fill="none"/>
<path d="M307,315 L378,343" stroke="#e8e0c0" stroke-width="2.4" fill="none"/><path d="M307,315 L378,343" stroke="#c7b286" stroke-width="1.3" stroke-dasharray="5 3" fill="none"/>
<path d="M1001,188 L962,243" stroke="#d9e6c3" stroke-width="2.6" fill="none"/><path d="M1001,188 L962,243" stroke="#c2a77c" stroke-width="1.1" stroke-dasharray="3.5 2.5" fill="none"/>
<path d="M1312,470 L1293,513 L1270,540" stroke="#d9e6c3" stroke-width="2.6" fill="none"/><path d="M1312,470 L1293,513 L1270,540" stroke="#c2a77c" stroke-width="1.1" stroke-dasharray="3.5 2.5" fill="none"/>
<path d="M1413,188 L1480,208 L1463,230" stroke="#d9e6c3" stroke-width="2.6" fill="none"/><path d="M1413,188 L1480,208 L1463,230" stroke="#c2a77c" stroke-width="1.1" stroke-dasharray="3.5 2.5" fill="none"/>
<path d="M1493,188 L1480,208" stroke="#d9e6c3" stroke-width="2.6" fill="none"/><path d="M1493,188 L1480,208" stroke="#c2a77c" stroke-width="1.1" stroke-dasharray="3.5 2.5" fill="none"/>
<path d="M1563,188 L1566,220 L1572,250 L1587,215" stroke="#d9e6c3" stroke-width="2.6" fill="none"/><path d="M1563,188 L1566,220 L1572,250 L1587,215" stroke="#c2a77c" stroke-width="1.1" stroke-dasharray="3.5 2.5" fill="none"/>
<path d="M1153,402 L1188,389" stroke="#d9e6c3" stroke-width="2.6" fill="none"/><path d="M1153,402 L1188,389" stroke="#c2a77c" stroke-width="1.1" stroke-dasharray="3.5 2.5" fill="none"/>
<path d="M1273,452 L1290,487" stroke="#d9e6c3" stroke-width="2.6" fill="none"/><path d="M1273,452 L1290,487" stroke="#c2a77c" stroke-width="1.1" stroke-dasharray="3.5 2.5" fill="none"/>
<path d="M1040,290 L1020,330 L1003,367" stroke="#e6dfc8" stroke-width="1.9" stroke-dasharray="2.5 2" fill="none"/>
<path d="M703,817 L760,880 L847,963" stroke="#e6dfc8" stroke-width="1.9" stroke-dasharray="2.5 2" fill="none"/>
<path d="M698,819 L752,815 L812,803 L867,786 L940,760 L1127,700 L1210,662" stroke="#e6dfc8" stroke-width="1.9" stroke-dasharray="2.5 2" fill="none"/>
<g font-family="'Liberation Sans',sans-serif" font-size="8.5">
<text transform="translate(468.5,267) rotate(-45)" fill="#555" stroke="#cfe6c4" stroke-width="2" paint-order="stroke" font-size="7.6">Eselsstraße</text>
<text transform="translate(1119,301) rotate(20)" fill="#6f93bd" font-style="italic" font-size="7.6" stroke="#d3e6cf" stroke-width="1.6" paint-order="stroke">Reichenbach</text>
<text x="1561" y="325" fill="#6f93bd" font-style="italic" font-size="7.6" stroke="#d3e6cf" stroke-width="1.6" paint-order="stroke">Reichen</text>
<text x="1284" y="419" fill="#5a6b52" font-style="italic" font-size="7.2">Lichtung</text>
<text transform="translate(449.5,894) rotate(-56)" fill="#6f93bd" font-style="italic" font-size="6.9" stroke="#d3e6cf" stroke-width="1.6" paint-order="stroke">Vorderer Rotenbach</text>
</g>
<path d="M1187,362 h6 v3 h-6 z M1187,365 l-0.5,5 M1193,365 l0.5,5 M1187,367.5 h6" stroke="#555" stroke-width="0.9" fill="#777"/>
<path d="M1329,416 h6 v3 h-6 z M1329,419 l-0.5,5 M1335,419 l0.5,5 M1329,421.5 h6" stroke="#555" stroke-width="0.9" fill="#777"/>
<polygon points="1103,480 1117,524 1132,574 1125,699 1187,749 1187,761 1172,774 1022,813 968,784 924,786 916,774 960,740 936,545" fill="#c53b3a" stroke="#3a1010" stroke-width="1.3"/>
<polygon points="785,333 807,327 883,333 940,352 977,367 1022,390 1060,428 1070,455 1071,480 960,524 900,549 864,563 784,611 670,696 672,729 667,744 691,815 600,831 543,834 533,824 532,814 577,767 613,721 653,661 658,626 547,539 532,524 531,505 547,488 565,487 585,489 602,502 620,524 650,557 687,589 710,593 737,574 742,557 724,524 640,467 632,448 633,430 648,412 672,406 730,417 755,412 770,393 777,350" fill="#dcb73e" stroke="#1a1608" stroke-width="1.4"/>
<polygon points="670,696 784,611 864,563 929,548 939,545 955,550 985,568 1003,601 1006,640 998,691 980,729 965,743 916,774 900,770 867,781 812,798 752,810 698,814 686,767 667,744 672,729" fill="#b6d9a8"/>
<polyline points="667,744 672,729 670,696 784,611 864,563 929,548 939,545 955,550 985,568 1003,601 1006,640 998,691 980,729 965,743 916,774" fill="none" stroke="#111" stroke-width="1"/>
<polygon points="674,697 785,615 854,578 927,549 955,552 983,569 1001,601 1004,640 996,691 978,728 955,747 917,763 868,781 760,790 700,785 692,772 688,765 707,750 690,730 683,723" fill="#75a274" stroke="#111" stroke-width="1.2"/>
<circle cx="691.5" cy="742" r="15" fill="#8cc16a" stroke="#111" stroke-width="1"/>
<polygon points="790,616 804,618 787,680 779,710 752,715 759,680 766,657 778,653" fill="none" stroke="#111" stroke-width="5.6" stroke-linejoin="miter"/><polygon points="790,616 804,618 787,680 779,710 752,715 759,680 766,657 778,653" fill="none" stroke="#b6d9a8" stroke-width="3.6" stroke-linejoin="miter"/><polygon points="790,616 804,618 787,680 779,710 752,715 759,680 766,657 778,653" fill="#cbb999" stroke="#111" stroke-width="1"/>
<polygon points="851,587 871,581 859,622 853,642 832,664 825,658" fill="none" stroke="#111" stroke-width="5.6" stroke-linejoin="miter"/><polygon points="851,587 871,581 859,622 853,642 832,664 825,658" fill="none" stroke="#b6d9a8" stroke-width="3.6" stroke-linejoin="miter"/><polygon points="851,587 871,581 859,622 853,642 832,664 825,658" fill="#cbb999" stroke="#111" stroke-width="1"/>
<polygon points="692,777 782,714 806,700 812,691 822,686 850,658 906,598 923,562 941,563 924,620 939,626 973,574 986,590 947,645 992,645 990,663 958,662 926,690 976,708 969,726 909,705 882,734 931,749 917,761 853,741 826,765 868,779 841,788 812,796 752,808 703,812" fill="none" stroke="#111" stroke-width="5.6" stroke-linejoin="miter"/><polygon points="692,777 782,714 806,700 812,691 822,686 850,658 906,598 923,562 941,563 924,620 939,626 973,574 986,590 947,645 992,645 990,663 958,662 926,690 976,708 969,726 909,705 882,734 931,749 917,761 853,741 826,765 868,779 841,788 812,796 752,808 703,812" fill="none" stroke="#b6d9a8" stroke-width="3.6" stroke-linejoin="miter"/><polygon points="692,777 782,714 806,700 812,691 822,686 850,658 906,598 923,562 941,563 924,620 939,626 973,574 986,590 947,645 992,645 990,663 958,662 926,690 976,708 969,726 909,705 882,734 931,749 917,761 853,741 826,765 868,779 841,788 812,796 752,808 703,812" fill="#cbb999" stroke="#111" stroke-width="1"/>
<polygon points="850,663 861,667 870,675 883,677 898,688 901,697 899,705 889,716 858,719 848,708 848,690 842,680 842,671" fill="none" stroke="#111" stroke-width="5.6" stroke-linejoin="miter"/><polygon points="850,663 861,667 870,675 883,677 898,688 901,697 899,705 889,716 858,719 848,708 848,690 842,680 842,671" fill="none" stroke="#b6d9a8" stroke-width="3.6" stroke-linejoin="miter"/><polygon points="850,663 861,667 870,675 883,677 898,688 901,697 899,705 889,716 858,719 848,708 848,690 842,680 842,671" fill="#9b5a2d" stroke="#111" stroke-width="1"/>
<polygon points="724,796 735,790 774,792 783,798 782,804 755,809 728,811" fill="none" stroke="#111" stroke-width="5.6" stroke-linejoin="miter"/><polygon points="724,796 735,790 774,792 783,798 782,804 755,809 728,811" fill="none" stroke="#b6d9a8" stroke-width="3.6" stroke-linejoin="miter"/><polygon points="724,796 735,790 774,792 783,798 782,804 755,809 728,811" fill="#b27455" stroke="#111" stroke-width="1"/>
<circle cx="819" cy="703" r="13" fill="#b6d9a8" stroke="#111" stroke-width="1"/><circle cx="819" cy="703" r="10" fill="#8495a4" stroke="#111" stroke-width="1"/>
<polygon points="1103,474 977,524 940,540 900,558 856,572 800,540 660,682 532,811 543,836 613,836 777,817 883,792 940,788 1050,782 1118,759 1127,697 1135,574 1122,524" fill="none" stroke="#14781d" stroke-width="4.6" stroke-linejoin="miter"/>
<polygon points="1476,757 1227,868 1002,968 940,965.5 853,965 750,974 718,910 493,973 480,947 340,781 430,616 413,435 850,208.5 1062,291.5 1073,266 1097,287 1106,285 1302,356 1344,361 1313,437 1285,524 1267,545" fill="none" stroke="#0b5f12" stroke-width="7" stroke-linejoin="miter"/>
<polyline points="1163,434 1048,381 1000,369 983,383 963,410 940,453 915,497 913,524 911,569 840,645 827,659 793,697 732,733 711,746 686,767 698,814 752,810 812,798 867,781 900,770 940,755 1331,606.5" fill="none" stroke="#000" stroke-width="4.4" stroke-linejoin="miter"/>
<polyline points="808.5,190.3 940,243 1073,295 1097,322 1163,433 1182,460 1247,524 1388,660 1487,754 1513,791 1543,844 1548,868 1549,921" fill="none" stroke="#000" stroke-width="8" stroke-linejoin="round"/>
<rect x="981" y="970" width="33" height="12" rx="2" fill="#f1f1ea" stroke="#c8c8c0" stroke-width="0.6"/><text x="997.5" y="979.5" text-anchor="middle" font-family="'Liberation Sans',sans-serif" font-size="8.5" fill="#333">K 4325</text>
<rect x="1390" y="950" width="33" height="13" rx="2" fill="#f1f1ea" stroke="#c8c8c0" stroke-width="0.6"/><text x="1406.5" y="960.5" text-anchor="middle" font-family="'Liberation Sans',sans-serif" font-size="8.5" fill="#333">K 4325</text>
<rect x="812" y="894.5" width="119" height="42" fill="#ffff00" stroke="#000" stroke-width="2"/>
<text x="870" y="922" text-anchor="middle" font-family="'Liberation Sans',sans-serif" font-weight="bold" font-size="20" fill="#000">Bild 11</text>
</svg><div style="position:absolute;left:1593px;top:188px;width:327px;height:31px;background:#d9d9d9;border:1px solid #d0d0d0;box-sizing:border-box"></div><span style="position:absolute;left:1598px;top:195px;font:normal 15.2px/20px 'Liberation Sans',sans-serif;color:#000;white-space:nowrap;letter-spacing:-0.107px;">Browser</span><svg width="48" height="31" viewBox="0 0 48 31" style="position:absolute;left:1872px;top:188px"><path d="M8,10.5 h8.5 v7 h-2 M3.5,14.0 h9 v8 h-9 z M3.5,15.7 h9" fill="none" stroke="#222" stroke-width="2.3"/><path d="M29,9.5 l12,12 M41,9.5 l-12,12" stroke="#222" stroke-width="3.3" fill="none"/></svg><svg width="18" height="18" viewBox="0 0 24 24" style="position:absolute;left:1596px;top:225px;overflow:visible;"><rect x="3" y="3.500" width="15" height="14" rx="1" fill="#f7f7f7" stroke="#888" stroke-width="1.200"/><circle cx="18" cy="18.500" r="3.800" fill="#6ab06a" stroke="#3c7a3a" stroke-width="0.800"/><path d="M18,16.300 v4.400 M15.800,18.500 h4.400" stroke="#fff" stroke-width="1.300"/></svg><svg width="18" height="18" viewBox="0 0 24 24" style="position:absolute;left:1620px;top:225px;overflow:visible;"><path d="M3,10.5 A9,9 0 0 1 18.5,5.5 L21,3 V11 H13 L15.8,8.2 A5.2,5.2 0 0 0 7,10.5z" fill="#4f8fd6" stroke="#2a62a6" stroke-width="0.8"/><path d="M21,13.5 A9,9 0 0 1 5.5,18.5 L3,21 V13 H11 L8.2,15.8 A5.2,5.2 0 0 0 17,13.5z" fill="#4f8fd6" stroke="#2a62a6" stroke-width="0.8"/></svg><svg width="18" height="18" viewBox="0 0 24 24" style="position:absolute;left:1643px;top:225px;overflow:visible;"><path d="M2,3 h20 l-7.500,8.500 v10 l-5,-2.500 v-7.500z" fill="#6f9fd6" stroke="#3f6596" stroke-width="0.900"/><path d="M2,3 h20 l-1.800,2 h-16.400z" fill="#e8c33f" stroke="#b89b1d" stroke-width="0.800"/></svg><svg width="18" height="18" viewBox="0 0 24 24" style="position:absolute;left:1667px;top:225px;overflow:visible;"><rect x="3" y="5" width="6" height="5" fill="#e8c33f" stroke="#8f7d14" stroke-width="0.800"/><rect x="3" y="14" width="6" height="5" fill="#e8c33f" stroke="#8f7d14" stroke-width="0.800"/><path d="M6,10 v4" stroke="#555" stroke-width="1"/><path d="M16,21 v-10 h-3.500 l5,-7.500 5,7.500 h-3.500 v10z" fill="#4f86c6" stroke="#2a4f86" stroke-width="0.900"/><path d="M11,2 v19" stroke="#777" stroke-width="0.800" stroke-dasharray="1.500 1.500"/></svg><svg width="18" height="18" viewBox="0 0 24 24" style="position:absolute;left:1689px;top:225px;overflow:visible;"><circle cx="12" cy="12" r="8.500" fill="#5d87cb" stroke="#34598c" stroke-width="0.900"/><text x="12" y="17" text-anchor="middle" font-family="Liberation Serif,serif" font-style="italic" font-weight="bold" font-size="13" fill="#fff">i</text></svg><div style="position:absolute;left:1593px;top:247px;width:326px;height:752px;background:#fff;border:1px solid #a3a3a3;box-sizing:border-box"></div><div id="btree" style="position:absolute;left:1594px;top:248px;width:304px;height:730px;overflow:hidden"><div style="position:absolute;left:101px;top:25.5px;width:220px;height:22px;box-sizing:border-box;border:1px solid #dcdcdc;border-radius:3px;background:linear-gradient(180deg,#fafafa,#ececec)"></div><svg width="10" height="10" viewBox="0 0 10 10" style="position:absolute;left:58px;top:5.5px"><path d="M8.5,2.5 L8.5,8.500 L2.500,8.500z" fill="#404040" stroke="#262626" stroke-width="1"/></svg><svg width="19" height="18" viewBox="0 0 19 18" style="position:absolute;left:78px;top:2.0px"><path d="M1,1 h7 l1.5,2 h8.5 v4 h-17z" fill="#8f8f8f"/><path d="M1,5.500 h5.500 l1.500,2 h10 v9.500 h-17z" fill="#ececec" stroke="#9a9a9a" stroke-width="1"/></svg><span style="position:absolute;left:103px;top:3.0px;font:normal 14.7px/20px 'Liberation Sans',sans-serif;color:#000;white-space:nowrap;letter-spacing:-0.209px;">_QGIS für Pilzfreunde</span><svg width="10" height="12" viewBox="0 0 10 12" style="position:absolute;left:85px;top:30.5px"><path d="M2.5,1.5 L7.5,6 L2.5,10.5z" fill="#fff" stroke="#a0a0a0" stroke-width="1"/></svg><svg width="19" height="16" viewBox="0 0 19 16" style="position:absolute;left:104px;top:28.5px"><path d="M1,1.5 h6.5 l1.5,2 h8.5 v11 h-16.5z" fill="#a9c8ee" stroke="#6d95c9" stroke-width="1"/></svg><span style="position:absolute;left:129px;top:27.0px;font:normal 14.7px/20px 'Liberation Sans',sans-serif;color:#000;white-space:nowrap;letter-spacing:0.206px;">Beide Biotope - Docs</span><svg width="10" height="12" viewBox="0 0 10 12" style="position:absolute;left:85px;top:54.5px"><path d="M2.5,1.5 L7.5,6 L2.5,10.5z" fill="#fff" stroke="#a0a0a0" stroke-width="1"/></svg><svg width="19" height="16" viewBox="0 0 19 16" style="position:absolute;left:104px;top:52.5px"><path d="M1,1.5 h6.5 l1.5,2 h8.5 v11 h-16.5z" fill="#e8e8e8" stroke="#8d8d8d" stroke-width="1"/><path d="M3,6.5 h15 l-0.5,8 h-16.5z" fill="#f4f4f4" stroke="#8d8d8d" stroke-width="1"/></svg><span style="position:absolute;left:129px;top:51.0px;font:normal 14.7px/20px 'Liberation Sans',sans-serif;color:#000;white-space:nowrap;letter-spacing:0.247px;">csv-Importe</span><svg width="10" height="12" viewBox="0 0 10 12" style="position:absolute;left:85px;top:78.5px"><path d="M2.5,1.5 L7.5,6 L2.5,10.5z" fill="#fff" stroke="#a0a0a0" stroke-width="1"/></svg><svg width="19" height="16" viewBox="0 0 19 16" style="position:absolute;left:104px;top:76.5px"><path d="M1,1.5 h6.5 l1.5,2 h8.5 v11 h-16.5z" fill="#e8e8e8" stroke="#8d8d8d" stroke-width="1"/><path d="M3,6.5 h15 l-0.5,8 h-16.5z" fill="#f4f4f4" stroke="#8d8d8d" stroke-width="1"/></svg><span style="position:absolute;left:129px;top:75.0px;font:normal 14.7px/20px 'Liberation Sans',sans-serif;color:#000;white-space:nowrap;letter-spacing:0.005px;">Forst - WMS-Dienste</span><svg width="10" height="12" viewBox="0 0 10 12" style="position:absolute;left:85px;top:102.5px"><path d="M2.5,1.5 L7.5,6 L2.5,10.5z" fill="#fff" stroke="#a0a0a0" stroke-width="1"/></svg><svg width="19" height="16" viewBox="0 0 19 16" style="position:absolute;left:104px;top:100.5px"><path d="M1,1.5 h6.5 l1.5,2 h8.5 v11 h-16.5z" fill="#e8e8e8" stroke="#8d8d8d" stroke-width="1"/><path d="M3,6.5 h15 l-0.5,8 h-16.5z" fill="#f4f4f4" stroke="#8d8d8d" stroke-width="1"/></svg><span style="position:absolute;left:129px;top:99.0px;font:normal 14.7px/20px 'Liberation Sans',sans-serif;color:#000;white-space:nowrap;letter-spacing:0.069px;">Forums-Beiträge</span><svg width="10" height="12" viewBox="0 0 10 12" style="position:absolute;left:85px;top:126.5px"><path d="M2.5,1.5 L7.5,6 L2.5,10.5z" fill="#fff" stroke="#a0a0a0" stroke-width="1"/></svg><svg width="19" height="16" viewBox="0 0 19 16" style="position:absolute;left:104px;top:124.5px"><path d="M1,1.5 h6.5 l1.5,2 h8.5 v11 h-16.5z" fill="#e8e8e8" stroke="#8d8d8d" stroke-width="1"/><path d="M3,6.5 h15 l-0.5,8 h-16.5z" fill="#f4f4f4" stroke="#8d8d8d" stroke-width="1"/></svg><span style="position:absolute;left:129px;top:123.0px;font:normal 14.7px/20px 'Liberation Sans',sans-serif;color:#000;white-space:nowrap;letter-spacing:-0.073px;">Fotos</span><svg width="10" height="12" viewBox="0 0 10 12" style="position:absolute;left:85px;top:150.5px"><path d="M2.5,1.5 L7.5,6 L2.5,10.5z" fill="#fff" stroke="#a0a0a0" stroke-width="1"/></svg><svg width="19" height="16" viewBox="0 0 19 16" style="position:absolute;left:104px;top:148.5px"><path d="M1,1.5 h6.5 l1.5,2 h8.5 v11 h-16.5z" fill="#e8e8e8" stroke="#8d8d8d" stroke-width="1"/><path d="M3,6.5 h15 l-0.5,8 h-16.5z" fill="#f4f4f4" stroke="#8d8d8d" stroke-width="1"/></svg><span style="position:absolute;left:129px;top:147.0px;font:normal 14.7px/20px 'Liberation Sans',sans-serif;color:#000;white-space:nowrap;letter-spacing:0.189px;">geopackage</span><svg width="10" height="12" viewBox="0 0 10 12" style="position:absolute;left:85px;top:174.5px"><path d="M2.5,1.5 L7.5,6 L2.5,10.5z" fill="#fff" stroke="#a0a0a0" stroke-width="1"/></svg><svg width="19" height="16" viewBox="0 0 19 16" style="position:absolute;left:104px;top:172.5px"><path d="M1,1.5 h6.5 l1.5,2 h8.5 v11 h-16.5z" fill="#e8e8e8" stroke="#8d8d8d" stroke-width="1"/><path d="M3,6.5 h15 l-0.5,8 h-16.5z" fill="#f4f4f4" stroke="#8d8d8d" stroke-width="1"/></svg><span style="position:absolute;left:129px;top:171.0px;font:normal 14.7px/20px 'Liberation Sans',sans-serif;color:#000;white-space:nowrap;letter-spacing:0.414px;">geotiff_export</span><svg width="10" height="12" viewBox="0 0 10 12" style="position:absolute;left:85px;top:198.5px"><path d="M2.5,1.5 L7.5,6 L2.5,10.5z" fill="#fff" stroke="#a0a0a0" stroke-width="1"/></svg><svg width="19" height="16" viewBox="0 0 19 16" style="position:absolute;left:104px;top:196.5px"><path d="M1,1.5 h6.5 l1.5,2 h8.5 v11 h-16.5z" fill="#e8e8e8" stroke="#8d8d8d" stroke-width="1"/><path d="M3,6.5 h15 l-0.5,8 h-16.5z" fill="#f4f4f4" stroke="#8d8d8d" stroke-width="1"/></svg><span style="position:absolute;left:129px;top:195.0px;font:normal 14.7px/20px 'Liberation Sans',sans-serif;color:#000;white-space:nowrap;letter-spacing:0.249px;">gpx-Exporte</span><svg width="10" height="10" viewBox="0 0 10 10" style="position:absolute;left:84px;top:221.5px"><path d="M8.5,2.5 L8.5,8.500 L2.500,8.500z" fill="#404040" stroke="#262626" stroke-width="1"/></svg><svg width="19" height="18" viewBox="0 0 19 18" style="position:absolute;left:104px;top:218.0px"><path d="M1,1 h7 l1.5,2 h8.5 v4 h-17z" fill="#8f8f8f"/><path d="M1,5.500 h5.500 l1.500,2 h10 v9.500 h-17z" fill="#ececec" stroke="#9a9a9a" stroke-width="1"/></svg><span style="position:absolute;left:129px;top:219.0px;font:normal 14.7px/20px 'Liberation Sans',sans-serif;color:#000;white-space:nowrap;letter-spacing:0.506px;">gpx-Importe</span><svg width="10" height="10" viewBox="0 0 10 10" style="position:absolute;left:108px;top:245.5px"><path d="M8.5,2.5 L8.5,8.500 L2.500,8.500z" fill="#404040" stroke="#262626" stroke-width="1"/></svg><svg width="19" height="18" viewBox="0 0 19 18" style="position:absolute;left:128px;top:242.0px"><path d="M1,1 h7 l1.5,2 h8.5 v4 h-17z" fill="#8f8f8f"/><path d="M1,5.500 h5.500 l1.500,2 h10 v9.500 h-17z" fill="#ececec" stroke="#9a9a9a" stroke-width="1"/></svg><span style="position:absolute;left:153px;top:243.0px;font:normal 14.7px/20px 'Liberation Sans',sans-serif;color:#000;white-space:nowrap;letter-spacing:-0.328px;">WT</span><svg width="22" height="15" viewBox="0 0 22 15" style="position:absolute;left:152px;top:267.5px"><path d="M1.500,4.500 C1.500,1.800 4,1 7,1.800 C9.500,2.500 12.500,2.500 15,1.800 C18,1 20.500,1.800 20.500,4.500 C20.500,7.500 20,10.500 17.800,12.500 C15.800,14 14.500,11.500 11,10.500 C7.500,11.500 6.200,14 4.200,12.500 C2,10.500 1.500,7.500 1.500,4.500z" fill="#cfdcee" stroke="#3f4d60" stroke-width="1.400"/><path d="M3,4.500 C3,3 5,2.600 7,3.200 C9.500,3.900 12.500,3.900 15,3.200 C17,2.600 19,3 19,4.500" fill="none" stroke="#eef3fa" stroke-width="1.200"/></svg><span style="position:absolute;left:179px;top:267.0px;font:normal 14.7px/20px 'Liberation Sans',sans-serif;color:#000;white-space:nowrap;letter-spacing:0.009px;">Bannwald_alt.gpx</span><svg width="22" height="15" viewBox="0 0 22 15" style="position:absolute;left:152px;top:291.5px"><path d="M1.500,4.500 C1.500,1.800 4,1 7,1.800 C9.500,2.500 12.500,2.500 15,1.800 C18,1 20.500,1.800 20.500,4.500 C20.500,7.500 20,10.500 17.800,12.500 C15.800,14 14.500,11.500 11,10.500 C7.500,11.500 6.200,14 4.200,12.500 C2,10.500 1.500,7.500 1.500,4.500z" fill="#cfdcee" stroke="#3f4d60" stroke-width="1.400"/><path d="M3,4.500 C3,3 5,2.600 7,3.200 C9.500,3.900 12.500,3.900 15,3.200 C17,2.600 19,3 19,4.500" fill="none" stroke="#eef3fa" stroke-width="1.200"/></svg><span style="position:absolute;left:179px;top:291.0px;font:normal 14.7px/20px 'Liberation Sans',sans-serif;color:#000;white-space:nowrap;letter-spacing:0.328px;">Heidewald.gpx</span><svg width="22" height="15" viewBox="0 0 22 15" style="position:absolute;left:152px;top:315.5px"><path d="M1.500,4.500 C1.500,1.800 4,1 7,1.800 C9.500,2.500 12.500,2.500 15,1.800 C18,1 20.500,1.800 20.500,4.500 C20.500,7.500 20,10.500 17.800,12.500 C15.800,14 14.500,11.500 11,10.500 C7.500,11.500 6.200,14 4.200,12.500 C2,10.500 1.500,7.500 1.500,4.500z" fill="#cfdcee" stroke="#3f4d60" stroke-width="1.400"/><path d="M3,4.500 C3,3 5,2.600 7,3.200 C9.500,3.900 12.500,3.900 15,3.200 C17,2.600 19,3 19,4.500" fill="none" stroke="#eef3fa" stroke-width="1.200"/></svg><span style="position:absolute;left:179px;top:315.0px;font:normal 14.7px/20px 'Liberation Sans',sans-serif;color:#000;white-space:nowrap;letter-spacing:-0.053px;">Misse.gpx</span><svg width="22" height="15" viewBox="0 0 22 15" style="position:absolute;left:152px;top:339.5px"><path d="M1.500,4.500 C1.500,1.800 4,1 7,1.800 C9.500,2.500 12.500,2.500 15,1.800 C18,1 20.500,1.800 20.500,4.500 C20.500,7.500 20,10.500 17.800,12.500 C15.800,14 14.500,11.500 11,10.500 C7.500,11.500 6.200,14 4.200,12.500 C2,10.500 1.500,7.500 1.500,4.500z" fill="#cfdcee" stroke="#3f4d60" stroke-width="1.400"/><path d="M3,4.500 C3,3 5,2.600 7,3.200 C9.500,3.900 12.500,3.900 15,3.200 C17,2.600 19,3 19,4.500" fill="none" stroke="#eef3fa" stroke-width="1.200"/></svg><span style="position:absolute;left:179px;top:339.0px;font:normal 14.7px/20px 'Liberation Sans',sans-serif;color:#000;white-space:nowrap;letter-spacing:0.204px;">Moorkern1.gpx</span><svg width="22" height="15" viewBox="0 0 22 15" style="position:absolute;left:152px;top:363.5px"><path d="M1.500,4.500 C1.500,1.800 4,1 7,1.800 C9.500,2.500 12.500,2.500 15,1.800 C18,1 20.500,1.800 20.500,4.500 C20.500,7.500 20,10.500 17.800,12.500 C15.800,14 14.500,11.500 11,10.500 C7.500,11.500 6.200,14 4.200,12.500 C2,10.500 1.500,7.500 1.500,4.500z" fill="#cfdcee" stroke="#3f4d60" stroke-width="1.400"/><path d="M3,4.500 C3,3 5,2.600 7,3.200 C9.500,3.900 12.500,3.900 15,3.200 C17,2.600 19,3 19,4.500" fill="none" stroke="#eef3fa" stroke-width="1.200"/></svg><span style="position:absolute;left:179px;top:363.0px;font:normal 14.7px/20px 'Liberation Sans',sans-serif;color:#000;white-space:nowrap;letter-spacing:0.204px;">Moorkern2.gpx</span><svg width="22" height="15" viewBox="0 0 22 15" style="position:absolute;left:152px;top:387.5px"><path d="M1.500,4.500 C1.500,1.800 4,1 7,1.800 C9.500,2.500 12.500,2.500 15,1.800 C18,1 20.500,1.800 20.500,4.500 C20.500,7.500 20,10.500 17.800,12.500 C15.800,14 14.500,11.500 11,10.500 C7.500,11.500 6.200,14 4.200,12.500 C2,10.500 1.500,7.500 1.500,4.500z" fill="#cfdcee" stroke="#3f4d60" stroke-width="1.400"/><path d="M3,4.500 C3,3 5,2.600 7,3.200 C9.500,3.900 12.500,3.900 15,3.200 C17,2.600 19,3 19,4.500" fill="none" stroke="#eef3fa" stroke-width="1.200"/></svg><span style="position:absolute;left:179px;top:387.0px;font:normal 14.7px/20px 'Liberation Sans',sans-serif;color:#000;white-space:nowrap;letter-spacing:0.204px;">Moorkern3.gpx</span><svg width="22" height="15" viewBox="0 0 22 15" style="position:absolute;left:152px;top:411.5px"><path d="M1.500,4.500 C1.500,1.800 4,1 7,1.800 C9.500,2.500 12.500,2.500 15,1.800 C18,1 20.500,1.800 20.500,4.500 C20.500,7.500 20,10.500 17.800,12.500 C15.800,14 14.500,11.500 11,10.500 C7.500,11.500 6.200,14 4.200,12.500 C2,10.500 1.500,7.500 1.500,4.500z" fill="#cfdcee" stroke="#3f4d60" stroke-width="1.400"/><path d="M3,4.500 C3,3 5,2.600 7,3.200 C9.500,3.900 12.500,3.900 15,3.200 C17,2.600 19,3 19,4.500" fill="none" stroke="#eef3fa" stroke-width="1.200"/></svg><span style="position:absolute;left:179px;top:411.0px;font:normal 14.7px/20px 'Liberation Sans',sans-serif;color:#000;white-space:nowrap;letter-spacing:0.204px;">Moorkern4.gpx</span><svg width="22" height="15" viewBox="0 0 22 15" style="position:absolute;left:152px;top:435.5px"><path d="M1.500,4.500 C1.500,1.800 4,1 7,1.800 C9.500,2.500 12.500,2.500 15,1.800 C18,1 20.500,1.800 20.500,4.500 C20.500,7.500 20,10.500 17.800,12.500 C15.800,14 14.500,11.500 11,10.500 C7.500,11.500 6.200,14 4.200,12.500 C2,10.500 1.500,7.500 1.500,4.500z" fill="#cfdcee" stroke="#3f4d60" stroke-width="1.400"/><path d="M3,4.500 C3,3 5,2.600 7,3.200 C9.500,3.900 12.500,3.900 15,3.200 C17,2.600 19,3 19,4.500" fill="none" stroke="#eef3fa" stroke-width="1.200"/></svg><span style="position:absolute;left:179px;top:435.0px;font:normal 14.7px/20px 'Liberation Sans',sans-serif;color:#000;white-space:nowrap;letter-spacing:0.416px;">Moorwald.gpx</span><svg width="22" height="15" viewBox="0 0 22 15" style="position:absolute;left:152px;top:459.5px"><path d="M1.500,4.500 C1.500,1.800 4,1 7,1.800 C9.500,2.500 12.500,2.500 15,1.800 C18,1 20.500,1.800 20.500,4.500 C20.500,7.500 20,10.500 17.800,12.500 C15.800,14 14.500,11.500 11,10.500 C7.500,11.500 6.200,14 4.200,12.500 C2,10.500 1.500,7.500 1.500,4.500z" fill="#cfdcee" stroke="#3f4d60" stroke-width="1.400"/><path d="M3,4.500 C3,3 5,2.600 7,3.200 C9.500,3.900 12.500,3.900 15,3.200 C17,2.600 19,3 19,4.500" fill="none" stroke="#eef3fa" stroke-width="1.200"/></svg><span style="position:absolute;left:179px;top:459.0px;font:normal 14.7px/20px 'Liberation Sans',sans-serif;color:#000;white-space:nowrap;letter-spacing:-0.306px;">NSG.gpx</span><svg width="22" height="15" viewBox="0 0 22 15" style="position:absolute;left:152px;top:483.5px"><path d="M1.500,4.500 C1.500,1.800 4,1 7,1.800 C9.500,2.500 12.500,2.500 15,1.800 C18,1 20.500,1.800 20.500,4.500 C20.500,7.500 20,10.500 17.800,12.500 C15.800,14 14.500,11.500 11,10.500 C7.500,11.500 6.200,14 4.200,12.500 C2,10.500 1.500,7.500 1.500,4.500z" fill="#cfdcee" stroke="#3f4d60" stroke-width="1.400"/><path d="M3,4.500 C3,3 5,2.600 7,3.200 C9.500,3.900 12.500,3.900 15,3.200 C17,2.600 19,3 19,4.500" fill="none" stroke="#eef3fa" stroke-width="1.200"/></svg><span style="position:absolute;left:179px;top:483.0px;font:normal 14.7px/20px 'Liberation Sans',sans-serif;color:#000;white-space:nowrap;letter-spacing:0.064px;">Rundweg.gpx</span><svg width="22" height="15" viewBox="0 0 22 15" style="position:absolute;left:152px;top:507.5px"><path d="M1.500,4.500 C1.500,1.800 4,1 7,1.800 C9.500,2.500 12.500,2.500 15,1.800 C18,1 20.500,1.800 20.500,4.500 C20.500,7.500 20,10.500 17.800,12.500 C15.800,14 14.500,11.500 11,10.500 C7.500,11.500 6.200,14 4.200,12.500 C2,10.500 1.500,7.500 1.500,4.500z" fill="#cfdcee" stroke="#3f4d60" stroke-width="1.400"/><path d="M3,4.500 C3,3 5,2.600 7,3.200 C9.500,3.900 12.500,3.900 15,3.200 C17,2.600 19,3 19,4.500" fill="none" stroke="#eef3fa" stroke-width="1.200"/></svg><span style="position:absolute;left:179px;top:507.0px;font:normal 14.7px/20px 'Liberation Sans',sans-serif;color:#000;white-space:nowrap;letter-spacing:-0.302px;">Strasse.gpx</span><svg width="22" height="15" viewBox="0 0 22 15" style="position:absolute;left:152px;top:531.5px"><path d="M1.500,4.500 C1.500,1.800 4,1 7,1.800 C9.500,2.500 12.500,2.500 15,1.800 C18,1 20.500,1.800 20.500,4.500 C20.500,7.500 20,10.500 17.800,12.500 C15.800,14 14.500,11.500 11,10.500 C7.500,11.500 6.200,14 4.200,12.500 C2,10.500 1.500,7.500 1.500,4.500z" fill="#cfdcee" stroke="#3f4d60" stroke-width="1.400"/><path d="M3,4.500 C3,3 5,2.600 7,3.200 C9.500,3.900 12.500,3.900 15,3.200 C17,2.600 19,3 19,4.500" fill="none" stroke="#eef3fa" stroke-width="1.200"/></svg><span style="position:absolute;left:179px;top:531.0px;font:normal 14.7px/20px 'Liberation Sans',sans-serif;color:#000;white-space:nowrap;letter-spacing:0.168px;">Tannenwald.gpx</span><svg width="22" height="15" viewBox="0 0 22 15" style="position:absolute;left:126px;top:555.5px"><path d="M1.500,4.500 C1.500,1.800 4,1 7,1.800 C9.500,2.500 12.500,2.500 15,1.800 C18,1 20.500,1.800 20.500,4.500 C20.500,7.500 20,10.500 17.800,12.500 C15.800,14 14.500,11.500 11,10.500 C7.500,11.500 6.200,14 4.200,12.500 C2,10.500 1.500,7.500 1.500,4.500z" fill="#cfdcee" stroke="#3f4d60" stroke-width="1.400"/><path d="M3,4.500 C3,3 5,2.600 7,3.200 C9.500,3.900 12.500,3.900 15,3.200 C17,2.600 19,3 19,4.500" fill="none" stroke="#eef3fa" stroke-width="1.200"/></svg><span style="position:absolute;left:154px;top:555.0px;font:normal 14.7px/20px 'Liberation Sans',sans-serif;color:#000;white-space:nowrap;">OR - Altholz + Funde 2</span><svg width="10" height="12" viewBox="0 0 10 12" style="position:absolute;left:109px;top:582.5px"><path d="M2.5,1.5 L7.5,6 L2.5,10.5z" fill="#fff" stroke="#a0a0a0" stroke-width="1"/></svg><svg width="14" height="18" viewBox="0 0 14 18" style="position:absolute;left:130px;top:579.5px"><rect x="1" y="0.5" width="12" height="17" fill="#e6e6e0" stroke="#777" stroke-width="1"/><path d="M7,1 v9" stroke="#444" stroke-width="2" stroke-dasharray="1.5 1.5"/><rect x="5" y="10" width="4" height="5" fill="#888" stroke="#333" stroke-width="0.8"/></svg><span style="position:absolute;left:154px;top:579.0px;font:normal 14.7px/20px 'Liberation Sans',sans-serif;color:#000;white-space:nowrap;">OR - Altholz + Funde 2</span><svg width="10" height="12" viewBox="0 0 10 12" style="position:absolute;left:85px;top:606.5px"><path d="M2.5,1.5 L7.5,6 L2.5,10.5z" fill="#fff" stroke="#a0a0a0" stroke-width="1"/></svg><svg width="19" height="16" viewBox="0 0 19 16" style="position:absolute;left:104px;top:604.5px"><path d="M1,1.5 h6.5 l1.5,2 h8.5 v11 h-16.5z" fill="#e8e8e8" stroke="#8d8d8d" stroke-width="1"/><path d="M3,6.5 h15 l-0.5,8 h-16.5z" fill="#f4f4f4" stroke="#8d8d8d" stroke-width="1"/></svg><span style="position:absolute;left:129px;top:603.0px;font:normal 14.7px/20px 'Liberation Sans',sans-serif;color:#000;white-space:nowrap;letter-spacing:-0.084px;">JPG-Import</span><svg width="10" height="12" viewBox="0 0 10 12" style="position:absolute;left:85px;top:630.5px"><path d="M2.5,1.5 L7.5,6 L2.5,10.5z" fill="#fff" stroke="#a0a0a0" stroke-width="1"/></svg><svg width="19" height="16" viewBox="0 0 19 16" style="position:absolute;left:104px;top:628.5px"><path d="M1,1.5 h6.5 l1.5,2 h8.5 v11 h-16.5z" fill="#e8e8e8" stroke="#8d8d8d" stroke-width="1"/><path d="M3,6.5 h15 l-0.5,8 h-16.5z" fill="#f4f4f4" stroke="#8d8d8d" stroke-width="1"/></svg><span style="position:absolute;left:129px;top:627.0px;font:normal 14.7px/20px 'Liberation Sans',sans-serif;color:#000;white-space:nowrap;letter-spacing:0.271px;">kml-Exporte</span><svg width="10" height="12" viewBox="0 0 10 12" style="position:absolute;left:85px;top:654.5px"><path d="M2.5,1.5 L7.5,6 L2.5,10.5z" fill="#fff" stroke="#a0a0a0" stroke-width="1"/></svg><svg width="19" height="16" viewBox="0 0 19 16" style="position:absolute;left:104px;top:652.5px"><path d="M1,1.5 h6.5 l1.5,2 h8.5 v11 h-16.5z" fill="#e8e8e8" stroke="#8d8d8d" stroke-width="1"/><path d="M3,6.5 h15 l-0.5,8 h-16.5z" fill="#f4f4f4" stroke="#8d8d8d" stroke-width="1"/></svg><span style="position:absolute;left:129px;top:651.0px;font:normal 14.7px/20px 'Liberation Sans',sans-serif;color:#000;white-space:nowrap;letter-spacing:0.368px;">models</span><svg width="10" height="12" viewBox="0 0 10 12" style="position:absolute;left:85px;top:678.5px"><path d="M2.5,1.5 L7.5,6 L2.5,10.5z" fill="#fff" stroke="#a0a0a0" stroke-width="1"/></svg><svg width="19" height="16" viewBox="0 0 19 16" style="position:absolute;left:104px;top:676.5px"><path d="M1,1.5 h6.5 l1.5,2 h8.5 v11 h-16.5z" fill="#e8e8e8" stroke="#8d8d8d" stroke-width="1"/><path d="M3,6.5 h15 l-0.5,8 h-16.5z" fill="#f4f4f4" stroke="#8d8d8d" stroke-width="1"/></svg><span style="position:absolute;left:129px;top:675.0px;font:normal 14.7px/20px 'Liberation Sans',sans-serif;color:#000;white-space:nowrap;">nicht georeferenzierte Kart</span><svg width="10" height="12" viewBox="0 0 10 12" style="position:absolute;left:85px;top:702.5px"><path d="M2.5,1.5 L7.5,6 L2.5,10.5z" fill="#fff" stroke="#a0a0a0" stroke-width="1"/></svg><svg width="19" height="16" viewBox="0 0 19 16" style="position:absolute;left:104px;top:700.5px"><path d="M1,1.5 h6.5 l1.5,2 h8.5 v11 h-16.5z" fill="#e8e8e8" stroke="#8d8d8d" stroke-width="1"/><path d="M3,6.5 h15 l-0.5,8 h-16.5z" fill="#f4f4f4" stroke="#8d8d8d" stroke-width="1"/></svg><span style="position:absolute;left:129px;top:699.0px;font:normal 14.7px/20px 'Liberation Sans',sans-serif;color:#000;white-space:nowrap;letter-spacing:0.284px;">Offline-Karten</span><svg width="10" height="12" viewBox="0 0 10 12" style="position:absolute;left:85px;top:726.5px"><path d="M2.5,1.5 L7.5,6 L2.5,10.5z" fill="#fff" stroke="#a0a0a0" stroke-width="1"/></svg><svg width="19" height="16" viewBox="0 0 19 16" style="position:absolute;left:104px;top:724.5px"><path d="M1,1.5 h6.5 l1.5,2 h8.5 v11 h-16.5z" fill="#e8e8e8" stroke="#8d8d8d" stroke-width="1"/><path d="M3,6.5 h15 l-0.5,8 h-16.5z" fill="#f4f4f4" stroke="#8d8d8d" stroke-width="1"/></svg><span style="position:absolute;left:129px;top:723.0px;font:normal 14.7px/20px 'Liberation Sans',sans-serif;color:#000;white-space:nowrap;">shp-hafen-import</span></div><div style="position:absolute;left:1899px;top:248px;width:19px;height:731px;background:#f0f0f0"></div><svg width="12" height="8" style="position:absolute;left:1904px;top:254px"><path d="M6,1 L11,7 L1,7z" fill="#404040"/></svg><svg width="12" height="8" style="position:absolute;left:1904px;top:963px"><path d="M6,7 L11,1 L1,1z" fill="#404040"/></svg><div style="position:absolute;left:1900px;top:354px;width:18px;height:208px;box-sizing:border-box;border:1px solid #9a9a9a;border-radius:2px;background:linear-gradient(90deg,#f2f2f2 0%,#dcdcdc 48%,#cfcfcf 52%,#d8d8d8 100%)"></div><svg width="10" height="10" style="position:absolute;left:1905px;top:454px"><path d="M0,1.5 h9 M0,4.5 h9 M0,7.5 h9" stroke="#555" stroke-width="1"/></svg><div style="position:absolute;left:1594px;top:979px;width:305px;height:19px;background:#f0f0f0"></div><div style="position:absolute;left:1617px;top:980px;width:170px;height:17px;box-sizing:border-box;border:1px solid #9a9a9a;border-radius:2px;background:linear-gradient(180deg,#f2f2f2 0%,#dcdcdc 48%,#cfcfcf 52%,#d8d8d8 100%)"></div><svg width="10" height="10" style="position:absolute;left:1698.0px;top:984.5px"><path d="M1.5,0 v8 M4.5,0 v8 M7.5,0 v8" stroke="#555" stroke-width="1"/></svg><svg width="8" height="10" style="position:absolute;left:1600px;top:983.5px"><path d="M6,1 L1,5 L6,9z" fill="#404040"/></svg><svg width="8" height="10" style="position:absolute;left:1886px;top:983.5px"><path d="M1,1 L6,5 L1,9z" fill="#404040"/></svg><div style="position:absolute;left:1899px;top:979px;width:19px;height:19px;background:#f0f0f0"></div><div style="position:absolute;left:4px;top:1004px;width:279px;height:23px;box-sizing:border-box;border:1px solid #b5cfe7;border-radius:2px;background:#fff"></div><svg width="16" height="16" viewBox="0 0 16 16" style="position:absolute;left:11px;top:1008px"><circle cx="6" cy="6" r="4.3" fill="none" stroke="#8a8a8a" stroke-width="1.4"/><path d="M9.2,9.2 L13.5,13.5" stroke="#8a8a8a" stroke-width="1.8"/></svg><span style="position:absolute;left:33px;top:1005.5px;font:normal 12.8px/20px 'Liberation Sans',sans-serif;color:#7f7f7f;white-space:nowrap;letter-spacing:0.054px;">Zu suchender Typ (Strg+K)</span><svg width="9" height="18" viewBox="0 0 9 18" style="position:absolute;left:62px;top:1007px"><path d="M1,1 h2.5 q1,0 1,1 v14 q0,1 -1,1 h-2.5 M8,1 h-2.5 q-1,0 -1,1 M8,17 h-2.5 q-1,0 -1,-1 M3,9 h3" fill="none" stroke="#000" stroke-width="1.1"/></svg><span style="position:absolute;left:953px;top:1005.5px;font:normal 12.7px/20px 'Liberation Sans',sans-serif;color:#000;white-space:nowrap;letter-spacing:-0.060px;">Koordinate</span><div style="position:absolute;left:1018px;top:1004px;width:110px;height:23px;box-sizing:border-box;border:1px solid #e3e6ec;border-top-color:#abadb3;background:#fff"></div><span style="position:absolute;left:1025px;top:1005.5px;font:normal 12.7px/20px 'Liberation Sans',sans-serif;color:#000;white-space:nowrap;letter-spacing:-0.077px;">961805,6230028</span><svg width="20" height="20" viewBox="0 0 24 24" style="position:absolute;left:1130px;top:1005px;overflow:visible;"><ellipse cx="9" cy="7.500" rx="3.300" ry="5.500" transform="rotate(-28 9 7.500)" fill="#fff" stroke="#000" stroke-width="2"/><path d="M4,10 C5,15 8,21 14,22 C19,22.500 21,18 18,14 C16,11.500 13,11 11,12" fill="#fff" stroke="#000" stroke-width="2"/><circle cx="14.500" cy="17.500" r="2" fill="#fff" stroke="#000" stroke-width="1.600"/><path d="M3,14 l-1.500,1 M18,4 l1.500,-1.500 M20,8 l1.500,-0.500 M15,2.500 l0.500,-1.500" stroke="#000" stroke-width="1"/></svg><span style="position:absolute;left:1164px;top:1005.5px;font:normal 12.7px/20px 'Liberation Sans',sans-serif;color:#000;white-space:nowrap;letter-spacing:-0.254px;">Maßstab</span><div style="position:absolute;left:1216px;top:1004px;width:90px;height:23px;box-sizing:border-box;border:1px solid #e3e6ec;border-top-color:#abadb3;background:#fff"></div><span style="position:absolute;left:1221px;top:1005.5px;font:normal 12.7px/20px 'Liberation Sans',sans-serif;color:#000;white-space:nowrap;letter-spacing:0.277px;">1:7418</span><svg width="10" height="6" style="position:absolute;left:1289px;top:1013px"><path d="M0,0 h10 l-5,6z" fill="#000"/></svg><svg width="18" height="20" viewBox="0 0 18 20" style="position:absolute;left:1316px;top:1005px"><path d="M5,9 v-3 a4,4 0 0 1 8,0 v3" fill="none" stroke="#8a8a8a" stroke-width="2"/><rect x="2.5" y="9" width="13" height="10" rx="1" fill="#6b6b6b"/></svg><span style="position:absolute;left:1342px;top:1005.5px;font:normal 12.7px/20px 'Liberation Sans',sans-serif;color:#000;white-space:nowrap;letter-spacing:-0.021px;">Vergrößerung</span><div style="position:absolute;left:1424px;top:1004px;width:85px;height:23px;box-sizing:border-box;border:1px solid #e3e6ec;border-top-color:#abadb3;background:#fff"></div><span style="position:absolute;left:1427px;top:1005.5px;font:normal 12.7px/20px 'Liberation Sans',sans-serif;color:#000;white-space:nowrap;letter-spacing:0.167px;">100%</span><div style="position:absolute;left:1495px;top:1006px;width:13px;height:19px;box-sizing:border-box;border:1px solid #c5c9d0;background:#f4f4f4"></div><svg width="9" height="15" style="position:absolute;left:1497px;top:1008px"><path d="M4.5,0.5 L8.5,5 L0.5,5z M4.5,14.5 L8.5,10 L0.5,10z" fill="#4d6185"/></svg><span style="position:absolute;left:1520px;top:1005.5px;font:normal 12.7px/20px 'Liberation Sans',sans-serif;color:#000;white-space:nowrap;letter-spacing:-0.156px;">Drehung</span><div style="position:absolute;left:1577px;top:1004px;width:84px;height:23px;box-sizing:border-box;border:1px solid #e3e6ec;border-top-color:#abadb3;background:#fff"></div><span style="position:absolute;left:1580px;top:1005.5px;font:normal 12.7px/20px 'Liberation Sans',sans-serif;color:#000;white-space:nowrap;letter-spacing:0.488px;">0,0 °</span><div style="position:absolute;left:1646px;top:1006px;width:13px;height:19px;box-sizing:border-box;border:1px solid #c5c9d0;background:#f4f4f4"></div><svg width="9" height="15" style="position:absolute;left:1648px;top:1008px"><path d="M4.5,0.5 L8.5,5 L0.5,5z M4.5,14.5 L8.5,10 L0.5,10z" fill="#4d6185"/></svg><div style="position:absolute;left:1668px;top:1008px;width:15px;height:15px;box-sizing:border-box;border:1px solid #8e8f8f;background:linear-gradient(135deg,#dfe3e6,#fdfdfd)"></div><svg width="15" height="15" viewBox="0 0 15 15" style="position:absolute;left:1668px;top:1008px"><path d="M3.3,7.2 L6,11 L11.5,3.2" fill="none" stroke="#2f4a8c" stroke-width="2" stroke-linecap="round" stroke-linejoin="round"/></svg><span style="position:absolute;left:1690px;top:1005.5px;font:normal 12.7px/20px 'Liberation Sans',sans-serif;color:#000;white-space:nowrap;letter-spacing:-0.218px;">Zeichnen</span><svg width="19" height="19" viewBox="0 0 24 24" style="position:absolute;left:1758px;top:1006px;overflow:visible;"><ellipse cx="12" cy="12" rx="11" ry="9" fill="none" stroke="#555" stroke-width="1.500"/><ellipse cx="12" cy="12" rx="5" ry="9" fill="none" stroke="#555" stroke-width="1.300"/><path d="M1,12 h22 M3,7 h18 M3,17 h18 M12,3 v18" stroke="#555" stroke-width="1.300"/></svg><span style="position:absolute;left:1782px;top:1005.5px;font:normal 12.7px/20px 'Liberation Sans',sans-serif;color:#000;white-space:nowrap;letter-spacing:-0.509px;">EPSG:3857</span><svg width="24" height="24" viewBox="0 0 24 24" style="position:absolute;left:1861px;top:1004px;overflow:visible;"><path d="M12,3 c6,0 10,3.500 10,8 c0,4.500 -4,8 -10,8 c-1,0 -2,-0.100 -3,-0.400 l-4.500,3 1,-4.500 c-2.200,-1.500 -3.500,-3.700 -3.500,-6.100 c0,-4.500 4,-8 10,-8z" fill="#555"/><circle cx="7.500" cy="11" r="1.500" fill="#fff"/><circle cx="12" cy="11" r="1.500" fill="#fff"/><circle cx="16.500" cy="11" r="1.500" fill="#fff"/></svg><svg width="22" height="22" viewBox="0 0 24 24" style="position:absolute;left:1895px;top:1005px;overflow:visible;"><path d="M2,8 h5.5 c-1.5,-3 0,-5 2,-5 c2,0 3.500,2 2,5 h5.500 v4.500 c3,-1.500 5,0 5,2 c0,2 -2,3.500 -5,2 v5.500 h-15z" fill="#b4b4b4" stroke="#5a5a5a" stroke-width="1.200"/><path d="M2,8 l7,7 -7,7 M9,15 l8,-7" stroke="#e6e6e6" stroke-width="1.300" fill="none"/><path d="M15,4 c3,-3 8,-2 8,2 c0,3 -3,4 -4,2" fill="none" stroke="#5a5a5a" stroke-width="1.200"/></svg><div style="position:absolute;left:0;top:1030px;width:1920px;height:2px;background:#3c3c3c"></div></body></html>
